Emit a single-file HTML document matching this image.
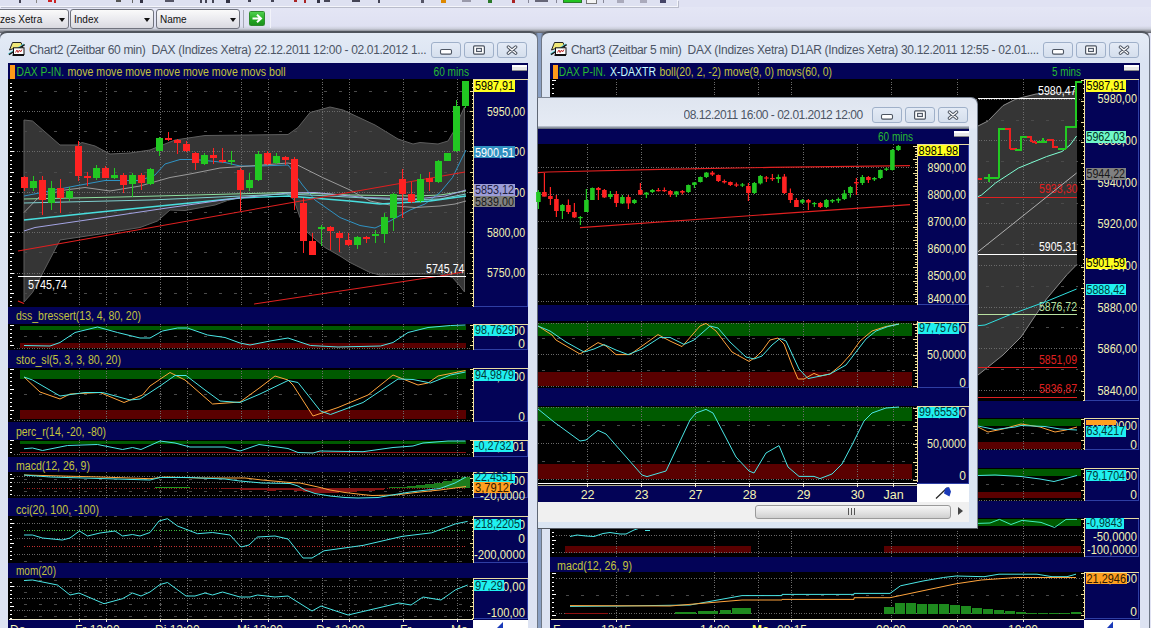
<!DOCTYPE html>
<html><head><meta charset="utf-8"><title>Charts</title>
<style>
html,body{margin:0;padding:0}
body{width:1151px;height:628px;overflow:hidden;position:relative;background:#e0e2f3;font-family:"Liberation Sans",Arial,sans-serif;font-size:12px}
div,span{position:absolute;box-sizing:border-box}
.L{position:absolute;left:0;top:0}
.tb{left:0;top:0;width:678px;height:7px;background:#dee1f1;border-bottom:1px solid #f4f5fb;border-right:1px solid #f4f5fb;box-shadow:1px 1px 0 #b9bccb}
.tbg{left:0;top:7px;width:1151px;height:26px;background:linear-gradient(#e4e6f5,#dfe1f2 19px,#c9ccd8 22px,#8d9098 24px,#5a5d64 26px)}
.cb{top:9px;height:20px;border:1px solid #70737e;border-radius:3px;background:linear-gradient(#fafafa,#e9e9ee 55%,#d9d9e0);color:#111;font-size:11.5px;line-height:18px;white-space:nowrap;overflow:hidden}
.cb span{left:3px;top:0;transform:scaleX(0.87);transform-origin:0 0}
.cb i{position:absolute;right:3px;top:7.5px;width:0;height:0;border-left:3.5px solid transparent;border-right:3.5px solid transparent;border-top:4px solid #111}
.win{background:linear-gradient(#e4ebf6,#dbe4f2 30px,#dde3f2);border:1px solid #6e7785;border-top:2px solid #50555d;border-radius:8px 8px 0 0}
.ttl{color:#4c5565;font-size:12px;white-space:nowrap;overflow:hidden;line-height:18px;height:18px}
.wb{height:16px;width:30px;border:1px solid #9fb0c9;border-radius:3px;background:linear-gradient(#e4ebf6,#d5dfed)}
.ico{width:17px;height:15px}
</style></head><body>

<div class="tbg"></div>
<div class="tb"></div>
<div style="left:563px;top:0;width:19px;height:3px;background:#22c322;border:1px solid #2a7a2a;border-top:0"></div>
<div style="left:586px;top:0;width:11px;height:4px;background:#f4f4f4;border:1px solid #777;border-top:0"></div>
<div class="cb" style="left:-8px;width:77px"><span style="left:7px">zes Xetra</span><i></i></div>
<div class="cb" style="left:70px;width:84px"><span>Index</span><i></i></div>
<div class="cb" style="left:156px;width:84px"><span>Name</span><i></i></div>
<div style="left:243px;top:10px;width:1px;height:18px;background:#a5a8b5"></div>
<div style="left:249px;top:11px;width:16px;height:15px;border:1px solid #2f8a2f;border-radius:1.5px;background:linear-gradient(#4fd04f,#22a822 60%,#1c901c)"><svg width="14" height="13" viewBox="0 0 14 13" style="position:absolute;left:0;top:0"><path d="M2.5 6.5 H10.5 M7 2.8 L11 6.5 L7 10.2" stroke="#fff" stroke-width="2" fill="none"/></svg></div>
<div style="left:270px;top:9px;width:1px;height:19px;background:#f2f3fa"></div>
<div style="left:19px;top:0;width:2px;height:3px;background:#445"></div><div style="left:36px;top:0;width:1px;height:3px;background:#888"></div><div style="left:48px;top:0;width:4px;height:2px;background:#c22"></div><div style="left:54px;top:0;width:2px;height:3px;background:#c22"></div><div style="left:116px;top:0;width:5px;height:2px;background:#555"></div><div style="left:132px;top:0;width:1px;height:3px;background:#666"></div><div style="left:140px;top:0;width:3px;height:3px;background:#334"></div><div style="left:165px;top:0;width:9px;height:2px;background:#556"></div><div style="left:200px;top:0;width:2px;height:3px;background:#445"></div><div style="left:205px;top:0;width:2px;height:3px;background:#445"></div><div style="left:212px;top:0;width:2px;height:3px;background:#445"></div><div style="left:226px;top:0;width:4px;height:3px;background:#334"></div><div style="left:248px;top:0;width:3px;height:2px;background:#445"></div><div style="left:271px;top:0;width:3px;height:2px;background:#445"></div><div style="left:294px;top:0;width:3px;height:2px;background:#a22"></div><div style="left:304px;top:0;width:2px;height:3px;background:#a22"></div><div style="left:317px;top:0;width:3px;height:3px;background:#334"></div><div style="left:324px;top:0;width:6px;height:2px;background:#445"></div><div style="left:352px;top:0;width:8px;height:2px;background:#445"></div><div style="left:378px;top:0;width:2px;height:3px;background:#445"></div><div style="left:421px;top:0;width:3px;height:3px;background:#556"></div><div style="left:441px;top:0;width:5px;height:3px;background:#d80"></div><div style="left:462px;top:0;width:9px;height:2px;background:#99a"></div><div style="left:488px;top:0;width:4px;height:3px;background:#2a7a2a"></div><div style="left:512px;top:0;width:3px;height:3px;background:#a22"></div><div style="left:528px;top:0;width:1px;height:3px;background:#889"></div><div style="left:535px;top:0;width:13px;height:2px;background:#667"></div><div style="left:556px;top:0;width:1px;height:3px;background:#889"></div><div style="left:603px;top:0;width:1px;height:3px;background:#889"></div><div style="left:617px;top:0;width:7px;height:3px;background:#aab"></div><div style="left:640px;top:0;width:7px;height:3px;background:#aab"></div><div style="left:660px;top:0;width:6px;height:3px;background:#446"></div>
<div style="left:536px;top:33px;width:7px;height:600px;background:linear-gradient(90deg,#5f6f8c,#8aa0c4 30%,#8aa0c4 70%,#5f6f8c)"></div>
<div class="win" style="left:-1px;top:31px;width:539px;height:610px"></div>
<svg style="position:absolute;left:8px;top:41px" width="18" height="16" viewBox="0 0 18 16"><path d="M4.5 1.5 H13 L14.5 5 V7.5 H5.5 L1.5 9 Z" fill="#f0e878" stroke="#222" stroke-width="1"/><path d="M0.4 12.9 L16 3" stroke="#5ad8e0" stroke-width="1.2"/><path d="M1 13.6 L16.7 3.6" stroke="#1a1a1a" stroke-width="1.3"/><rect x="5.5" y="6.8" width="10.5" height="6.7" fill="#fff" stroke="#111" stroke-width="1"/><rect x="4.5" y="13.4" width="11.5" height="1.6" fill="#111"/><path d="M7.5 11.5 L9 9 L10 11.5 L11.5 9 L12.5 11 L14 8.5" stroke="#c03030" stroke-width="1" fill="none"/></svg>
<div class="ttl" id="t2" style="left:29px;top:41px;width:402px;letter-spacing:-0.33px">Chart2 (Zeitbar 60 min)&nbsp; DAX (Indizes Xetra) 22.12.2011 12:00 - 02.01.2012 1...</div>
<div class="wb" style="left:431px;top:42px"><svg width="30" height="16" viewBox="0 0 30 16" style="position:absolute;left:-1px;top:-1px"><rect x="9.5" y="7.5" width="11" height="4.6" rx="1.3" fill="#fff" stroke="#4d5562" stroke-width="1.1"/></svg></div><div class="wb" style="left:464px;top:42px"><svg width="30" height="16" viewBox="0 0 30 16" style="position:absolute;left:-1px;top:-1px"><rect x="9.6" y="3.9" width="10.8" height="8.2" rx="1" fill="#fff" stroke="#4d5562" stroke-width="1.2"/><rect x="12.6" y="6.4" width="4.8" height="3.1" fill="#e8ecf4" stroke="#4d5562" stroke-width="1.1"/></svg></div><div class="wb" style="left:497px;top:42px"><svg width="30" height="16" viewBox="0 0 30 16" style="position:absolute;left:-1px;top:-1px"><path d="M11.3 5 L18.7 11.2 M18.7 5 L11.3 11.2" stroke="#4d5562" stroke-width="3.3" stroke-linecap="round" fill="none"/><path d="M11.3 5 L18.7 11.2 M18.7 5 L11.3 11.2" stroke="#fff" stroke-width="1.3" stroke-linecap="round" fill="none"/></svg></div>
<div class="win" style="left:541px;top:31px;width:609px;height:610px"></div>
<svg style="position:absolute;left:550px;top:41px" width="18" height="16" viewBox="0 0 18 16"><path d="M4.5 1.5 H13 L14.5 5 V7.5 H5.5 L1.5 9 Z" fill="#f0e878" stroke="#222" stroke-width="1"/><path d="M0.4 12.9 L16 3" stroke="#5ad8e0" stroke-width="1.2"/><path d="M1 13.6 L16.7 3.6" stroke="#1a1a1a" stroke-width="1.3"/><rect x="5.5" y="6.8" width="10.5" height="6.7" fill="#fff" stroke="#111" stroke-width="1"/><rect x="4.5" y="13.4" width="11.5" height="1.6" fill="#111"/><path d="M7.5 11.5 L9 9 L10 11.5 L11.5 9 L12.5 11 L14 8.5" stroke="#c03030" stroke-width="1" fill="none"/></svg>
<div class="ttl" id="t3" style="left:571px;top:41px;width:472px;letter-spacing:-0.31px">Chart3 (Zeitbar 5 min)&nbsp; DAX (Indizes Xetra) D1AR (Indizes Xetra) 30.12.2011 12:55 - 02.01....</div>
<div class="wb" style="left:1043px;top:42px"><svg width="30" height="16" viewBox="0 0 30 16" style="position:absolute;left:-1px;top:-1px"><rect x="9.5" y="7.5" width="11" height="4.6" rx="1.3" fill="#fff" stroke="#4d5562" stroke-width="1.1"/></svg></div><div class="wb" style="left:1076px;top:42px"><svg width="30" height="16" viewBox="0 0 30 16" style="position:absolute;left:-1px;top:-1px"><rect x="9.6" y="3.9" width="10.8" height="8.2" rx="1" fill="#fff" stroke="#4d5562" stroke-width="1.2"/><rect x="12.6" y="6.4" width="4.8" height="3.1" fill="#e8ecf4" stroke="#4d5562" stroke-width="1.1"/></svg></div><div class="wb" style="left:1109px;top:42px"><svg width="30" height="16" viewBox="0 0 30 16" style="position:absolute;left:-1px;top:-1px"><path d="M11.3 5 L18.7 11.2 M18.7 5 L11.3 11.2" stroke="#4d5562" stroke-width="3.3" stroke-linecap="round" fill="none"/><path d="M11.3 5 L18.7 11.2 M18.7 5 L11.3 11.2" stroke="#fff" stroke-width="1.3" stroke-linecap="round" fill="none"/></svg></div>
<div style="left:8px;top:63px;width:520px;height:570px;background:#000"></div>
<div style="left:550px;top:63px;width:590px;height:570px;background:#000"></div>
<svg class="L" width="1151" height="628" viewBox="0 0 1151 628" font-family='"Liberation Sans", Arial, sans-serif' shape-rendering="crispEdges"><rect x="8.0" y="63.0" width="520.0" height="16.0" fill="#030357" />
<rect x="474.0" y="79.0" width="54.0" height="549.0" fill="#030357" />
<rect x="8.0" y="307.0" width="520.0" height="16.5" fill="#030357" />
<rect x="8.0" y="349.5" width="520.0" height="18.5" fill="#030357" />
<rect x="8.0" y="422.0" width="520.0" height="17.5" fill="#030357" />
<rect x="8.0" y="456.5" width="520.0" height="15.5" fill="#030357" />
<rect x="8.0" y="498.0" width="520.0" height="18.0" fill="#030357" />
<rect x="8.0" y="562.5" width="520.0" height="15.0" fill="#030357" />
<rect x="8.0" y="620.0" width="465.0" height="8.0" fill="#030357" />
<rect x="473.0" y="620.0" width="55.0" height="8.0" fill="#ffffff" />
<rect x="10.0" y="65.0" width="5.0" height="14.0" fill="#ff9a1a" />
<text x="16.5" y="76.0" fill="#28bc30" font-size="12" text-anchor="start" textLength="47.5" lengthAdjust="spacingAndGlyphs" >DAX P-IN.</text>
<text x="67.5" y="76.0" fill="#c4c43c" font-size="12" text-anchor="start" textLength="218.0" lengthAdjust="spacingAndGlyphs" >move move move move move move movs boll</text>
<text x="433.5" y="76.0" fill="#28bc30" font-size="12" text-anchor="start" textLength="35.5" lengthAdjust="spacingAndGlyphs" >60 mins</text>
<rect x="512.0" y="65.0" width="15.0" height="6.0" fill="#e8e8e8" />
<rect x="512.0" y="65.0" width="15.0" height="2.0" fill="#ffffff" />
<line x1="512.0" y1="70.5" x2="527.0" y2="70.5" stroke="#888" stroke-width="1"/>
<rect x="20.0" y="325.5" width="446.0" height="4.5" fill="#005a00" />
<rect x="20.0" y="342.5" width="446.0" height="5.2" fill="#5a0000" />
<rect x="20.0" y="370.0" width="446.0" height="9.0" fill="#005a00" />
<rect x="20.0" y="409.5" width="446.0" height="9.0" fill="#5a0000" />
<rect x="20.0" y="441.2" width="446.0" height="2.8" fill="#005a00" />
<line x1="20.0" y1="452.2" x2="466.0" y2="452.2" stroke="#8a1010" stroke-width="1"/>
<polygon points="24.0,120.0 32.5,121.0 60.0,145.0 77.5,145.0 82.0,142.5 95.0,146.0 110.0,154.0 130.0,153.0 150.0,150.0 160.0,146.0 175.0,140.0 205.0,135.5 250.0,135.0 288.0,134.5 298.0,127.5 310.0,112.5 330.0,107.0 343.0,110.0 375.0,125.0 398.0,139.0 413.0,144.0 420.0,142.5 438.0,144.0 448.0,141.0 453.0,132.5 458.0,121.0 464.5,107.0 464.5,292.0 460.0,286.0 452.5,277.5 440.0,274.0 415.0,274.0 380.0,275.0 370.0,272.5 350.0,262.5 340.0,256.0 325.0,247.5 307.5,232.5 300.0,217.5 294.0,200.0 285.0,192.5 265.0,195.0 240.0,197.5 227.5,200.5 215.0,205.0 185.0,210.5 170.0,210.0 157.5,221.0 140.0,227.5 100.0,234.0 60.0,240.0 32.5,292.5 24.0,302.0" fill="#353535" stroke="#5e5e5e" stroke-width="1" shape-rendering="auto"/>
<line x1="79.5" y1="79.0" x2="79.5" y2="307.0" stroke="#6c6c6c" stroke-width="1" stroke-dasharray="1,1.5"/>
<line x1="106.5" y1="79.0" x2="106.5" y2="307.0" stroke="#6c6c6c" stroke-width="1" stroke-dasharray="1,1.5"/>
<line x1="160.5" y1="79.0" x2="160.5" y2="307.0" stroke="#6c6c6c" stroke-width="1" stroke-dasharray="1,1.5"/>
<line x1="187.5" y1="79.0" x2="187.5" y2="307.0" stroke="#6c6c6c" stroke-width="1" stroke-dasharray="1,1.5"/>
<line x1="241.5" y1="79.0" x2="241.5" y2="307.0" stroke="#6c6c6c" stroke-width="1" stroke-dasharray="1,1.5"/>
<line x1="268.5" y1="79.0" x2="268.5" y2="307.0" stroke="#6c6c6c" stroke-width="1" stroke-dasharray="1,1.5"/>
<line x1="322.5" y1="79.0" x2="322.5" y2="307.0" stroke="#6c6c6c" stroke-width="1" stroke-dasharray="1,1.5"/>
<line x1="349.5" y1="79.0" x2="349.5" y2="307.0" stroke="#6c6c6c" stroke-width="1" stroke-dasharray="1,1.5"/>
<line x1="403.5" y1="79.0" x2="403.5" y2="307.0" stroke="#6c6c6c" stroke-width="1" stroke-dasharray="1,1.5"/>
<line x1="457.5" y1="79.0" x2="457.5" y2="307.0" stroke="#6c6c6c" stroke-width="1" stroke-dasharray="1,1.5"/>
<line x1="79.5" y1="323.5" x2="79.5" y2="349.5" stroke="#6c6c6c" stroke-width="1" stroke-dasharray="1,1.5"/>
<line x1="106.5" y1="323.5" x2="106.5" y2="349.5" stroke="#6c6c6c" stroke-width="1" stroke-dasharray="1,1.5"/>
<line x1="160.5" y1="323.5" x2="160.5" y2="349.5" stroke="#6c6c6c" stroke-width="1" stroke-dasharray="1,1.5"/>
<line x1="187.5" y1="323.5" x2="187.5" y2="349.5" stroke="#6c6c6c" stroke-width="1" stroke-dasharray="1,1.5"/>
<line x1="241.5" y1="323.5" x2="241.5" y2="349.5" stroke="#6c6c6c" stroke-width="1" stroke-dasharray="1,1.5"/>
<line x1="268.5" y1="323.5" x2="268.5" y2="349.5" stroke="#6c6c6c" stroke-width="1" stroke-dasharray="1,1.5"/>
<line x1="322.5" y1="323.5" x2="322.5" y2="349.5" stroke="#6c6c6c" stroke-width="1" stroke-dasharray="1,1.5"/>
<line x1="349.5" y1="323.5" x2="349.5" y2="349.5" stroke="#6c6c6c" stroke-width="1" stroke-dasharray="1,1.5"/>
<line x1="403.5" y1="323.5" x2="403.5" y2="349.5" stroke="#6c6c6c" stroke-width="1" stroke-dasharray="1,1.5"/>
<line x1="457.5" y1="323.5" x2="457.5" y2="349.5" stroke="#6c6c6c" stroke-width="1" stroke-dasharray="1,1.5"/>
<line x1="79.5" y1="368.0" x2="79.5" y2="422.0" stroke="#6c6c6c" stroke-width="1" stroke-dasharray="1,1.5"/>
<line x1="106.5" y1="368.0" x2="106.5" y2="422.0" stroke="#6c6c6c" stroke-width="1" stroke-dasharray="1,1.5"/>
<line x1="160.5" y1="368.0" x2="160.5" y2="422.0" stroke="#6c6c6c" stroke-width="1" stroke-dasharray="1,1.5"/>
<line x1="187.5" y1="368.0" x2="187.5" y2="422.0" stroke="#6c6c6c" stroke-width="1" stroke-dasharray="1,1.5"/>
<line x1="241.5" y1="368.0" x2="241.5" y2="422.0" stroke="#6c6c6c" stroke-width="1" stroke-dasharray="1,1.5"/>
<line x1="268.5" y1="368.0" x2="268.5" y2="422.0" stroke="#6c6c6c" stroke-width="1" stroke-dasharray="1,1.5"/>
<line x1="322.5" y1="368.0" x2="322.5" y2="422.0" stroke="#6c6c6c" stroke-width="1" stroke-dasharray="1,1.5"/>
<line x1="349.5" y1="368.0" x2="349.5" y2="422.0" stroke="#6c6c6c" stroke-width="1" stroke-dasharray="1,1.5"/>
<line x1="403.5" y1="368.0" x2="403.5" y2="422.0" stroke="#6c6c6c" stroke-width="1" stroke-dasharray="1,1.5"/>
<line x1="457.5" y1="368.0" x2="457.5" y2="422.0" stroke="#6c6c6c" stroke-width="1" stroke-dasharray="1,1.5"/>
<line x1="79.5" y1="439.5" x2="79.5" y2="456.5" stroke="#6c6c6c" stroke-width="1" stroke-dasharray="1,1.5"/>
<line x1="106.5" y1="439.5" x2="106.5" y2="456.5" stroke="#6c6c6c" stroke-width="1" stroke-dasharray="1,1.5"/>
<line x1="160.5" y1="439.5" x2="160.5" y2="456.5" stroke="#6c6c6c" stroke-width="1" stroke-dasharray="1,1.5"/>
<line x1="187.5" y1="439.5" x2="187.5" y2="456.5" stroke="#6c6c6c" stroke-width="1" stroke-dasharray="1,1.5"/>
<line x1="241.5" y1="439.5" x2="241.5" y2="456.5" stroke="#6c6c6c" stroke-width="1" stroke-dasharray="1,1.5"/>
<line x1="268.5" y1="439.5" x2="268.5" y2="456.5" stroke="#6c6c6c" stroke-width="1" stroke-dasharray="1,1.5"/>
<line x1="322.5" y1="439.5" x2="322.5" y2="456.5" stroke="#6c6c6c" stroke-width="1" stroke-dasharray="1,1.5"/>
<line x1="349.5" y1="439.5" x2="349.5" y2="456.5" stroke="#6c6c6c" stroke-width="1" stroke-dasharray="1,1.5"/>
<line x1="403.5" y1="439.5" x2="403.5" y2="456.5" stroke="#6c6c6c" stroke-width="1" stroke-dasharray="1,1.5"/>
<line x1="457.5" y1="439.5" x2="457.5" y2="456.5" stroke="#6c6c6c" stroke-width="1" stroke-dasharray="1,1.5"/>
<line x1="79.5" y1="472.0" x2="79.5" y2="498.0" stroke="#6c6c6c" stroke-width="1" stroke-dasharray="1,1.5"/>
<line x1="106.5" y1="472.0" x2="106.5" y2="498.0" stroke="#6c6c6c" stroke-width="1" stroke-dasharray="1,1.5"/>
<line x1="160.5" y1="472.0" x2="160.5" y2="498.0" stroke="#6c6c6c" stroke-width="1" stroke-dasharray="1,1.5"/>
<line x1="187.5" y1="472.0" x2="187.5" y2="498.0" stroke="#6c6c6c" stroke-width="1" stroke-dasharray="1,1.5"/>
<line x1="241.5" y1="472.0" x2="241.5" y2="498.0" stroke="#6c6c6c" stroke-width="1" stroke-dasharray="1,1.5"/>
<line x1="268.5" y1="472.0" x2="268.5" y2="498.0" stroke="#6c6c6c" stroke-width="1" stroke-dasharray="1,1.5"/>
<line x1="322.5" y1="472.0" x2="322.5" y2="498.0" stroke="#6c6c6c" stroke-width="1" stroke-dasharray="1,1.5"/>
<line x1="349.5" y1="472.0" x2="349.5" y2="498.0" stroke="#6c6c6c" stroke-width="1" stroke-dasharray="1,1.5"/>
<line x1="403.5" y1="472.0" x2="403.5" y2="498.0" stroke="#6c6c6c" stroke-width="1" stroke-dasharray="1,1.5"/>
<line x1="457.5" y1="472.0" x2="457.5" y2="498.0" stroke="#6c6c6c" stroke-width="1" stroke-dasharray="1,1.5"/>
<line x1="79.5" y1="516.0" x2="79.5" y2="562.5" stroke="#6c6c6c" stroke-width="1" stroke-dasharray="1,1.5"/>
<line x1="106.5" y1="516.0" x2="106.5" y2="562.5" stroke="#6c6c6c" stroke-width="1" stroke-dasharray="1,1.5"/>
<line x1="160.5" y1="516.0" x2="160.5" y2="562.5" stroke="#6c6c6c" stroke-width="1" stroke-dasharray="1,1.5"/>
<line x1="187.5" y1="516.0" x2="187.5" y2="562.5" stroke="#6c6c6c" stroke-width="1" stroke-dasharray="1,1.5"/>
<line x1="241.5" y1="516.0" x2="241.5" y2="562.5" stroke="#6c6c6c" stroke-width="1" stroke-dasharray="1,1.5"/>
<line x1="268.5" y1="516.0" x2="268.5" y2="562.5" stroke="#6c6c6c" stroke-width="1" stroke-dasharray="1,1.5"/>
<line x1="322.5" y1="516.0" x2="322.5" y2="562.5" stroke="#6c6c6c" stroke-width="1" stroke-dasharray="1,1.5"/>
<line x1="349.5" y1="516.0" x2="349.5" y2="562.5" stroke="#6c6c6c" stroke-width="1" stroke-dasharray="1,1.5"/>
<line x1="403.5" y1="516.0" x2="403.5" y2="562.5" stroke="#6c6c6c" stroke-width="1" stroke-dasharray="1,1.5"/>
<line x1="457.5" y1="516.0" x2="457.5" y2="562.5" stroke="#6c6c6c" stroke-width="1" stroke-dasharray="1,1.5"/>
<line x1="79.5" y1="577.5" x2="79.5" y2="619.0" stroke="#6c6c6c" stroke-width="1" stroke-dasharray="1,1.5"/>
<line x1="106.5" y1="577.5" x2="106.5" y2="619.0" stroke="#6c6c6c" stroke-width="1" stroke-dasharray="1,1.5"/>
<line x1="160.5" y1="577.5" x2="160.5" y2="619.0" stroke="#6c6c6c" stroke-width="1" stroke-dasharray="1,1.5"/>
<line x1="187.5" y1="577.5" x2="187.5" y2="619.0" stroke="#6c6c6c" stroke-width="1" stroke-dasharray="1,1.5"/>
<line x1="241.5" y1="577.5" x2="241.5" y2="619.0" stroke="#6c6c6c" stroke-width="1" stroke-dasharray="1,1.5"/>
<line x1="268.5" y1="577.5" x2="268.5" y2="619.0" stroke="#6c6c6c" stroke-width="1" stroke-dasharray="1,1.5"/>
<line x1="322.5" y1="577.5" x2="322.5" y2="619.0" stroke="#6c6c6c" stroke-width="1" stroke-dasharray="1,1.5"/>
<line x1="349.5" y1="577.5" x2="349.5" y2="619.0" stroke="#6c6c6c" stroke-width="1" stroke-dasharray="1,1.5"/>
<line x1="403.5" y1="577.5" x2="403.5" y2="619.0" stroke="#6c6c6c" stroke-width="1" stroke-dasharray="1,1.5"/>
<line x1="457.5" y1="577.5" x2="457.5" y2="619.0" stroke="#6c6c6c" stroke-width="1" stroke-dasharray="1,1.5"/>
<line x1="14.0" y1="111.5" x2="472.0" y2="111.5" stroke="#6a6a6a" stroke-width="1" stroke-dasharray="1,1.5"/>
<line x1="14.0" y1="151.9" x2="472.0" y2="151.9" stroke="#6a6a6a" stroke-width="1" stroke-dasharray="1,1.5"/>
<line x1="14.0" y1="192.3" x2="472.0" y2="192.3" stroke="#6a6a6a" stroke-width="1" stroke-dasharray="1,1.5"/>
<line x1="14.0" y1="232.7" x2="472.0" y2="232.7" stroke="#6a6a6a" stroke-width="1" stroke-dasharray="1,1.5"/>
<line x1="14.0" y1="273.0" x2="472.0" y2="273.0" stroke="#6a6a6a" stroke-width="1" stroke-dasharray="1,1.5"/>
<line x1="24.0" y1="91.3" x2="466.0" y2="91.3" stroke="#4a4a4a" stroke-width="1" stroke-dasharray="3,12"/>
<line x1="24.0" y1="131.7" x2="466.0" y2="131.7" stroke="#4a4a4a" stroke-width="1" stroke-dasharray="3,12"/>
<line x1="24.0" y1="172.1" x2="466.0" y2="172.1" stroke="#4a4a4a" stroke-width="1" stroke-dasharray="3,12"/>
<line x1="24.0" y1="212.5" x2="466.0" y2="212.5" stroke="#4a4a4a" stroke-width="1" stroke-dasharray="3,12"/>
<line x1="24.0" y1="252.9" x2="466.0" y2="252.9" stroke="#4a4a4a" stroke-width="1" stroke-dasharray="3,12"/>
<line x1="24.0" y1="293.3" x2="466.0" y2="293.3" stroke="#4a4a4a" stroke-width="1" stroke-dasharray="3,12"/>
<line x1="14.0" y1="348.5" x2="472.0" y2="348.5" stroke="#686868" stroke-width="1" stroke-dasharray="1,1.5"/>
<line x1="24.0" y1="336.5" x2="466.0" y2="336.5" stroke="#4a4a4a" stroke-width="1" stroke-dasharray="3,12"/>
<line x1="14.0" y1="420.5" x2="472.0" y2="420.5" stroke="#686868" stroke-width="1" stroke-dasharray="1,1.5"/>
<line x1="24.0" y1="394.5" x2="466.0" y2="394.5" stroke="#4a4a4a" stroke-width="1" stroke-dasharray="3,12"/>
<line x1="14.0" y1="454.5" x2="472.0" y2="454.5" stroke="#686868" stroke-width="1" stroke-dasharray="1,1.5"/>
<line x1="14.0" y1="476.0" x2="472.0" y2="476.0" stroke="#686868" stroke-width="1" stroke-dasharray="1,1.5"/>
<line x1="14.0" y1="482.5" x2="472.0" y2="482.5" stroke="#686868" stroke-width="1" stroke-dasharray="1,1.5"/>
<line x1="14.0" y1="495.0" x2="472.0" y2="495.0" stroke="#686868" stroke-width="1" stroke-dasharray="1,1.5"/>
<line x1="24.0" y1="479.0" x2="466.0" y2="479.0" stroke="#4a4a4a" stroke-width="1" stroke-dasharray="3,12"/>
<line x1="24.0" y1="491.5" x2="466.0" y2="491.5" stroke="#4a4a4a" stroke-width="1" stroke-dasharray="3,12"/>
<line x1="14.0" y1="523.0" x2="472.0" y2="523.0" stroke="#686868" stroke-width="1" stroke-dasharray="1,1.5"/>
<line x1="14.0" y1="538.5" x2="472.0" y2="538.5" stroke="#686868" stroke-width="1" stroke-dasharray="1,1.5"/>
<line x1="14.0" y1="554.0" x2="472.0" y2="554.0" stroke="#686868" stroke-width="1" stroke-dasharray="1,1.5"/>
<line x1="24.0" y1="530.8" x2="466.0" y2="530.8" stroke="#40c040" stroke-width="1" stroke-dasharray="1,1.5"/>
<line x1="24.0" y1="546.0" x2="466.0" y2="546.0" stroke="#c03030" stroke-width="1" stroke-dasharray="1,1.5"/>
<line x1="24.0" y1="516.5" x2="466.0" y2="516.5" stroke="#4a4a4a" stroke-width="1" stroke-dasharray="3,12"/>
<line x1="24.0" y1="561.5" x2="466.0" y2="561.5" stroke="#4a4a4a" stroke-width="1" stroke-dasharray="3,12"/>
<line x1="14.0" y1="586.0" x2="472.0" y2="586.0" stroke="#686868" stroke-width="1" stroke-dasharray="1,1.5"/>
<line x1="14.0" y1="598.0" x2="472.0" y2="598.0" stroke="#686868" stroke-width="1" stroke-dasharray="1,1.5"/>
<line x1="14.0" y1="610.0" x2="472.0" y2="610.0" stroke="#686868" stroke-width="1" stroke-dasharray="1,1.5"/>
<line x1="24.0" y1="580.0" x2="466.0" y2="580.0" stroke="#4a4a4a" stroke-width="1" stroke-dasharray="3,12"/>
<line x1="24.0" y1="592.0" x2="466.0" y2="592.0" stroke="#4a4a4a" stroke-width="1" stroke-dasharray="3,12"/>
<line x1="24.0" y1="604.0" x2="466.0" y2="604.0" stroke="#4a4a4a" stroke-width="1" stroke-dasharray="3,12"/>
<line x1="24.0" y1="616.0" x2="466.0" y2="616.0" stroke="#4a4a4a" stroke-width="1" stroke-dasharray="3,12"/>
<line x1="24.0" y1="488.8" x2="466.0" y2="488.8" stroke="#a02020" stroke-width="1" stroke-dasharray="1,1.5"/>
<line x1="10.0" y1="83.1" x2="12.0" y2="83.1" stroke="#ffffff" stroke-width="1"/>
<line x1="10.0" y1="87.1" x2="12.0" y2="87.1" stroke="#ffffff" stroke-width="1"/>
<line x1="10.0" y1="91.2" x2="14.0" y2="91.2" stroke="#ffffff" stroke-width="1"/>
<line x1="10.0" y1="95.2" x2="12.0" y2="95.2" stroke="#ffffff" stroke-width="1"/>
<line x1="10.0" y1="99.2" x2="12.0" y2="99.2" stroke="#ffffff" stroke-width="1"/>
<line x1="10.0" y1="103.3" x2="12.0" y2="103.3" stroke="#ffffff" stroke-width="1"/>
<line x1="10.0" y1="107.4" x2="12.0" y2="107.4" stroke="#ffffff" stroke-width="1"/>
<line x1="10.0" y1="111.4" x2="14.0" y2="111.4" stroke="#ffffff" stroke-width="1"/>
<line x1="10.0" y1="115.5" x2="12.0" y2="115.5" stroke="#ffffff" stroke-width="1"/>
<line x1="10.0" y1="119.5" x2="12.0" y2="119.5" stroke="#ffffff" stroke-width="1"/>
<line x1="10.0" y1="123.6" x2="12.0" y2="123.6" stroke="#ffffff" stroke-width="1"/>
<line x1="10.0" y1="127.6" x2="12.0" y2="127.6" stroke="#ffffff" stroke-width="1"/>
<line x1="10.0" y1="131.7" x2="14.0" y2="131.7" stroke="#ffffff" stroke-width="1"/>
<line x1="10.0" y1="135.7" x2="12.0" y2="135.7" stroke="#ffffff" stroke-width="1"/>
<line x1="10.0" y1="139.8" x2="12.0" y2="139.8" stroke="#ffffff" stroke-width="1"/>
<line x1="10.0" y1="143.8" x2="12.0" y2="143.8" stroke="#ffffff" stroke-width="1"/>
<line x1="10.0" y1="147.8" x2="12.0" y2="147.8" stroke="#ffffff" stroke-width="1"/>
<line x1="10.0" y1="151.9" x2="14.0" y2="151.9" stroke="#ffffff" stroke-width="1"/>
<line x1="10.0" y1="155.9" x2="12.0" y2="155.9" stroke="#ffffff" stroke-width="1"/>
<line x1="10.0" y1="160.0" x2="12.0" y2="160.0" stroke="#ffffff" stroke-width="1"/>
<line x1="10.0" y1="164.1" x2="12.0" y2="164.1" stroke="#ffffff" stroke-width="1"/>
<line x1="10.0" y1="168.1" x2="12.0" y2="168.1" stroke="#ffffff" stroke-width="1"/>
<line x1="10.0" y1="172.2" x2="14.0" y2="172.2" stroke="#ffffff" stroke-width="1"/>
<line x1="10.0" y1="176.2" x2="12.0" y2="176.2" stroke="#ffffff" stroke-width="1"/>
<line x1="10.0" y1="180.2" x2="12.0" y2="180.2" stroke="#ffffff" stroke-width="1"/>
<line x1="10.0" y1="184.3" x2="12.0" y2="184.3" stroke="#ffffff" stroke-width="1"/>
<line x1="10.0" y1="188.4" x2="12.0" y2="188.4" stroke="#ffffff" stroke-width="1"/>
<line x1="10.0" y1="192.4" x2="14.0" y2="192.4" stroke="#ffffff" stroke-width="1"/>
<line x1="10.0" y1="196.4" x2="12.0" y2="196.4" stroke="#ffffff" stroke-width="1"/>
<line x1="10.0" y1="200.5" x2="12.0" y2="200.5" stroke="#ffffff" stroke-width="1"/>
<line x1="10.0" y1="204.6" x2="12.0" y2="204.6" stroke="#ffffff" stroke-width="1"/>
<line x1="10.0" y1="208.6" x2="12.0" y2="208.6" stroke="#ffffff" stroke-width="1"/>
<line x1="10.0" y1="212.7" x2="14.0" y2="212.7" stroke="#ffffff" stroke-width="1"/>
<line x1="10.0" y1="216.7" x2="12.0" y2="216.7" stroke="#ffffff" stroke-width="1"/>
<line x1="10.0" y1="220.8" x2="12.0" y2="220.8" stroke="#ffffff" stroke-width="1"/>
<line x1="10.0" y1="224.8" x2="12.0" y2="224.8" stroke="#ffffff" stroke-width="1"/>
<line x1="10.0" y1="228.8" x2="12.0" y2="228.8" stroke="#ffffff" stroke-width="1"/>
<line x1="10.0" y1="232.9" x2="14.0" y2="232.9" stroke="#ffffff" stroke-width="1"/>
<line x1="10.0" y1="236.9" x2="12.0" y2="236.9" stroke="#ffffff" stroke-width="1"/>
<line x1="10.0" y1="241.0" x2="12.0" y2="241.0" stroke="#ffffff" stroke-width="1"/>
<line x1="10.0" y1="245.1" x2="12.0" y2="245.1" stroke="#ffffff" stroke-width="1"/>
<line x1="10.0" y1="249.1" x2="12.0" y2="249.1" stroke="#ffffff" stroke-width="1"/>
<line x1="10.0" y1="253.2" x2="14.0" y2="253.2" stroke="#ffffff" stroke-width="1"/>
<line x1="10.0" y1="257.2" x2="12.0" y2="257.2" stroke="#ffffff" stroke-width="1"/>
<line x1="10.0" y1="261.2" x2="12.0" y2="261.2" stroke="#ffffff" stroke-width="1"/>
<line x1="10.0" y1="265.3" x2="12.0" y2="265.3" stroke="#ffffff" stroke-width="1"/>
<line x1="10.0" y1="269.4" x2="12.0" y2="269.4" stroke="#ffffff" stroke-width="1"/>
<line x1="10.0" y1="273.4" x2="14.0" y2="273.4" stroke="#ffffff" stroke-width="1"/>
<line x1="10.0" y1="277.4" x2="12.0" y2="277.4" stroke="#ffffff" stroke-width="1"/>
<line x1="10.0" y1="281.5" x2="12.0" y2="281.5" stroke="#ffffff" stroke-width="1"/>
<line x1="10.0" y1="285.6" x2="12.0" y2="285.6" stroke="#ffffff" stroke-width="1"/>
<line x1="10.0" y1="289.6" x2="12.0" y2="289.6" stroke="#ffffff" stroke-width="1"/>
<line x1="10.0" y1="293.6" x2="14.0" y2="293.6" stroke="#ffffff" stroke-width="1"/>
<line x1="10.0" y1="297.7" x2="12.0" y2="297.7" stroke="#ffffff" stroke-width="1"/>
<line x1="10.0" y1="301.8" x2="12.0" y2="301.8" stroke="#ffffff" stroke-width="1"/>
<line x1="10.0" y1="305.8" x2="12.0" y2="305.8" stroke="#ffffff" stroke-width="1"/>
<line x1="10.0" y1="325.5" x2="14.0" y2="325.5" stroke="#ffffff" stroke-width="1"/>
<line x1="10.0" y1="329.6" x2="12.0" y2="329.6" stroke="#ffffff" stroke-width="1"/>
<line x1="10.0" y1="333.6" x2="12.0" y2="333.6" stroke="#ffffff" stroke-width="1"/>
<line x1="10.0" y1="337.6" x2="12.0" y2="337.6" stroke="#ffffff" stroke-width="1"/>
<line x1="10.0" y1="341.7" x2="12.0" y2="341.7" stroke="#ffffff" stroke-width="1"/>
<line x1="10.0" y1="345.8" x2="14.0" y2="345.8" stroke="#ffffff" stroke-width="1"/>
<line x1="10.0" y1="369.6" x2="14.0" y2="369.6" stroke="#ffffff" stroke-width="1"/>
<line x1="10.0" y1="373.7" x2="12.0" y2="373.7" stroke="#ffffff" stroke-width="1"/>
<line x1="10.0" y1="377.7" x2="12.0" y2="377.7" stroke="#ffffff" stroke-width="1"/>
<line x1="10.0" y1="381.8" x2="12.0" y2="381.8" stroke="#ffffff" stroke-width="1"/>
<line x1="10.0" y1="385.8" x2="12.0" y2="385.8" stroke="#ffffff" stroke-width="1"/>
<line x1="10.0" y1="389.9" x2="14.0" y2="389.9" stroke="#ffffff" stroke-width="1"/>
<line x1="10.0" y1="393.9" x2="12.0" y2="393.9" stroke="#ffffff" stroke-width="1"/>
<line x1="10.0" y1="398.0" x2="12.0" y2="398.0" stroke="#ffffff" stroke-width="1"/>
<line x1="10.0" y1="402.0" x2="12.0" y2="402.0" stroke="#ffffff" stroke-width="1"/>
<line x1="10.0" y1="406.1" x2="12.0" y2="406.1" stroke="#ffffff" stroke-width="1"/>
<line x1="10.0" y1="410.1" x2="14.0" y2="410.1" stroke="#ffffff" stroke-width="1"/>
<line x1="10.0" y1="414.2" x2="12.0" y2="414.2" stroke="#ffffff" stroke-width="1"/>
<line x1="10.0" y1="418.2" x2="12.0" y2="418.2" stroke="#ffffff" stroke-width="1"/>
<line x1="10.0" y1="440.6" x2="14.0" y2="440.6" stroke="#ffffff" stroke-width="1"/>
<line x1="10.0" y1="444.7" x2="12.0" y2="444.7" stroke="#ffffff" stroke-width="1"/>
<line x1="10.0" y1="448.7" x2="12.0" y2="448.7" stroke="#ffffff" stroke-width="1"/>
<line x1="10.0" y1="452.8" x2="12.0" y2="452.8" stroke="#ffffff" stroke-width="1"/>
<line x1="10.0" y1="474.4" x2="12.0" y2="474.4" stroke="#ffffff" stroke-width="1"/>
<line x1="10.0" y1="478.5" x2="14.0" y2="478.5" stroke="#ffffff" stroke-width="1"/>
<line x1="10.0" y1="482.6" x2="12.0" y2="482.6" stroke="#ffffff" stroke-width="1"/>
<line x1="10.0" y1="486.6" x2="12.0" y2="486.6" stroke="#ffffff" stroke-width="1"/>
<line x1="10.0" y1="490.6" x2="12.0" y2="490.6" stroke="#ffffff" stroke-width="1"/>
<line x1="10.0" y1="494.7" x2="12.0" y2="494.7" stroke="#ffffff" stroke-width="1"/>
<line x1="10.0" y1="519.0" x2="12.0" y2="519.0" stroke="#ffffff" stroke-width="1"/>
<line x1="10.0" y1="523.0" x2="14.0" y2="523.0" stroke="#ffffff" stroke-width="1"/>
<line x1="10.0" y1="527.0" x2="12.0" y2="527.0" stroke="#ffffff" stroke-width="1"/>
<line x1="10.0" y1="531.1" x2="12.0" y2="531.1" stroke="#ffffff" stroke-width="1"/>
<line x1="10.0" y1="535.1" x2="12.0" y2="535.1" stroke="#ffffff" stroke-width="1"/>
<line x1="10.0" y1="539.2" x2="12.0" y2="539.2" stroke="#ffffff" stroke-width="1"/>
<line x1="10.0" y1="543.2" x2="14.0" y2="543.2" stroke="#ffffff" stroke-width="1"/>
<line x1="10.0" y1="547.3" x2="12.0" y2="547.3" stroke="#ffffff" stroke-width="1"/>
<line x1="10.0" y1="551.4" x2="12.0" y2="551.4" stroke="#ffffff" stroke-width="1"/>
<line x1="10.0" y1="555.4" x2="12.0" y2="555.4" stroke="#ffffff" stroke-width="1"/>
<line x1="10.0" y1="559.5" x2="12.0" y2="559.5" stroke="#ffffff" stroke-width="1"/>
<line x1="10.0" y1="582.0" x2="12.0" y2="582.0" stroke="#ffffff" stroke-width="1"/>
<line x1="10.0" y1="586.0" x2="14.0" y2="586.0" stroke="#ffffff" stroke-width="1"/>
<line x1="10.0" y1="590.0" x2="12.0" y2="590.0" stroke="#ffffff" stroke-width="1"/>
<line x1="10.0" y1="594.1" x2="12.0" y2="594.1" stroke="#ffffff" stroke-width="1"/>
<line x1="10.0" y1="598.1" x2="12.0" y2="598.1" stroke="#ffffff" stroke-width="1"/>
<line x1="10.0" y1="602.2" x2="12.0" y2="602.2" stroke="#ffffff" stroke-width="1"/>
<line x1="10.0" y1="606.2" x2="14.0" y2="606.2" stroke="#ffffff" stroke-width="1"/>
<line x1="10.0" y1="610.3" x2="12.0" y2="610.3" stroke="#ffffff" stroke-width="1"/>
<line x1="10.0" y1="614.4" x2="12.0" y2="614.4" stroke="#ffffff" stroke-width="1"/>
<line x1="10.0" y1="618.4" x2="12.0" y2="618.4" stroke="#ffffff" stroke-width="1"/>
<polyline points="24.0,199.0 120.0,197.0 288.0,192.5 350.0,195.0 415.0,196.0 440.0,195.0 466.0,191.0" fill="none" stroke="#8fe0a0" stroke-width="1" stroke-linejoin="round" shape-rendering="auto"/>
<polyline points="24.0,196.0 75.0,186.0 105.0,180.5 140.0,180.5 155.0,175.0 165.0,164.0 180.0,159.5 195.0,159.5 225.0,162.5 240.0,166.0 260.0,166.0 288.0,165.0 290.0,167.5 302.5,185.0 315.0,200.0 340.0,217.5 360.0,225.5 375.0,228.0 390.0,221.0 410.0,210.0 425.0,204.0 440.0,192.5 452.5,177.5 461.0,160.0 466.0,150.0" fill="none" stroke="#2f93c4" stroke-width="1" stroke-linejoin="round" shape-rendering="auto"/>
<polyline points="24.0,212.5 40.0,196.0 65.0,190.0 85.0,187.5 110.0,191.0 140.0,186.0 170.0,177.5 190.0,174.0 220.0,168.0 250.0,166.0 288.0,163.0 297.5,165.0 322.5,177.5 350.0,190.0 370.0,201.0 395.0,206.0 415.0,207.5 440.0,206.0 455.0,204.0 466.0,201.0" fill="none" stroke="#9a9a9a" stroke-width="1" stroke-linejoin="round" shape-rendering="auto"/>
<polyline points="24.0,220.0 100.0,212.0 180.0,204.0 240.0,198.0 288.0,196.0 350.0,201.0 380.0,204.0 430.0,201.0 466.0,196.0" fill="none" stroke="#48dede" stroke-width="1.3" stroke-linejoin="round" shape-rendering="auto"/>
<polyline points="24.0,231.0 35.0,227.5 100.0,218.0 160.0,209.0 230.0,199.0 288.0,193.0 315.0,192.5 365.0,197.5 415.0,199.0 445.0,196.0 466.0,190.0" fill="none" stroke="#a4a4e4" stroke-width="1" stroke-linejoin="round" shape-rendering="auto"/>
<polyline points="24.0,203.0 150.0,200.0 288.0,194.0 330.0,196.0 400.0,200.0 440.0,199.0 466.0,194.0" fill="none" stroke="#7fd0d0" stroke-width="1" stroke-linejoin="round" shape-rendering="auto"/>
<polyline points="18.0,251.0 465.0,172.0" fill="none" stroke="#e02020" stroke-width="1.1" stroke-linejoin="round" shape-rendering="auto"/>
<polyline points="254.0,304.0 440.0,276.0 463.0,272.0" fill="none" stroke="#e02020" stroke-width="1.1" stroke-linejoin="round" shape-rendering="auto"/>
<polyline points="18.0,301.0 24.0,303.5" fill="none" stroke="#e82020" stroke-width="1.2" stroke-linejoin="round" shape-rendering="auto"/>
<line x1="18.0" y1="276.0" x2="466.0" y2="276.0" stroke="#ffffff" stroke-width="1"/>
<text x="28.0" y="289.0" fill="#ffffff" font-size="12" text-anchor="start" textLength="39.0" lengthAdjust="spacingAndGlyphs" >5745,74</text>
<text x="426.0" y="272.5" fill="#ffffff" font-size="12" text-anchor="start" textLength="38.5" lengthAdjust="spacingAndGlyphs" >5745,74</text>
<line x1="24.5" y1="176.2" x2="24.5" y2="191.2" stroke="#ff2222" stroke-width="1"/>
<rect x="21.0" y="177.0" width="7.0" height="10.5" fill="#ff2222" />
<line x1="33.5" y1="176.2" x2="33.5" y2="190.5" stroke="#22c822" stroke-width="1"/>
<rect x="30.0" y="180.5" width="7.0" height="7.0" fill="#22c822" />
<line x1="42.5" y1="176.2" x2="42.5" y2="215.0" stroke="#ff2222" stroke-width="1"/>
<rect x="39.0" y="180.0" width="7.0" height="20.0" fill="#ff2222" />
<line x1="51.5" y1="180.5" x2="51.5" y2="209.5" stroke="#22c822" stroke-width="1"/>
<rect x="48.0" y="188.0" width="7.0" height="14.5" fill="#22c822" />
<line x1="60.5" y1="178.8" x2="60.5" y2="212.5" stroke="#ff2222" stroke-width="1"/>
<rect x="57.0" y="188.0" width="7.0" height="9.5" fill="#ff2222" />
<line x1="69.5" y1="187.0" x2="69.5" y2="200.5" stroke="#22c822" stroke-width="1"/>
<rect x="66.0" y="191.2" width="7.0" height="6.8" fill="#22c822" />
<line x1="78.5" y1="141.2" x2="78.5" y2="180.5" stroke="#ff2222" stroke-width="1"/>
<rect x="75.0" y="146.2" width="7.0" height="30.0" fill="#ff2222" />
<line x1="87.5" y1="172.0" x2="87.5" y2="186.2" stroke="#ff2222" stroke-width="1"/>
<rect x="84.0" y="175.5" width="7.0" height="2.0" fill="#ff2222" />
<line x1="96.5" y1="164.5" x2="96.5" y2="179.5" stroke="#22c822" stroke-width="1"/>
<rect x="93.0" y="167.5" width="7.0" height="10.5" fill="#22c822" />
<line x1="105.5" y1="166.2" x2="105.5" y2="178.0" stroke="#ff2222" stroke-width="1"/>
<rect x="102.0" y="168.0" width="7.0" height="9.5" fill="#ff2222" />
<line x1="114.5" y1="168.0" x2="114.5" y2="178.8" stroke="#22c822" stroke-width="1"/>
<rect x="111.0" y="174.5" width="7.0" height="3.0" fill="#22c822" />
<line x1="123.5" y1="172.5" x2="123.5" y2="192.5" stroke="#ff2222" stroke-width="1"/>
<rect x="120.0" y="174.5" width="7.0" height="10.0" fill="#ff2222" />
<line x1="132.5" y1="173.0" x2="132.5" y2="197.0" stroke="#22c822" stroke-width="1"/>
<rect x="129.0" y="174.5" width="7.0" height="9.8" fill="#22c822" />
<line x1="141.5" y1="173.0" x2="141.5" y2="190.0" stroke="#ff2222" stroke-width="1"/>
<rect x="138.0" y="174.5" width="7.0" height="8.5" fill="#ff2222" />
<line x1="150.5" y1="167.5" x2="150.5" y2="185.0" stroke="#22c822" stroke-width="1"/>
<rect x="147.0" y="168.8" width="7.0" height="15.0" fill="#22c822" />
<line x1="159.5" y1="137.0" x2="159.5" y2="156.2" stroke="#22c822" stroke-width="1"/>
<rect x="156.0" y="138.0" width="7.0" height="12.5" fill="#22c822" />
<line x1="168.5" y1="132.0" x2="168.5" y2="140.5" stroke="#ff2222" stroke-width="1"/>
<rect x="165.0" y="137.5" width="7.0" height="2.5" fill="#ff2222" />
<line x1="177.5" y1="138.8" x2="177.5" y2="153.8" stroke="#ff2222" stroke-width="1"/>
<rect x="174.0" y="139.5" width="7.0" height="3.5" fill="#ff2222" />
<line x1="186.5" y1="140.5" x2="186.5" y2="152.0" stroke="#ff2222" stroke-width="1"/>
<rect x="183.0" y="143.8" width="7.0" height="7.5" fill="#ff2222" />
<line x1="195.5" y1="152.0" x2="195.5" y2="169.5" stroke="#ff2222" stroke-width="1"/>
<rect x="192.0" y="152.5" width="7.0" height="10.0" fill="#ff2222" />
<line x1="204.5" y1="152.5" x2="204.5" y2="165.0" stroke="#22c822" stroke-width="1"/>
<rect x="201.0" y="154.5" width="7.0" height="9.2" fill="#22c822" />
<line x1="213.5" y1="148.0" x2="213.5" y2="163.8" stroke="#ff2222" stroke-width="1"/>
<rect x="210.0" y="155.0" width="7.0" height="3.0" fill="#ff2222" />
<line x1="222.5" y1="148.0" x2="222.5" y2="162.5" stroke="#ff2222" stroke-width="1"/>
<rect x="219.0" y="159.5" width="7.0" height="2.5" fill="#ff2222" />
<line x1="231.5" y1="151.2" x2="231.5" y2="165.0" stroke="#22c822" stroke-width="1"/>
<rect x="228.0" y="160.0" width="7.0" height="2.0" fill="#22c822" />
<line x1="240.5" y1="167.5" x2="240.5" y2="211.2" stroke="#ff2222" stroke-width="1"/>
<rect x="237.0" y="169.5" width="7.0" height="20.0" fill="#ff2222" />
<line x1="249.5" y1="173.0" x2="249.5" y2="191.2" stroke="#22c822" stroke-width="1"/>
<rect x="246.0" y="180.0" width="7.0" height="8.0" fill="#22c822" />
<line x1="258.5" y1="151.2" x2="258.5" y2="181.2" stroke="#22c822" stroke-width="1"/>
<rect x="255.0" y="153.8" width="7.0" height="25.8" fill="#22c822" />
<line x1="267.5" y1="151.2" x2="267.5" y2="164.5" stroke="#ff2222" stroke-width="1"/>
<rect x="264.0" y="153.0" width="7.0" height="10.8" fill="#ff2222" />
<line x1="276.5" y1="152.5" x2="276.5" y2="163.8" stroke="#22c822" stroke-width="1"/>
<rect x="273.0" y="156.2" width="7.0" height="6.8" fill="#22c822" />
<line x1="285.5" y1="156.2" x2="285.5" y2="165.0" stroke="#ff2222" stroke-width="1"/>
<rect x="282.0" y="157.0" width="7.0" height="3.0" fill="#ff2222" />
<line x1="294.5" y1="157.0" x2="294.5" y2="210.0" stroke="#ff2222" stroke-width="1"/>
<rect x="291.0" y="158.5" width="7.0" height="39.0" fill="#ff2222" />
<line x1="303.5" y1="197.5" x2="303.5" y2="252.5" stroke="#ff2222" stroke-width="1"/>
<rect x="300.0" y="202.5" width="7.0" height="38.5" fill="#ff2222" />
<line x1="312.5" y1="232.5" x2="312.5" y2="254.5" stroke="#ff2222" stroke-width="1"/>
<rect x="309.0" y="240.5" width="7.0" height="14.0" fill="#ff2222" />
<line x1="321.5" y1="224.5" x2="321.5" y2="246.0" stroke="#22c822" stroke-width="1"/>
<rect x="318.0" y="227.0" width="7.0" height="2.0" fill="#22c822" />
<line x1="330.5" y1="225.5" x2="330.5" y2="249.5" stroke="#ff2222" stroke-width="1"/>
<rect x="327.0" y="227.0" width="7.0" height="4.0" fill="#ff2222" />
<line x1="339.5" y1="230.5" x2="339.5" y2="252.0" stroke="#ff2222" stroke-width="1"/>
<rect x="336.0" y="232.5" width="7.0" height="5.0" fill="#ff2222" />
<line x1="348.5" y1="232.5" x2="348.5" y2="245.5" stroke="#ff2222" stroke-width="1"/>
<rect x="345.0" y="239.5" width="7.0" height="5.5" fill="#ff2222" />
<line x1="357.5" y1="236.0" x2="357.5" y2="249.0" stroke="#22c822" stroke-width="1"/>
<rect x="354.0" y="237.0" width="7.0" height="8.0" fill="#22c822" />
<line x1="366.5" y1="235.5" x2="366.5" y2="242.5" stroke="#ff2222" stroke-width="1"/>
<rect x="363.0" y="237.0" width="7.0" height="2.0" fill="#ff2222" />
<line x1="375.5" y1="230.0" x2="375.5" y2="242.5" stroke="#22c822" stroke-width="1"/>
<rect x="372.0" y="234.0" width="7.0" height="2.0" fill="#22c822" />
<line x1="384.5" y1="212.5" x2="384.5" y2="242.5" stroke="#22c822" stroke-width="1"/>
<rect x="381.0" y="217.0" width="7.0" height="17.0" fill="#22c822" />
<line x1="393.5" y1="192.5" x2="393.5" y2="230.5" stroke="#22c822" stroke-width="1"/>
<rect x="390.0" y="194.0" width="7.0" height="23.5" fill="#22c822" />
<line x1="402.5" y1="168.5" x2="402.5" y2="217.5" stroke="#ff2222" stroke-width="1"/>
<rect x="399.0" y="179.0" width="7.0" height="15.0" fill="#ff2222" />
<line x1="411.5" y1="181.5" x2="411.5" y2="202.5" stroke="#ff2222" stroke-width="1"/>
<rect x="408.0" y="194.0" width="7.0" height="7.5" fill="#ff2222" />
<line x1="420.5" y1="174.0" x2="420.5" y2="202.5" stroke="#22c822" stroke-width="1"/>
<rect x="417.0" y="179.0" width="7.0" height="22.0" fill="#22c822" />
<line x1="429.5" y1="172.0" x2="429.5" y2="190.5" stroke="#ff2222" stroke-width="1"/>
<rect x="426.0" y="178.0" width="7.0" height="4.0" fill="#ff2222" />
<line x1="438.5" y1="159.5" x2="438.5" y2="182.5" stroke="#22c822" stroke-width="1"/>
<rect x="435.0" y="160.5" width="7.0" height="21.5" fill="#22c822" />
<line x1="447.5" y1="152.5" x2="447.5" y2="161.0" stroke="#22c822" stroke-width="1"/>
<rect x="444.0" y="153.0" width="7.0" height="7.5" fill="#22c822" />
<line x1="456.5" y1="100.0" x2="456.5" y2="152.0" stroke="#22c822" stroke-width="1"/>
<rect x="453.0" y="106.0" width="7.0" height="45.0" fill="#22c822" />
<line x1="465.5" y1="80.5" x2="465.5" y2="107.5" stroke="#22c822" stroke-width="1"/>
<rect x="462.0" y="80.5" width="7.0" height="25.5" fill="#22c822" />
<polyline points="24.0,345.5 50.0,346.0 60.0,342.5 75.0,332.5 97.5,327.0 117.5,332.5 140.0,338.0 150.0,338.0 162.5,331.0 177.5,328.0 187.5,328.0 207.5,335.0 225.0,337.5 240.0,343.0 250.0,345.0 270.0,341.0 288.0,338.0 310.5,345.5 338.0,347.0 380.5,346.0 393.0,342.5 408.0,332.5 428.0,327.5 450.5,325.5 465.5,325.0" fill="none" stroke="#4ae6e6" stroke-width="1" stroke-linejoin="round" shape-rendering="auto"/>
<polyline points="24.0,377.0 40.0,392.0 60.0,399.0 70.0,394.0 100.0,392.5 124.0,402.5 142.5,395.0 150.0,386.0 170.0,372.5 185.0,380.0 212.5,404.0 240.0,402.0 260.0,387.5 275.0,376.0 288.0,380.0 293.0,385.0 313.0,416.0 338.0,407.5 368.0,395.0 393.0,375.0 418.0,385.0 428.0,383.0 438.0,376.0 465.5,370.5" fill="none" stroke="#ffa43c" stroke-width="1" stroke-linejoin="round" shape-rendering="auto"/>
<polyline points="24.0,377.0 32.5,380.0 60.0,396.0 85.0,392.5 102.5,392.5 130.0,400.0 140.0,399.0 160.0,386.0 175.0,375.5 186.0,375.5 205.0,390.0 220.0,401.0 240.0,402.5 260.0,394.0 288.0,380.5 298.0,382.5 320.5,411.0 330.5,414.5 363.0,402.5 398.0,379.0 413.0,379.5 430.5,383.0 450.5,375.0 465.5,372.0" fill="none" stroke="#4ae6e6" stroke-width="1" stroke-linejoin="round" shape-rendering="auto"/>
<polyline points="24.0,448.7 32.5,448.0 42.5,450.5 67.5,445.5 97.5,444.5 122.5,449.5 132.5,447.5 141.0,449.5 160.0,441.0 175.0,443.0 190.0,447.0 225.0,447.0 240.0,451.0 259.0,444.5 270.0,446.0 288.0,448.5 298.0,452.5 313.0,453.0 320.0,451.0 363.0,451.7 393.0,447.5 413.0,446.0 423.0,443.0 448.0,441.0 465.5,441.0" fill="none" stroke="#4ae6e6" stroke-width="1" stroke-linejoin="round" shape-rendering="auto"/>
<rect x="222.0" y="488.3" width="9.0" height="1.0" fill="#861414" />
<rect x="231.0" y="488.3" width="9.0" height="1.0" fill="#861414" />
<rect x="240.0" y="488.3" width="9.0" height="1.5" fill="#861414" />
<rect x="249.0" y="488.3" width="9.0" height="1.5" fill="#861414" />
<rect x="258.0" y="488.3" width="9.0" height="2.0" fill="#861414" />
<rect x="267.0" y="488.3" width="9.0" height="2.5" fill="#861414" />
<rect x="276.0" y="488.3" width="9.0" height="2.0" fill="#861414" />
<rect x="285.0" y="488.3" width="9.0" height="2.0" fill="#861414" />
<rect x="294.0" y="488.3" width="9.0" height="3.0" fill="#861414" />
<rect x="303.0" y="488.3" width="9.0" height="4.0" fill="#861414" />
<rect x="312.0" y="488.3" width="9.0" height="4.5" fill="#861414" />
<rect x="321.0" y="488.3" width="9.0" height="4.5" fill="#861414" />
<rect x="330.0" y="488.3" width="9.0" height="4.5" fill="#861414" />
<rect x="339.0" y="488.3" width="9.0" height="4.0" fill="#861414" />
<rect x="348.0" y="488.3" width="9.0" height="3.5" fill="#861414" />
<rect x="357.0" y="488.3" width="9.0" height="3.0" fill="#861414" />
<rect x="366.0" y="488.3" width="9.0" height="2.5" fill="#861414" />
<rect x="375.0" y="488.3" width="9.0" height="2.0" fill="#861414" />
<rect x="388.5" y="487.0" width="9.0" height="1.0" fill="#1c7c1c" />
<rect x="397.5" y="486.5" width="9.0" height="1.5" fill="#1c7c1c" />
<rect x="406.5" y="486.0" width="9.0" height="2.0" fill="#1c7c1c" />
<rect x="415.5" y="485.0" width="9.0" height="3.0" fill="#1c7c1c" />
<rect x="424.5" y="484.0" width="9.0" height="4.0" fill="#1c7c1c" />
<rect x="433.5" y="482.5" width="9.0" height="5.5" fill="#1c7c1c" />
<rect x="442.5" y="481.0" width="9.0" height="7.0" fill="#1c7c1c" />
<rect x="451.5" y="479.0" width="9.0" height="9.0" fill="#1c7c1c" />
<rect x="460.5" y="477.0" width="9.0" height="11.0" fill="#1c7c1c" />
<rect x="155.0" y="487.0" width="35.0" height="1.2" fill="#1e9a1e" />
<polyline points="24.0,475.0 100.0,477.0 150.0,478.7 165.0,477.0 200.0,478.0 245.0,478.0 262.0,480.0 290.0,482.5 300.0,483.0 318.0,487.0 330.0,490.0 345.0,492.5 362.0,494.5 372.0,495.5 395.0,495.0 420.0,492.0 440.0,490.0 466.0,486.5" fill="none" stroke="#ffa43c" stroke-width="1" stroke-linejoin="round" shape-rendering="auto"/>
<polyline points="24.0,475.0 50.0,477.0 150.0,480.0 160.0,477.5 190.0,477.5 200.0,478.0 225.0,479.0 240.0,481.0 262.0,483.0 290.0,483.5 298.0,486.0 305.0,490.0 315.0,493.5 330.0,496.0 345.0,497.5 358.0,498.0 378.0,497.5 395.0,494.5 410.0,492.0 440.0,488.5 455.0,483.0 466.0,477.0" fill="none" stroke="#4ae6e6" stroke-width="1" stroke-linejoin="round" shape-rendering="auto"/>
<polyline points="24.0,535.0 32.5,535.0 42.5,538.0 62.5,540.0 70.0,538.0 79.5,531.0 87.5,536.0 100.0,533.0 115.0,531.0 122.5,536.0 132.5,534.5 140.0,536.0 150.0,532.5 159.0,521.0 167.5,518.7 177.5,526.0 197.5,533.7 212.5,532.5 230.0,535.0 241.0,547.0 249.0,545.0 257.5,537.0 275.0,536.0 288.0,539.0 303.0,558.0 312.0,558.0 324.0,550.8 363.0,545.4 402.0,536.4 431.7,532.8 455.7,523.8 467.6,521.4" fill="none" stroke="#4ae6e6" stroke-width="1" stroke-linejoin="round" shape-rendering="auto"/>
<polyline points="24.0,580.5 32.5,580.0 57.5,585.0 70.0,595.0 79.0,593.0 104.0,603.7 122.5,598.7 132.5,593.0 141.0,596.0 150.0,592.0 160.0,584.5 167.5,582.5 186.0,596.0 195.0,596.0 205.0,593.0 212.5,595.0 222.5,592.0 240.0,597.0 250.0,597.0 257.5,595.0 275.0,597.0 288.0,596.0 312.0,611.0 321.0,606.0 348.0,615.0 378.0,608.0 399.0,603.0 411.0,605.0 423.0,597.0 441.0,600.0 455.7,589.7 467.6,585.0" fill="none" stroke="#4ae6e6" stroke-width="1" stroke-linejoin="round" shape-rendering="auto"/>
<text x="16.0" y="319.5" fill="#c4c43c" font-size="12" text-anchor="start" textLength="125.0" lengthAdjust="spacingAndGlyphs" >dss_bressert(13, 4, 80, 20)</text>
<text x="16.0" y="363.5" fill="#c4c43c" font-size="12" text-anchor="start" textLength="105.0" lengthAdjust="spacingAndGlyphs" >stoc_sl(5, 3, 3, 80, 20)</text>
<text x="16.0" y="435.5" fill="#c4c43c" font-size="12" text-anchor="start" textLength="90.0" lengthAdjust="spacingAndGlyphs" >perc_r(14, -20, -80)</text>
<text x="16.0" y="470.0" fill="#c4c43c" font-size="12" text-anchor="start" textLength="74.0" lengthAdjust="spacingAndGlyphs" >macd(12, 26, 9)</text>
<text x="16.0" y="513.5" fill="#c4c43c" font-size="12" text-anchor="start" textLength="83.0" lengthAdjust="spacingAndGlyphs" >cci(20, 100, -100)</text>
<text x="16.0" y="575.0" fill="#c4c43c" font-size="12" text-anchor="start" textLength="40.0" lengthAdjust="spacingAndGlyphs" >mom(20)</text>
<line x1="473.5" y1="79.0" x2="473.5" y2="307.0" stroke="#f0e0a0" stroke-width="1"/>
<line x1="471.5" y1="83.1" x2="473.5" y2="83.1" stroke="#f0e0a0" stroke-width="1"/>
<line x1="471.5" y1="87.1" x2="473.5" y2="87.1" stroke="#f0e0a0" stroke-width="1"/>
<line x1="469.5" y1="91.2" x2="473.5" y2="91.2" stroke="#f0e0a0" stroke-width="1"/>
<line x1="471.5" y1="95.2" x2="473.5" y2="95.2" stroke="#f0e0a0" stroke-width="1"/>
<line x1="471.5" y1="99.2" x2="473.5" y2="99.2" stroke="#f0e0a0" stroke-width="1"/>
<line x1="471.5" y1="103.3" x2="473.5" y2="103.3" stroke="#f0e0a0" stroke-width="1"/>
<line x1="471.5" y1="107.4" x2="473.5" y2="107.4" stroke="#f0e0a0" stroke-width="1"/>
<line x1="469.5" y1="111.4" x2="473.5" y2="111.4" stroke="#f0e0a0" stroke-width="1"/>
<line x1="471.5" y1="115.5" x2="473.5" y2="115.5" stroke="#f0e0a0" stroke-width="1"/>
<line x1="471.5" y1="119.5" x2="473.5" y2="119.5" stroke="#f0e0a0" stroke-width="1"/>
<line x1="471.5" y1="123.6" x2="473.5" y2="123.6" stroke="#f0e0a0" stroke-width="1"/>
<line x1="471.5" y1="127.6" x2="473.5" y2="127.6" stroke="#f0e0a0" stroke-width="1"/>
<line x1="469.5" y1="131.7" x2="473.5" y2="131.7" stroke="#f0e0a0" stroke-width="1"/>
<line x1="471.5" y1="135.7" x2="473.5" y2="135.7" stroke="#f0e0a0" stroke-width="1"/>
<line x1="471.5" y1="139.8" x2="473.5" y2="139.8" stroke="#f0e0a0" stroke-width="1"/>
<line x1="471.5" y1="143.8" x2="473.5" y2="143.8" stroke="#f0e0a0" stroke-width="1"/>
<line x1="471.5" y1="147.8" x2="473.5" y2="147.8" stroke="#f0e0a0" stroke-width="1"/>
<line x1="469.5" y1="151.9" x2="473.5" y2="151.9" stroke="#f0e0a0" stroke-width="1"/>
<line x1="471.5" y1="155.9" x2="473.5" y2="155.9" stroke="#f0e0a0" stroke-width="1"/>
<line x1="471.5" y1="160.0" x2="473.5" y2="160.0" stroke="#f0e0a0" stroke-width="1"/>
<line x1="471.5" y1="164.1" x2="473.5" y2="164.1" stroke="#f0e0a0" stroke-width="1"/>
<line x1="471.5" y1="168.1" x2="473.5" y2="168.1" stroke="#f0e0a0" stroke-width="1"/>
<line x1="469.5" y1="172.2" x2="473.5" y2="172.2" stroke="#f0e0a0" stroke-width="1"/>
<line x1="471.5" y1="176.2" x2="473.5" y2="176.2" stroke="#f0e0a0" stroke-width="1"/>
<line x1="471.5" y1="180.2" x2="473.5" y2="180.2" stroke="#f0e0a0" stroke-width="1"/>
<line x1="471.5" y1="184.3" x2="473.5" y2="184.3" stroke="#f0e0a0" stroke-width="1"/>
<line x1="471.5" y1="188.4" x2="473.5" y2="188.4" stroke="#f0e0a0" stroke-width="1"/>
<line x1="469.5" y1="192.4" x2="473.5" y2="192.4" stroke="#f0e0a0" stroke-width="1"/>
<line x1="471.5" y1="196.4" x2="473.5" y2="196.4" stroke="#f0e0a0" stroke-width="1"/>
<line x1="471.5" y1="200.5" x2="473.5" y2="200.5" stroke="#f0e0a0" stroke-width="1"/>
<line x1="471.5" y1="204.6" x2="473.5" y2="204.6" stroke="#f0e0a0" stroke-width="1"/>
<line x1="471.5" y1="208.6" x2="473.5" y2="208.6" stroke="#f0e0a0" stroke-width="1"/>
<line x1="469.5" y1="212.7" x2="473.5" y2="212.7" stroke="#f0e0a0" stroke-width="1"/>
<line x1="471.5" y1="216.7" x2="473.5" y2="216.7" stroke="#f0e0a0" stroke-width="1"/>
<line x1="471.5" y1="220.8" x2="473.5" y2="220.8" stroke="#f0e0a0" stroke-width="1"/>
<line x1="471.5" y1="224.8" x2="473.5" y2="224.8" stroke="#f0e0a0" stroke-width="1"/>
<line x1="471.5" y1="228.8" x2="473.5" y2="228.8" stroke="#f0e0a0" stroke-width="1"/>
<line x1="469.5" y1="232.9" x2="473.5" y2="232.9" stroke="#f0e0a0" stroke-width="1"/>
<line x1="471.5" y1="236.9" x2="473.5" y2="236.9" stroke="#f0e0a0" stroke-width="1"/>
<line x1="471.5" y1="241.0" x2="473.5" y2="241.0" stroke="#f0e0a0" stroke-width="1"/>
<line x1="471.5" y1="245.1" x2="473.5" y2="245.1" stroke="#f0e0a0" stroke-width="1"/>
<line x1="471.5" y1="249.1" x2="473.5" y2="249.1" stroke="#f0e0a0" stroke-width="1"/>
<line x1="469.5" y1="253.2" x2="473.5" y2="253.2" stroke="#f0e0a0" stroke-width="1"/>
<line x1="471.5" y1="257.2" x2="473.5" y2="257.2" stroke="#f0e0a0" stroke-width="1"/>
<line x1="471.5" y1="261.2" x2="473.5" y2="261.2" stroke="#f0e0a0" stroke-width="1"/>
<line x1="471.5" y1="265.3" x2="473.5" y2="265.3" stroke="#f0e0a0" stroke-width="1"/>
<line x1="471.5" y1="269.4" x2="473.5" y2="269.4" stroke="#f0e0a0" stroke-width="1"/>
<line x1="469.5" y1="273.4" x2="473.5" y2="273.4" stroke="#f0e0a0" stroke-width="1"/>
<line x1="471.5" y1="277.4" x2="473.5" y2="277.4" stroke="#f0e0a0" stroke-width="1"/>
<line x1="471.5" y1="281.5" x2="473.5" y2="281.5" stroke="#f0e0a0" stroke-width="1"/>
<line x1="471.5" y1="285.6" x2="473.5" y2="285.6" stroke="#f0e0a0" stroke-width="1"/>
<line x1="471.5" y1="289.6" x2="473.5" y2="289.6" stroke="#f0e0a0" stroke-width="1"/>
<line x1="469.5" y1="293.6" x2="473.5" y2="293.6" stroke="#f0e0a0" stroke-width="1"/>
<line x1="471.5" y1="297.7" x2="473.5" y2="297.7" stroke="#f0e0a0" stroke-width="1"/>
<line x1="471.5" y1="301.8" x2="473.5" y2="301.8" stroke="#f0e0a0" stroke-width="1"/>
<line x1="471.5" y1="305.8" x2="473.5" y2="305.8" stroke="#f0e0a0" stroke-width="1"/>
<line x1="474.0" y1="306.5" x2="528.0" y2="306.5" stroke="#2e3ea4" stroke-width="1"/>
<line x1="527.5" y1="79.0" x2="527.5" y2="307.0" stroke="#2e3ea4" stroke-width="1"/>
<line x1="474.0" y1="79.5" x2="528.0" y2="79.5" stroke="#e8dca0" stroke-width="1"/>
<line x1="473.5" y1="323.5" x2="473.5" y2="349.5" stroke="#f0e0a0" stroke-width="1"/>
<line x1="469.5" y1="325.5" x2="473.5" y2="325.5" stroke="#f0e0a0" stroke-width="1"/>
<line x1="471.5" y1="329.6" x2="473.5" y2="329.6" stroke="#f0e0a0" stroke-width="1"/>
<line x1="471.5" y1="333.6" x2="473.5" y2="333.6" stroke="#f0e0a0" stroke-width="1"/>
<line x1="471.5" y1="337.6" x2="473.5" y2="337.6" stroke="#f0e0a0" stroke-width="1"/>
<line x1="471.5" y1="341.7" x2="473.5" y2="341.7" stroke="#f0e0a0" stroke-width="1"/>
<line x1="469.5" y1="345.8" x2="473.5" y2="345.8" stroke="#f0e0a0" stroke-width="1"/>
<line x1="474.0" y1="349.0" x2="528.0" y2="349.0" stroke="#2e3ea4" stroke-width="1"/>
<line x1="527.5" y1="323.5" x2="527.5" y2="349.5" stroke="#2e3ea4" stroke-width="1"/>
<line x1="474.0" y1="324.0" x2="528.0" y2="324.0" stroke="#e8dca0" stroke-width="1"/>
<line x1="473.5" y1="368.0" x2="473.5" y2="422.0" stroke="#f0e0a0" stroke-width="1"/>
<line x1="469.5" y1="369.6" x2="473.5" y2="369.6" stroke="#f0e0a0" stroke-width="1"/>
<line x1="471.5" y1="373.7" x2="473.5" y2="373.7" stroke="#f0e0a0" stroke-width="1"/>
<line x1="471.5" y1="377.7" x2="473.5" y2="377.7" stroke="#f0e0a0" stroke-width="1"/>
<line x1="471.5" y1="381.8" x2="473.5" y2="381.8" stroke="#f0e0a0" stroke-width="1"/>
<line x1="471.5" y1="385.8" x2="473.5" y2="385.8" stroke="#f0e0a0" stroke-width="1"/>
<line x1="469.5" y1="389.9" x2="473.5" y2="389.9" stroke="#f0e0a0" stroke-width="1"/>
<line x1="471.5" y1="393.9" x2="473.5" y2="393.9" stroke="#f0e0a0" stroke-width="1"/>
<line x1="471.5" y1="398.0" x2="473.5" y2="398.0" stroke="#f0e0a0" stroke-width="1"/>
<line x1="471.5" y1="402.0" x2="473.5" y2="402.0" stroke="#f0e0a0" stroke-width="1"/>
<line x1="471.5" y1="406.1" x2="473.5" y2="406.1" stroke="#f0e0a0" stroke-width="1"/>
<line x1="469.5" y1="410.1" x2="473.5" y2="410.1" stroke="#f0e0a0" stroke-width="1"/>
<line x1="471.5" y1="414.2" x2="473.5" y2="414.2" stroke="#f0e0a0" stroke-width="1"/>
<line x1="471.5" y1="418.2" x2="473.5" y2="418.2" stroke="#f0e0a0" stroke-width="1"/>
<line x1="474.0" y1="421.5" x2="528.0" y2="421.5" stroke="#2e3ea4" stroke-width="1"/>
<line x1="527.5" y1="368.0" x2="527.5" y2="422.0" stroke="#2e3ea4" stroke-width="1"/>
<line x1="474.0" y1="368.5" x2="528.0" y2="368.5" stroke="#e8dca0" stroke-width="1"/>
<line x1="473.5" y1="439.5" x2="473.5" y2="456.5" stroke="#f0e0a0" stroke-width="1"/>
<line x1="469.5" y1="440.6" x2="473.5" y2="440.6" stroke="#f0e0a0" stroke-width="1"/>
<line x1="471.5" y1="444.7" x2="473.5" y2="444.7" stroke="#f0e0a0" stroke-width="1"/>
<line x1="471.5" y1="448.7" x2="473.5" y2="448.7" stroke="#f0e0a0" stroke-width="1"/>
<line x1="471.5" y1="452.8" x2="473.5" y2="452.8" stroke="#f0e0a0" stroke-width="1"/>
<line x1="474.0" y1="456.0" x2="528.0" y2="456.0" stroke="#2e3ea4" stroke-width="1"/>
<line x1="527.5" y1="439.5" x2="527.5" y2="456.5" stroke="#2e3ea4" stroke-width="1"/>
<line x1="474.0" y1="440.0" x2="528.0" y2="440.0" stroke="#e8dca0" stroke-width="1"/>
<line x1="473.5" y1="472.0" x2="473.5" y2="498.0" stroke="#f0e0a0" stroke-width="1"/>
<line x1="471.5" y1="474.4" x2="473.5" y2="474.4" stroke="#f0e0a0" stroke-width="1"/>
<line x1="469.5" y1="478.5" x2="473.5" y2="478.5" stroke="#f0e0a0" stroke-width="1"/>
<line x1="471.5" y1="482.6" x2="473.5" y2="482.6" stroke="#f0e0a0" stroke-width="1"/>
<line x1="471.5" y1="486.6" x2="473.5" y2="486.6" stroke="#f0e0a0" stroke-width="1"/>
<line x1="471.5" y1="490.6" x2="473.5" y2="490.6" stroke="#f0e0a0" stroke-width="1"/>
<line x1="471.5" y1="494.7" x2="473.5" y2="494.7" stroke="#f0e0a0" stroke-width="1"/>
<line x1="474.0" y1="497.5" x2="528.0" y2="497.5" stroke="#2e3ea4" stroke-width="1"/>
<line x1="527.5" y1="472.0" x2="527.5" y2="498.0" stroke="#2e3ea4" stroke-width="1"/>
<line x1="474.0" y1="472.5" x2="528.0" y2="472.5" stroke="#e8dca0" stroke-width="1"/>
<line x1="473.5" y1="516.0" x2="473.5" y2="562.5" stroke="#f0e0a0" stroke-width="1"/>
<line x1="471.5" y1="519.0" x2="473.5" y2="519.0" stroke="#f0e0a0" stroke-width="1"/>
<line x1="469.5" y1="523.0" x2="473.5" y2="523.0" stroke="#f0e0a0" stroke-width="1"/>
<line x1="471.5" y1="527.0" x2="473.5" y2="527.0" stroke="#f0e0a0" stroke-width="1"/>
<line x1="471.5" y1="531.1" x2="473.5" y2="531.1" stroke="#f0e0a0" stroke-width="1"/>
<line x1="471.5" y1="535.1" x2="473.5" y2="535.1" stroke="#f0e0a0" stroke-width="1"/>
<line x1="471.5" y1="539.2" x2="473.5" y2="539.2" stroke="#f0e0a0" stroke-width="1"/>
<line x1="469.5" y1="543.2" x2="473.5" y2="543.2" stroke="#f0e0a0" stroke-width="1"/>
<line x1="471.5" y1="547.3" x2="473.5" y2="547.3" stroke="#f0e0a0" stroke-width="1"/>
<line x1="471.5" y1="551.4" x2="473.5" y2="551.4" stroke="#f0e0a0" stroke-width="1"/>
<line x1="471.5" y1="555.4" x2="473.5" y2="555.4" stroke="#f0e0a0" stroke-width="1"/>
<line x1="471.5" y1="559.5" x2="473.5" y2="559.5" stroke="#f0e0a0" stroke-width="1"/>
<line x1="474.0" y1="562.0" x2="528.0" y2="562.0" stroke="#2e3ea4" stroke-width="1"/>
<line x1="527.5" y1="516.0" x2="527.5" y2="562.5" stroke="#2e3ea4" stroke-width="1"/>
<line x1="474.0" y1="516.5" x2="528.0" y2="516.5" stroke="#e8dca0" stroke-width="1"/>
<line x1="473.5" y1="577.5" x2="473.5" y2="619.0" stroke="#f0e0a0" stroke-width="1"/>
<line x1="471.5" y1="582.0" x2="473.5" y2="582.0" stroke="#f0e0a0" stroke-width="1"/>
<line x1="469.5" y1="586.0" x2="473.5" y2="586.0" stroke="#f0e0a0" stroke-width="1"/>
<line x1="471.5" y1="590.0" x2="473.5" y2="590.0" stroke="#f0e0a0" stroke-width="1"/>
<line x1="471.5" y1="594.1" x2="473.5" y2="594.1" stroke="#f0e0a0" stroke-width="1"/>
<line x1="471.5" y1="598.1" x2="473.5" y2="598.1" stroke="#f0e0a0" stroke-width="1"/>
<line x1="471.5" y1="602.2" x2="473.5" y2="602.2" stroke="#f0e0a0" stroke-width="1"/>
<line x1="469.5" y1="606.2" x2="473.5" y2="606.2" stroke="#f0e0a0" stroke-width="1"/>
<line x1="471.5" y1="610.3" x2="473.5" y2="610.3" stroke="#f0e0a0" stroke-width="1"/>
<line x1="471.5" y1="614.4" x2="473.5" y2="614.4" stroke="#f0e0a0" stroke-width="1"/>
<line x1="471.5" y1="618.4" x2="473.5" y2="618.4" stroke="#f0e0a0" stroke-width="1"/>
<line x1="474.0" y1="618.5" x2="528.0" y2="618.5" stroke="#2e3ea4" stroke-width="1"/>
<line x1="527.5" y1="577.5" x2="527.5" y2="619.0" stroke="#2e3ea4" stroke-width="1"/>
<line x1="474.0" y1="578.0" x2="528.0" y2="578.0" stroke="#e8dca0" stroke-width="1"/>
<text x="525.0" y="115.8" fill="#f4f4b4" font-size="12" text-anchor="end" textLength="38.0" lengthAdjust="spacingAndGlyphs" >5950,00</text>
<text x="525.0" y="156.2" fill="#f4f4b4" font-size="12" text-anchor="end" textLength="38.0" lengthAdjust="spacingAndGlyphs" >5900,00</text>
<text x="525.0" y="196.6" fill="#f4f4b4" font-size="12" text-anchor="end" textLength="38.0" lengthAdjust="spacingAndGlyphs" >5850,00</text>
<text x="525.0" y="237.0" fill="#f4f4b4" font-size="12" text-anchor="end" textLength="38.0" lengthAdjust="spacingAndGlyphs" >5800,00</text>
<text x="525.0" y="277.3" fill="#f4f4b4" font-size="12" text-anchor="end" textLength="38.0" lengthAdjust="spacingAndGlyphs" >5750,00</text>
<rect x="474.0" y="80.0" width="41.0" height="11.5" fill="#ffff20" />
<text x="475.0" y="90.0" fill="#000" font-size="12" text-anchor="start" textLength="39.0" lengthAdjust="spacingAndGlyphs" >5987,91</text>
<rect x="474.0" y="146.0" width="41.0" height="12.0" fill="#2f8fc0" />
<text x="475.0" y="156.5" fill="#fff" font-size="12" text-anchor="start" textLength="39.0" lengthAdjust="spacingAndGlyphs" >5900,51</text>
<rect x="474.0" y="184.0" width="41.0" height="11.5" fill="#9c9cd8" />
<text x="475.0" y="194.0" fill="#202040" font-size="12" text-anchor="start" textLength="39.0" lengthAdjust="spacingAndGlyphs" >5853,12</text>
<rect x="474.0" y="195.5" width="41.0" height="11.5" fill="#808080" />
<text x="475.0" y="205.5" fill="#181818" font-size="12" text-anchor="start" textLength="39.0" lengthAdjust="spacingAndGlyphs" >5839,00</text>
<text x="525.0" y="335.0" fill="#f4f4b4" font-size="12" text-anchor="end" textLength="47.0" lengthAdjust="spacingAndGlyphs" >100,0000</text>
<text x="525.0" y="348.0" fill="#f4f4b4" font-size="12" text-anchor="end" >0</text>
<rect x="474.0" y="324.5" width="41.0" height="11.0" fill="#20f0f0" />
<text x="475.0" y="334.0" fill="#003838" font-size="12" text-anchor="start" textLength="39.0" lengthAdjust="spacingAndGlyphs" >98,7629</text>
<text x="525.0" y="380.5" fill="#f4f4b4" font-size="12" text-anchor="end" textLength="47.0" lengthAdjust="spacingAndGlyphs" >100,0000</text>
<text x="525.0" y="420.5" fill="#f4f4b4" font-size="12" text-anchor="end" >0</text>
<rect x="474.0" y="369.5" width="41.0" height="11.0" fill="#20f0f0" />
<text x="475.0" y="379.0" fill="#003838" font-size="12" text-anchor="start" textLength="39.0" lengthAdjust="spacingAndGlyphs" >94,9879</text>
<text x="525.0" y="451.0" fill="#f4f4b4" font-size="12" text-anchor="end" textLength="38.0" lengthAdjust="spacingAndGlyphs" >-0,0001</text>
<rect x="474.0" y="440.5" width="38.5" height="11.0" fill="#20f0f0" />
<text x="475.0" y="450.0" fill="#003838" font-size="12" text-anchor="start" textLength="36.5" lengthAdjust="spacingAndGlyphs" >-0,2732</text>
<text x="525.0" y="485.0" fill="#f4f4b4" font-size="12" text-anchor="end" textLength="41.0" lengthAdjust="spacingAndGlyphs" >20,0000</text>
<text x="525.0" y="499.5" fill="#f4f4b4" font-size="12" text-anchor="end" textLength="45.0" lengthAdjust="spacingAndGlyphs" >-20,0000</text>
<rect x="474.0" y="474.0" width="41.0" height="8.5" fill="#20f0f0" />
<text x="475.0" y="481.0" fill="#003838" font-size="12" text-anchor="start" textLength="39.0" lengthAdjust="spacingAndGlyphs" >22,4551</text>
<rect x="474.0" y="482.0" width="36.0" height="11.0" fill="#ffa020" />
<text x="475.0" y="491.5" fill="#301800" font-size="12" text-anchor="start" textLength="34.0" lengthAdjust="spacingAndGlyphs" >3,7912</text>
<text x="525.0" y="529.0" fill="#f4f4b4" font-size="12" text-anchor="end" textLength="47.0" lengthAdjust="spacingAndGlyphs" >200,0000</text>
<text x="525.0" y="543.0" fill="#f4f4b4" font-size="12" text-anchor="end" >0</text>
<text x="525.0" y="559.0" fill="#f4f4b4" font-size="12" text-anchor="end" textLength="51.0" lengthAdjust="spacingAndGlyphs" >-200,0000</text>
<rect x="474.0" y="518.5" width="47.0" height="11.0" fill="#20f0f0" />
<text x="475.0" y="528.0" fill="#003838" font-size="12" text-anchor="start" textLength="45.0" lengthAdjust="spacingAndGlyphs" >218,2205</text>
<text x="525.0" y="590.5" fill="#f4f4b4" font-size="12" text-anchor="end" textLength="35.0" lengthAdjust="spacingAndGlyphs" >100,00</text>
<text x="525.0" y="616.5" fill="#f4f4b4" font-size="12" text-anchor="end" textLength="38.0" lengthAdjust="spacingAndGlyphs" >-100,00</text>
<rect x="474.0" y="580.0" width="30.0" height="11.0" fill="#20f0f0" />
<text x="475.0" y="589.5" fill="#003838" font-size="12" text-anchor="start" textLength="28.0" lengthAdjust="spacingAndGlyphs" >97,29</text>
<line x1="9.0" y1="619.5" x2="473.0" y2="619.5" stroke="#f4f0d0" stroke-width="1"/>
<line x1="79.5" y1="619.0" x2="79.5" y2="622.0" stroke="#f4f0d0" stroke-width="1"/>
<line x1="106.5" y1="619.0" x2="106.5" y2="622.0" stroke="#f4f0d0" stroke-width="1"/>
<line x1="160.5" y1="619.0" x2="160.5" y2="622.0" stroke="#f4f0d0" stroke-width="1"/>
<line x1="187.5" y1="619.0" x2="187.5" y2="622.0" stroke="#f4f0d0" stroke-width="1"/>
<line x1="241.5" y1="619.0" x2="241.5" y2="622.0" stroke="#f4f0d0" stroke-width="1"/>
<line x1="268.5" y1="619.0" x2="268.5" y2="622.0" stroke="#f4f0d0" stroke-width="1"/>
<line x1="322.5" y1="619.0" x2="322.5" y2="622.0" stroke="#f4f0d0" stroke-width="1"/>
<line x1="349.5" y1="619.0" x2="349.5" y2="622.0" stroke="#f4f0d0" stroke-width="1"/>
<line x1="403.5" y1="619.0" x2="403.5" y2="622.0" stroke="#f4f0d0" stroke-width="1"/>
<line x1="457.5" y1="619.0" x2="457.5" y2="622.0" stroke="#f4f0d0" stroke-width="1"/>
<text x="10.0" y="633.8" fill="#f4f4b4" font-size="12" text-anchor="start" >Do</text>
<text x="75.0" y="633.8" fill="#f4f4b4" font-size="12" text-anchor="start" >Fr 12:00</text>
<text x="155.0" y="633.8" fill="#f4f4b4" font-size="12" text-anchor="start" >Di 12:00</text>
<text x="237.0" y="633.8" fill="#f4f4b4" font-size="12" text-anchor="start" >Mi 12:00</text>
<text x="316.0" y="633.8" fill="#f4f4b4" font-size="12" text-anchor="start" >Do 12:00</text>
<text x="400.0" y="633.8" fill="#f4f4b4" font-size="12" text-anchor="start" >Fr</text>
<text x="451.0" y="633.8" fill="#f4f4b4" font-size="12" text-anchor="start" >Mo</text>
<path d="M497 628 L503 622 L503 628 Z" fill="#1a3ab8" shape-rendering="auto"/>
<rect x="550.0" y="63.0" width="590.0" height="16.0" fill="#030357" />
<rect x="1084.0" y="79.0" width="56.0" height="549.0" fill="#030357" />
<rect x="550.0" y="400.5" width="590.0" height="17.5" fill="#030357" />
<rect x="550.0" y="450.0" width="590.0" height="18.0" fill="#030357" />
<rect x="550.0" y="500.5" width="590.0" height="17.5" fill="#030357" />
<rect x="550.0" y="556.5" width="590.0" height="15.8" fill="#030357" />
<rect x="550.0" y="620.0" width="534.0" height="8.0" fill="#030357" />
<rect x="1084.0" y="620.0" width="56.0" height="8.0" fill="#ffffff" />
<rect x="552.5" y="65.0" width="5.0" height="14.0" fill="#ff9a1a" />
<text x="558.8" y="76.0" fill="#28bc30" font-size="12" text-anchor="start" textLength="47.0" lengthAdjust="spacingAndGlyphs" >DAX P-IN.</text>
<text x="610.0" y="76.0" fill="#c8ffff" font-size="12" text-anchor="start" textLength="46.0" lengthAdjust="spacingAndGlyphs" >X-DAXTR</text>
<text x="659.5" y="76.0" fill="#c4c43c" font-size="12" text-anchor="start" textLength="172.5" lengthAdjust="spacingAndGlyphs" >boll(20, 2, -2) move(9, 0) movs(60, 0)</text>
<text x="1052.0" y="76.0" fill="#28bc30" font-size="12" text-anchor="start" textLength="29.0" lengthAdjust="spacingAndGlyphs" >5 mins</text>
<rect x="1124.0" y="65.0" width="15.0" height="6.0" fill="#e8e8e8" />
<rect x="1124.0" y="65.0" width="15.0" height="2.0" fill="#ffffff" />
<line x1="1124.0" y1="70.5" x2="1139.0" y2="70.5" stroke="#888" stroke-width="1"/>
<rect x="562.0" y="419.0" width="519.0" height="6.5" fill="#005a00" />
<rect x="562.0" y="442.0" width="519.0" height="6.5" fill="#5a0000" />
<rect x="562.0" y="469.0" width="519.0" height="6.8" fill="#005a00" />
<rect x="562.0" y="492.0" width="519.0" height="6.0" fill="#5a0000" />
<rect x="562.0" y="518.5" width="519.0" height="7.5" fill="#005a00" />
<rect x="565.0" y="546.0" width="186.0" height="6.5" fill="#5a0000" />
<rect x="884.0" y="546.0" width="197.0" height="6.5" fill="#5a0000" />
<polygon points="900.0,160.0 978.0,126.0 988.0,121.0 1003.0,105.6 1016.0,99.0 1036.0,94.0 1077.0,91.5 1077.0,264.4 1067.0,274.6 1046.5,299.0 1031.0,322.0 1021.0,337.0 1003.0,355.0 978.0,375.0 900.0,400.0" fill="#353535" shape-rendering="auto"/>
<polyline points="900.0,160.0 978.0,126.0 988.0,121.0 1003.0,105.6 1016.0,99.0 1036.0,94.0 1077.0,91.5" fill="none" stroke="#8c8c8c" stroke-width="1" stroke-linejoin="round" shape-rendering="auto"/>
<polyline points="1077.0,264.4 1067.0,274.6 1046.5,299.0 1031.0,322.0 1021.0,337.0 1003.0,355.0 978.0,375.0 900.0,400.0" fill="none" stroke="#8c8c8c" stroke-width="1" stroke-linejoin="round" shape-rendering="auto"/>
<line x1="616.0" y1="79.0" x2="616.0" y2="400.5" stroke="#6c6c6c" stroke-width="1" stroke-dasharray="1,1.5"/>
<line x1="714.4" y1="79.0" x2="714.4" y2="400.5" stroke="#6c6c6c" stroke-width="1" stroke-dasharray="1,1.5"/>
<line x1="758.4" y1="79.0" x2="758.4" y2="400.5" stroke="#6c6c6c" stroke-width="1" stroke-dasharray="1,1.5"/>
<line x1="791.4" y1="79.0" x2="791.4" y2="400.5" stroke="#6c6c6c" stroke-width="1" stroke-dasharray="1,1.5"/>
<line x1="891.0" y1="79.0" x2="891.0" y2="400.5" stroke="#6c6c6c" stroke-width="1" stroke-dasharray="1,1.5"/>
<line x1="957.0" y1="79.0" x2="957.0" y2="400.5" stroke="#6c6c6c" stroke-width="1" stroke-dasharray="1,1.5"/>
<line x1="1023.0" y1="79.0" x2="1023.0" y2="400.5" stroke="#6c6c6c" stroke-width="1" stroke-dasharray="1,1.5"/>
<line x1="616.0" y1="418.0" x2="616.0" y2="450.0" stroke="#6c6c6c" stroke-width="1" stroke-dasharray="1,1.5"/>
<line x1="714.4" y1="418.0" x2="714.4" y2="450.0" stroke="#6c6c6c" stroke-width="1" stroke-dasharray="1,1.5"/>
<line x1="758.4" y1="418.0" x2="758.4" y2="450.0" stroke="#6c6c6c" stroke-width="1" stroke-dasharray="1,1.5"/>
<line x1="791.4" y1="418.0" x2="791.4" y2="450.0" stroke="#6c6c6c" stroke-width="1" stroke-dasharray="1,1.5"/>
<line x1="891.0" y1="418.0" x2="891.0" y2="450.0" stroke="#6c6c6c" stroke-width="1" stroke-dasharray="1,1.5"/>
<line x1="957.0" y1="418.0" x2="957.0" y2="450.0" stroke="#6c6c6c" stroke-width="1" stroke-dasharray="1,1.5"/>
<line x1="1023.0" y1="418.0" x2="1023.0" y2="450.0" stroke="#6c6c6c" stroke-width="1" stroke-dasharray="1,1.5"/>
<line x1="616.0" y1="468.0" x2="616.0" y2="500.5" stroke="#6c6c6c" stroke-width="1" stroke-dasharray="1,1.5"/>
<line x1="714.4" y1="468.0" x2="714.4" y2="500.5" stroke="#6c6c6c" stroke-width="1" stroke-dasharray="1,1.5"/>
<line x1="758.4" y1="468.0" x2="758.4" y2="500.5" stroke="#6c6c6c" stroke-width="1" stroke-dasharray="1,1.5"/>
<line x1="791.4" y1="468.0" x2="791.4" y2="500.5" stroke="#6c6c6c" stroke-width="1" stroke-dasharray="1,1.5"/>
<line x1="891.0" y1="468.0" x2="891.0" y2="500.5" stroke="#6c6c6c" stroke-width="1" stroke-dasharray="1,1.5"/>
<line x1="957.0" y1="468.0" x2="957.0" y2="500.5" stroke="#6c6c6c" stroke-width="1" stroke-dasharray="1,1.5"/>
<line x1="1023.0" y1="468.0" x2="1023.0" y2="500.5" stroke="#6c6c6c" stroke-width="1" stroke-dasharray="1,1.5"/>
<line x1="616.0" y1="518.0" x2="616.0" y2="556.5" stroke="#6c6c6c" stroke-width="1" stroke-dasharray="1,1.5"/>
<line x1="714.4" y1="518.0" x2="714.4" y2="556.5" stroke="#6c6c6c" stroke-width="1" stroke-dasharray="1,1.5"/>
<line x1="758.4" y1="518.0" x2="758.4" y2="556.5" stroke="#6c6c6c" stroke-width="1" stroke-dasharray="1,1.5"/>
<line x1="791.4" y1="518.0" x2="791.4" y2="556.5" stroke="#6c6c6c" stroke-width="1" stroke-dasharray="1,1.5"/>
<line x1="891.0" y1="518.0" x2="891.0" y2="556.5" stroke="#6c6c6c" stroke-width="1" stroke-dasharray="1,1.5"/>
<line x1="957.0" y1="518.0" x2="957.0" y2="556.5" stroke="#6c6c6c" stroke-width="1" stroke-dasharray="1,1.5"/>
<line x1="1023.0" y1="518.0" x2="1023.0" y2="556.5" stroke="#6c6c6c" stroke-width="1" stroke-dasharray="1,1.5"/>
<line x1="616.0" y1="572.3" x2="616.0" y2="619.0" stroke="#6c6c6c" stroke-width="1" stroke-dasharray="1,1.5"/>
<line x1="714.4" y1="572.3" x2="714.4" y2="619.0" stroke="#6c6c6c" stroke-width="1" stroke-dasharray="1,1.5"/>
<line x1="758.4" y1="572.3" x2="758.4" y2="619.0" stroke="#6c6c6c" stroke-width="1" stroke-dasharray="1,1.5"/>
<line x1="791.4" y1="572.3" x2="791.4" y2="619.0" stroke="#6c6c6c" stroke-width="1" stroke-dasharray="1,1.5"/>
<line x1="891.0" y1="572.3" x2="891.0" y2="619.0" stroke="#6c6c6c" stroke-width="1" stroke-dasharray="1,1.5"/>
<line x1="957.0" y1="572.3" x2="957.0" y2="619.0" stroke="#6c6c6c" stroke-width="1" stroke-dasharray="1,1.5"/>
<line x1="1023.0" y1="572.3" x2="1023.0" y2="619.0" stroke="#6c6c6c" stroke-width="1" stroke-dasharray="1,1.5"/>
<line x1="556.0" y1="99.0" x2="1084.0" y2="99.0" stroke="#6a6a6a" stroke-width="1" stroke-dasharray="1,1.5"/>
<line x1="556.0" y1="140.8" x2="1084.0" y2="140.8" stroke="#6a6a6a" stroke-width="1" stroke-dasharray="1,1.5"/>
<line x1="556.0" y1="182.3" x2="1084.0" y2="182.3" stroke="#6a6a6a" stroke-width="1" stroke-dasharray="1,1.5"/>
<line x1="556.0" y1="223.8" x2="1084.0" y2="223.8" stroke="#6a6a6a" stroke-width="1" stroke-dasharray="1,1.5"/>
<line x1="556.0" y1="265.5" x2="1084.0" y2="265.5" stroke="#6a6a6a" stroke-width="1" stroke-dasharray="1,1.5"/>
<line x1="556.0" y1="307.0" x2="1084.0" y2="307.0" stroke="#6a6a6a" stroke-width="1" stroke-dasharray="1,1.5"/>
<line x1="556.0" y1="348.5" x2="1084.0" y2="348.5" stroke="#6a6a6a" stroke-width="1" stroke-dasharray="1,1.5"/>
<line x1="556.0" y1="390.0" x2="1084.0" y2="390.0" stroke="#6a6a6a" stroke-width="1" stroke-dasharray="1,1.5"/>
<line x1="566.0" y1="120.0" x2="1078.0" y2="120.0" stroke="#4a4a4a" stroke-width="1" stroke-dasharray="3,12"/>
<line x1="566.0" y1="161.5" x2="1078.0" y2="161.5" stroke="#4a4a4a" stroke-width="1" stroke-dasharray="3,12"/>
<line x1="566.0" y1="203.0" x2="1078.0" y2="203.0" stroke="#4a4a4a" stroke-width="1" stroke-dasharray="3,12"/>
<line x1="566.0" y1="244.5" x2="1078.0" y2="244.5" stroke="#4a4a4a" stroke-width="1" stroke-dasharray="3,12"/>
<line x1="566.0" y1="286.0" x2="1078.0" y2="286.0" stroke="#4a4a4a" stroke-width="1" stroke-dasharray="3,12"/>
<line x1="566.0" y1="327.5" x2="1078.0" y2="327.5" stroke="#4a4a4a" stroke-width="1" stroke-dasharray="3,12"/>
<line x1="566.0" y1="369.0" x2="1078.0" y2="369.0" stroke="#4a4a4a" stroke-width="1" stroke-dasharray="3,12"/>
<line x1="556.0" y1="449.5" x2="1084.0" y2="449.5" stroke="#686868" stroke-width="1" stroke-dasharray="1,1.5"/>
<line x1="556.0" y1="500.0" x2="1084.0" y2="500.0" stroke="#686868" stroke-width="1" stroke-dasharray="1,1.5"/>
<line x1="556.0" y1="535.6" x2="1084.0" y2="535.6" stroke="#686868" stroke-width="1" stroke-dasharray="1,1.5"/>
<line x1="556.0" y1="552.4" x2="1084.0" y2="552.4" stroke="#686868" stroke-width="1" stroke-dasharray="1,1.5"/>
<line x1="556.0" y1="578.6" x2="1084.0" y2="578.6" stroke="#686868" stroke-width="1" stroke-dasharray="1,1.5"/>
<line x1="556.0" y1="613.6" x2="1084.0" y2="613.6" stroke="#686868" stroke-width="1" stroke-dasharray="1,1.5"/>
<line x1="566.0" y1="433.5" x2="1078.0" y2="433.5" stroke="#4a4a4a" stroke-width="1" stroke-dasharray="3,12"/>
<line x1="566.0" y1="484.0" x2="1078.0" y2="484.0" stroke="#4a4a4a" stroke-width="1" stroke-dasharray="3,12"/>
<line x1="566.0" y1="595.6" x2="1078.0" y2="595.6" stroke="#4a4a4a" stroke-width="1" stroke-dasharray="3,12"/>
<line x1="552.0" y1="80.5" x2="556.0" y2="80.5" stroke="#ffffff" stroke-width="1"/>
<line x1="552.0" y1="84.7" x2="554.0" y2="84.7" stroke="#ffffff" stroke-width="1"/>
<line x1="552.0" y1="88.8" x2="554.0" y2="88.8" stroke="#ffffff" stroke-width="1"/>
<line x1="552.0" y1="93.0" x2="554.0" y2="93.0" stroke="#ffffff" stroke-width="1"/>
<line x1="552.0" y1="97.1" x2="554.0" y2="97.1" stroke="#ffffff" stroke-width="1"/>
<line x1="552.0" y1="101.2" x2="556.0" y2="101.2" stroke="#ffffff" stroke-width="1"/>
<line x1="552.0" y1="105.4" x2="554.0" y2="105.4" stroke="#ffffff" stroke-width="1"/>
<line x1="552.0" y1="109.6" x2="554.0" y2="109.6" stroke="#ffffff" stroke-width="1"/>
<line x1="552.0" y1="113.7" x2="554.0" y2="113.7" stroke="#ffffff" stroke-width="1"/>
<line x1="552.0" y1="117.8" x2="554.0" y2="117.8" stroke="#ffffff" stroke-width="1"/>
<line x1="552.0" y1="122.0" x2="556.0" y2="122.0" stroke="#ffffff" stroke-width="1"/>
<line x1="552.0" y1="126.2" x2="554.0" y2="126.2" stroke="#ffffff" stroke-width="1"/>
<line x1="552.0" y1="130.3" x2="554.0" y2="130.3" stroke="#ffffff" stroke-width="1"/>
<line x1="552.0" y1="134.4" x2="554.0" y2="134.4" stroke="#ffffff" stroke-width="1"/>
<line x1="552.0" y1="138.6" x2="554.0" y2="138.6" stroke="#ffffff" stroke-width="1"/>
<line x1="552.0" y1="142.8" x2="556.0" y2="142.8" stroke="#ffffff" stroke-width="1"/>
<line x1="552.0" y1="146.9" x2="554.0" y2="146.9" stroke="#ffffff" stroke-width="1"/>
<line x1="552.0" y1="151.1" x2="554.0" y2="151.1" stroke="#ffffff" stroke-width="1"/>
<line x1="552.0" y1="155.2" x2="554.0" y2="155.2" stroke="#ffffff" stroke-width="1"/>
<line x1="552.0" y1="159.4" x2="554.0" y2="159.4" stroke="#ffffff" stroke-width="1"/>
<line x1="552.0" y1="163.5" x2="556.0" y2="163.5" stroke="#ffffff" stroke-width="1"/>
<line x1="552.0" y1="167.7" x2="554.0" y2="167.7" stroke="#ffffff" stroke-width="1"/>
<line x1="552.0" y1="171.8" x2="554.0" y2="171.8" stroke="#ffffff" stroke-width="1"/>
<line x1="552.0" y1="175.9" x2="554.0" y2="175.9" stroke="#ffffff" stroke-width="1"/>
<line x1="552.0" y1="180.1" x2="554.0" y2="180.1" stroke="#ffffff" stroke-width="1"/>
<line x1="552.0" y1="184.2" x2="556.0" y2="184.2" stroke="#ffffff" stroke-width="1"/>
<line x1="552.0" y1="188.4" x2="554.0" y2="188.4" stroke="#ffffff" stroke-width="1"/>
<line x1="552.0" y1="192.6" x2="554.0" y2="192.6" stroke="#ffffff" stroke-width="1"/>
<line x1="552.0" y1="196.7" x2="554.0" y2="196.7" stroke="#ffffff" stroke-width="1"/>
<line x1="552.0" y1="200.9" x2="554.0" y2="200.9" stroke="#ffffff" stroke-width="1"/>
<line x1="552.0" y1="205.0" x2="556.0" y2="205.0" stroke="#ffffff" stroke-width="1"/>
<line x1="552.0" y1="209.2" x2="554.0" y2="209.2" stroke="#ffffff" stroke-width="1"/>
<line x1="552.0" y1="213.3" x2="554.0" y2="213.3" stroke="#ffffff" stroke-width="1"/>
<line x1="552.0" y1="217.5" x2="554.0" y2="217.5" stroke="#ffffff" stroke-width="1"/>
<line x1="552.0" y1="221.6" x2="554.0" y2="221.6" stroke="#ffffff" stroke-width="1"/>
<line x1="552.0" y1="225.8" x2="556.0" y2="225.8" stroke="#ffffff" stroke-width="1"/>
<line x1="552.0" y1="229.9" x2="554.0" y2="229.9" stroke="#ffffff" stroke-width="1"/>
<line x1="552.0" y1="234.1" x2="554.0" y2="234.1" stroke="#ffffff" stroke-width="1"/>
<line x1="552.0" y1="238.2" x2="554.0" y2="238.2" stroke="#ffffff" stroke-width="1"/>
<line x1="552.0" y1="242.4" x2="554.0" y2="242.4" stroke="#ffffff" stroke-width="1"/>
<line x1="552.0" y1="246.5" x2="556.0" y2="246.5" stroke="#ffffff" stroke-width="1"/>
<line x1="552.0" y1="250.7" x2="554.0" y2="250.7" stroke="#ffffff" stroke-width="1"/>
<line x1="552.0" y1="254.8" x2="554.0" y2="254.8" stroke="#ffffff" stroke-width="1"/>
<line x1="552.0" y1="259.0" x2="554.0" y2="259.0" stroke="#ffffff" stroke-width="1"/>
<line x1="552.0" y1="263.1" x2="554.0" y2="263.1" stroke="#ffffff" stroke-width="1"/>
<line x1="552.0" y1="267.2" x2="556.0" y2="267.2" stroke="#ffffff" stroke-width="1"/>
<line x1="552.0" y1="271.4" x2="554.0" y2="271.4" stroke="#ffffff" stroke-width="1"/>
<line x1="552.0" y1="275.6" x2="554.0" y2="275.6" stroke="#ffffff" stroke-width="1"/>
<line x1="552.0" y1="279.7" x2="554.0" y2="279.7" stroke="#ffffff" stroke-width="1"/>
<line x1="552.0" y1="283.9" x2="554.0" y2="283.9" stroke="#ffffff" stroke-width="1"/>
<line x1="552.0" y1="288.0" x2="556.0" y2="288.0" stroke="#ffffff" stroke-width="1"/>
<line x1="552.0" y1="292.1" x2="554.0" y2="292.1" stroke="#ffffff" stroke-width="1"/>
<line x1="552.0" y1="296.3" x2="554.0" y2="296.3" stroke="#ffffff" stroke-width="1"/>
<line x1="552.0" y1="300.5" x2="554.0" y2="300.5" stroke="#ffffff" stroke-width="1"/>
<line x1="552.0" y1="304.6" x2="554.0" y2="304.6" stroke="#ffffff" stroke-width="1"/>
<line x1="552.0" y1="308.8" x2="556.0" y2="308.8" stroke="#ffffff" stroke-width="1"/>
<line x1="552.0" y1="312.9" x2="554.0" y2="312.9" stroke="#ffffff" stroke-width="1"/>
<line x1="552.0" y1="317.1" x2="554.0" y2="317.1" stroke="#ffffff" stroke-width="1"/>
<line x1="552.0" y1="321.2" x2="554.0" y2="321.2" stroke="#ffffff" stroke-width="1"/>
<line x1="552.0" y1="325.4" x2="554.0" y2="325.4" stroke="#ffffff" stroke-width="1"/>
<line x1="552.0" y1="329.5" x2="556.0" y2="329.5" stroke="#ffffff" stroke-width="1"/>
<line x1="552.0" y1="333.7" x2="554.0" y2="333.7" stroke="#ffffff" stroke-width="1"/>
<line x1="552.0" y1="337.8" x2="554.0" y2="337.8" stroke="#ffffff" stroke-width="1"/>
<line x1="552.0" y1="342.0" x2="554.0" y2="342.0" stroke="#ffffff" stroke-width="1"/>
<line x1="552.0" y1="346.1" x2="554.0" y2="346.1" stroke="#ffffff" stroke-width="1"/>
<line x1="552.0" y1="350.2" x2="556.0" y2="350.2" stroke="#ffffff" stroke-width="1"/>
<line x1="552.0" y1="354.4" x2="554.0" y2="354.4" stroke="#ffffff" stroke-width="1"/>
<line x1="552.0" y1="358.6" x2="554.0" y2="358.6" stroke="#ffffff" stroke-width="1"/>
<line x1="552.0" y1="362.7" x2="554.0" y2="362.7" stroke="#ffffff" stroke-width="1"/>
<line x1="552.0" y1="366.9" x2="554.0" y2="366.9" stroke="#ffffff" stroke-width="1"/>
<line x1="552.0" y1="371.0" x2="556.0" y2="371.0" stroke="#ffffff" stroke-width="1"/>
<line x1="552.0" y1="375.2" x2="554.0" y2="375.2" stroke="#ffffff" stroke-width="1"/>
<line x1="552.0" y1="379.3" x2="554.0" y2="379.3" stroke="#ffffff" stroke-width="1"/>
<line x1="552.0" y1="383.5" x2="554.0" y2="383.5" stroke="#ffffff" stroke-width="1"/>
<line x1="552.0" y1="387.6" x2="554.0" y2="387.6" stroke="#ffffff" stroke-width="1"/>
<line x1="552.0" y1="391.8" x2="556.0" y2="391.8" stroke="#ffffff" stroke-width="1"/>
<line x1="552.0" y1="395.9" x2="554.0" y2="395.9" stroke="#ffffff" stroke-width="1"/>
<line x1="552.0" y1="400.1" x2="554.0" y2="400.1" stroke="#ffffff" stroke-width="1"/>
<line x1="552.0" y1="419.5" x2="556.0" y2="419.5" stroke="#ffffff" stroke-width="1"/>
<line x1="552.0" y1="423.6" x2="554.0" y2="423.6" stroke="#ffffff" stroke-width="1"/>
<line x1="552.0" y1="427.8" x2="554.0" y2="427.8" stroke="#ffffff" stroke-width="1"/>
<line x1="552.0" y1="431.9" x2="554.0" y2="431.9" stroke="#ffffff" stroke-width="1"/>
<line x1="552.0" y1="436.1" x2="554.0" y2="436.1" stroke="#ffffff" stroke-width="1"/>
<line x1="552.0" y1="440.2" x2="556.0" y2="440.2" stroke="#ffffff" stroke-width="1"/>
<line x1="552.0" y1="444.4" x2="554.0" y2="444.4" stroke="#ffffff" stroke-width="1"/>
<line x1="552.0" y1="448.6" x2="554.0" y2="448.6" stroke="#ffffff" stroke-width="1"/>
<line x1="552.0" y1="469.5" x2="556.0" y2="469.5" stroke="#ffffff" stroke-width="1"/>
<line x1="552.0" y1="473.6" x2="554.0" y2="473.6" stroke="#ffffff" stroke-width="1"/>
<line x1="552.0" y1="477.8" x2="554.0" y2="477.8" stroke="#ffffff" stroke-width="1"/>
<line x1="552.0" y1="481.9" x2="554.0" y2="481.9" stroke="#ffffff" stroke-width="1"/>
<line x1="552.0" y1="486.1" x2="554.0" y2="486.1" stroke="#ffffff" stroke-width="1"/>
<line x1="552.0" y1="490.2" x2="556.0" y2="490.2" stroke="#ffffff" stroke-width="1"/>
<line x1="552.0" y1="494.4" x2="554.0" y2="494.4" stroke="#ffffff" stroke-width="1"/>
<line x1="552.0" y1="498.6" x2="554.0" y2="498.6" stroke="#ffffff" stroke-width="1"/>
<line x1="552.0" y1="519.5" x2="556.0" y2="519.5" stroke="#ffffff" stroke-width="1"/>
<line x1="552.0" y1="523.6" x2="554.0" y2="523.6" stroke="#ffffff" stroke-width="1"/>
<line x1="552.0" y1="527.8" x2="554.0" y2="527.8" stroke="#ffffff" stroke-width="1"/>
<line x1="552.0" y1="532.0" x2="554.0" y2="532.0" stroke="#ffffff" stroke-width="1"/>
<line x1="552.0" y1="536.1" x2="554.0" y2="536.1" stroke="#ffffff" stroke-width="1"/>
<line x1="552.0" y1="540.2" x2="556.0" y2="540.2" stroke="#ffffff" stroke-width="1"/>
<line x1="552.0" y1="544.4" x2="554.0" y2="544.4" stroke="#ffffff" stroke-width="1"/>
<line x1="552.0" y1="548.5" x2="554.0" y2="548.5" stroke="#ffffff" stroke-width="1"/>
<line x1="552.0" y1="552.7" x2="554.0" y2="552.7" stroke="#ffffff" stroke-width="1"/>
<line x1="552.0" y1="573.8" x2="556.0" y2="573.8" stroke="#ffffff" stroke-width="1"/>
<line x1="552.0" y1="577.9" x2="554.0" y2="577.9" stroke="#ffffff" stroke-width="1"/>
<line x1="552.0" y1="582.1" x2="554.0" y2="582.1" stroke="#ffffff" stroke-width="1"/>
<line x1="552.0" y1="586.2" x2="554.0" y2="586.2" stroke="#ffffff" stroke-width="1"/>
<line x1="552.0" y1="590.4" x2="554.0" y2="590.4" stroke="#ffffff" stroke-width="1"/>
<line x1="552.0" y1="594.5" x2="556.0" y2="594.5" stroke="#ffffff" stroke-width="1"/>
<line x1="552.0" y1="598.7" x2="554.0" y2="598.7" stroke="#ffffff" stroke-width="1"/>
<line x1="552.0" y1="602.8" x2="554.0" y2="602.8" stroke="#ffffff" stroke-width="1"/>
<line x1="552.0" y1="607.0" x2="554.0" y2="607.0" stroke="#ffffff" stroke-width="1"/>
<line x1="552.0" y1="611.1" x2="554.0" y2="611.1" stroke="#ffffff" stroke-width="1"/>
<line x1="552.0" y1="615.3" x2="556.0" y2="615.3" stroke="#ffffff" stroke-width="1"/>
<line x1="978.0" y1="98.2" x2="1077.0" y2="98.2" stroke="#ffffff" stroke-width="1"/>
<text x="1038.0" y="94.5" fill="#ffffff" font-size="12" text-anchor="start" textLength="38.5" lengthAdjust="spacingAndGlyphs" >5980,47</text>
<line x1="978.0" y1="197.0" x2="1077.0" y2="197.0" stroke="#e02020" stroke-width="1"/>
<text x="1039.0" y="193.0" fill="#e02020" font-size="12" text-anchor="start" textLength="38.5" lengthAdjust="spacingAndGlyphs" >5933,30</text>
<line x1="978.0" y1="254.5" x2="1077.0" y2="254.5" stroke="#ffffff" stroke-width="1"/>
<text x="1039.0" y="251.0" fill="#ffffff" font-size="12" text-anchor="start" textLength="38.0" lengthAdjust="spacingAndGlyphs" >5905,31</text>
<line x1="978.0" y1="314.0" x2="1077.0" y2="314.0" stroke="#b8e0a0" stroke-width="1"/>
<text x="1039.0" y="310.5" fill="#b8e0a0" font-size="12" text-anchor="start" textLength="38.0" lengthAdjust="spacingAndGlyphs" >5876,72</text>
<line x1="978.0" y1="367.2" x2="1077.0" y2="367.2" stroke="#e02020" stroke-width="1"/>
<text x="1039.0" y="364.0" fill="#e02020" font-size="12" text-anchor="start" textLength="38.0" lengthAdjust="spacingAndGlyphs" >5851,09</text>
<line x1="978.0" y1="397.4" x2="1077.0" y2="397.4" stroke="#e02020" stroke-width="1"/>
<text x="1039.0" y="393.3" fill="#e02020" font-size="12" text-anchor="start" textLength="38.0" lengthAdjust="spacingAndGlyphs" >5836,87</text>
<polyline points="960.0,205.0 981.5,195.0 995.5,183.0 1018.5,168.0 1046.5,156.6 1062.0,151.5 1070.0,145.0 1076.6,136.0" fill="none" stroke="#7fffd4" stroke-width="1" stroke-linejoin="round" shape-rendering="auto"/>
<polyline points="960.0,268.0 978.0,251.7 999.0,235.0 1076.6,173.0" fill="none" stroke="#b0b0b0" stroke-width="1" stroke-linejoin="round" shape-rendering="auto"/>
<polyline points="960.0,327.0 978.0,325.7 985.0,325.0 1008.0,315.5 1046.5,301.4 1076.6,289.0" fill="none" stroke="#30e0e0" stroke-width="1" stroke-linejoin="round" shape-rendering="auto"/>
<polyline points="976.0,179.0 982.0,179.0" fill="none" stroke="#ee2020" stroke-width="2" stroke-linejoin="round" />
<polyline points="984.0,178.0 998.5,178.0 998.5,128.5 1004.5,128.5" fill="none" stroke="#22c822" stroke-width="2" stroke-linejoin="round" />
<polyline points="988.5,174.0 988.5,182.0" fill="none" stroke="#22c822" stroke-width="2" stroke-linejoin="round" />
<polyline points="1004.5,128.5 1010.0,128.5 1010.0,148.5 1017.0,148.5" fill="none" stroke="#ee2020" stroke-width="2" stroke-linejoin="round" />
<polyline points="1015.0,150.0 1021.0,150.0 1021.0,137.0 1027.0,137.0" fill="none" stroke="#22c822" stroke-width="2" stroke-linejoin="round" />
<polyline points="1027.0,137.0 1031.0,137.0 1031.0,141.0 1037.0,143.0" fill="none" stroke="#ee2020" stroke-width="2" stroke-linejoin="round" />
<polyline points="1037.0,141.5 1047.0,141.5" fill="none" stroke="#22c822" stroke-width="2" stroke-linejoin="round" />
<polyline points="1042.5,138.0 1042.5,143.0" fill="none" stroke="#22c822" stroke-width="2" stroke-linejoin="round" />
<polyline points="1047.0,140.0 1053.0,140.0 1053.0,147.0 1058.0,147.0" fill="none" stroke="#ee2020" stroke-width="2" stroke-linejoin="round" />
<polyline points="1058.0,148.5 1065.5,148.5 1065.5,127.0 1076.0,127.0 1076.0,82.0 1082.0,82.0" fill="none" stroke="#22c822" stroke-width="2" stroke-linejoin="round" />
<polyline points="960.0,428.0 978.0,427.0 988.0,432.0 1003.0,429.0 1021.0,424.0 1040.0,427.0 1055.0,432.0 1066.0,430.0 1077.0,427.0" fill="none" stroke="#ffa43c" stroke-width="1" stroke-linejoin="round" shape-rendering="auto"/>
<polyline points="960.0,426.0 978.0,426.0 995.0,429.5 1015.0,427.0 1021.0,425.5 1045.0,426.5 1060.0,429.0 1077.0,430.0" fill="none" stroke="#4ae6e6" stroke-width="1" stroke-linejoin="round" shape-rendering="auto"/>
<polyline points="960.0,476.0 978.0,475.5 995.0,475.0 1021.0,476.5 1040.0,479.0 1054.0,481.5 1077.0,475.5" fill="none" stroke="#4ae6e6" stroke-width="1" stroke-linejoin="round" shape-rendering="auto"/>
<polyline points="960.0,524.0 978.0,523.4 990.0,523.0 999.5,519.4 1011.0,524.5 1022.0,520.4 1041.0,522.4 1054.6,527.5 1066.0,519.4 1077.0,519.4" fill="none" stroke="#40f0c0" stroke-width="1" stroke-linejoin="round" shape-rendering="auto"/>
<polyline points="570.0,536.5 577.0,535.0 586.0,536.0 594.0,536.5 603.0,533.5 610.0,532.5 620.0,534.0 626.0,534.0 634.0,530.0 640.0,528.0" fill="none" stroke="#4ae6e6" stroke-width="1" stroke-linejoin="round" shape-rendering="auto"/>
<polyline points="645.0,530.5 650.0,530.5" fill="none" stroke="#4ae6e6" stroke-width="1" stroke-linejoin="round" shape-rendering="auto"/>
<rect x="565.0" y="613.0" width="43.0" height="1.2" fill="#901010" />
<rect x="675.0" y="612.4" width="21.0" height="1.2" fill="#1e8a1e" />
<rect x="698.0" y="611.1" width="20.0" height="2.5" fill="#1e8a1e" />
<rect x="720.0" y="610.1" width="11.0" height="3.5" fill="#1e8a1e" />
<rect x="732.0" y="607.8" width="19.0" height="5.8" fill="#1e8a1e" />
<rect x="884.0" y="607.0" width="10.0" height="6.6" fill="#1e8a1e" />
<rect x="895.0" y="603.0" width="10.0" height="10.6" fill="#1e8a1e" />
<rect x="906.0" y="603.0" width="10.0" height="10.6" fill="#1e8a1e" />
<rect x="917.0" y="604.0" width="10.0" height="9.6" fill="#1e8a1e" />
<rect x="928.0" y="604.0" width="10.0" height="9.6" fill="#1e8a1e" />
<rect x="939.0" y="604.0" width="10.0" height="9.6" fill="#1e8a1e" />
<rect x="950.0" y="605.0" width="10.0" height="8.6" fill="#1e8a1e" />
<rect x="961.0" y="606.0" width="10.0" height="7.6" fill="#1e8a1e" />
<rect x="972.0" y="608.0" width="10.0" height="5.6" fill="#1e8a1e" />
<rect x="983.0" y="609.0" width="10.0" height="4.6" fill="#1e8a1e" />
<rect x="994.0" y="610.0" width="10.0" height="3.6" fill="#1e8a1e" />
<rect x="1005.0" y="611.0" width="10.0" height="2.6" fill="#1e8a1e" />
<rect x="1016.0" y="612.0" width="10.0" height="1.6" fill="#1e8a1e" />
<rect x="1027.0" y="612.5" width="10.0" height="1.1" fill="#1e8a1e" />
<rect x="1038.0" y="613.0" width="10.0" height="0.6" fill="#1e8a1e" />
<rect x="1049.0" y="613.0" width="10.0" height="0.6" fill="#1e8a1e" />
<rect x="1060.0" y="613.0" width="10.0" height="0.6" fill="#1e8a1e" />
<rect x="1071.0" y="611.5" width="10.0" height="2.1" fill="#1e8a1e" />
<polyline points="570.0,606.4 620.0,606.0 690.0,605.0 742.0,595.6 782.0,595.6 782.0,594.4 854.0,594.4 854.0,593.4 890.0,593.4 900.5,585.8 923.0,581.0 943.4,577.5 956.0,576.0 984.0,576.7 999.0,574.2 1037.0,574.2 1052.0,576.7 1067.0,576.7 1076.0,574.2" fill="none" stroke="#4ae6e6" stroke-width="1" stroke-linejoin="round" shape-rendering="auto"/>
<polyline points="570.0,605.6 670.0,606.0 742.0,600.0 782.0,600.0 782.0,599.4 854.0,599.4 854.0,597.7 890.0,597.7 956.0,583.8 981.4,580.0 1016.8,577.5 1076.0,577.5" fill="none" stroke="#ffa43c" stroke-width="1" stroke-linejoin="round" shape-rendering="auto"/>
<text x="557.0" y="569.5" fill="#c4c43c" font-size="12" text-anchor="start" textLength="75.0" lengthAdjust="spacingAndGlyphs" >macd(12, 26, 9)</text>
<line x1="1084.5" y1="79.0" x2="1084.5" y2="400.5" stroke="#f0e0a0" stroke-width="1"/>
<line x1="1080.5" y1="80.5" x2="1084.5" y2="80.5" stroke="#f0e0a0" stroke-width="1"/>
<line x1="1082.5" y1="84.7" x2="1084.5" y2="84.7" stroke="#f0e0a0" stroke-width="1"/>
<line x1="1082.5" y1="88.8" x2="1084.5" y2="88.8" stroke="#f0e0a0" stroke-width="1"/>
<line x1="1082.5" y1="93.0" x2="1084.5" y2="93.0" stroke="#f0e0a0" stroke-width="1"/>
<line x1="1082.5" y1="97.1" x2="1084.5" y2="97.1" stroke="#f0e0a0" stroke-width="1"/>
<line x1="1080.5" y1="101.2" x2="1084.5" y2="101.2" stroke="#f0e0a0" stroke-width="1"/>
<line x1="1082.5" y1="105.4" x2="1084.5" y2="105.4" stroke="#f0e0a0" stroke-width="1"/>
<line x1="1082.5" y1="109.6" x2="1084.5" y2="109.6" stroke="#f0e0a0" stroke-width="1"/>
<line x1="1082.5" y1="113.7" x2="1084.5" y2="113.7" stroke="#f0e0a0" stroke-width="1"/>
<line x1="1082.5" y1="117.8" x2="1084.5" y2="117.8" stroke="#f0e0a0" stroke-width="1"/>
<line x1="1080.5" y1="122.0" x2="1084.5" y2="122.0" stroke="#f0e0a0" stroke-width="1"/>
<line x1="1082.5" y1="126.2" x2="1084.5" y2="126.2" stroke="#f0e0a0" stroke-width="1"/>
<line x1="1082.5" y1="130.3" x2="1084.5" y2="130.3" stroke="#f0e0a0" stroke-width="1"/>
<line x1="1082.5" y1="134.4" x2="1084.5" y2="134.4" stroke="#f0e0a0" stroke-width="1"/>
<line x1="1082.5" y1="138.6" x2="1084.5" y2="138.6" stroke="#f0e0a0" stroke-width="1"/>
<line x1="1080.5" y1="142.8" x2="1084.5" y2="142.8" stroke="#f0e0a0" stroke-width="1"/>
<line x1="1082.5" y1="146.9" x2="1084.5" y2="146.9" stroke="#f0e0a0" stroke-width="1"/>
<line x1="1082.5" y1="151.1" x2="1084.5" y2="151.1" stroke="#f0e0a0" stroke-width="1"/>
<line x1="1082.5" y1="155.2" x2="1084.5" y2="155.2" stroke="#f0e0a0" stroke-width="1"/>
<line x1="1082.5" y1="159.4" x2="1084.5" y2="159.4" stroke="#f0e0a0" stroke-width="1"/>
<line x1="1080.5" y1="163.5" x2="1084.5" y2="163.5" stroke="#f0e0a0" stroke-width="1"/>
<line x1="1082.5" y1="167.7" x2="1084.5" y2="167.7" stroke="#f0e0a0" stroke-width="1"/>
<line x1="1082.5" y1="171.8" x2="1084.5" y2="171.8" stroke="#f0e0a0" stroke-width="1"/>
<line x1="1082.5" y1="175.9" x2="1084.5" y2="175.9" stroke="#f0e0a0" stroke-width="1"/>
<line x1="1082.5" y1="180.1" x2="1084.5" y2="180.1" stroke="#f0e0a0" stroke-width="1"/>
<line x1="1080.5" y1="184.2" x2="1084.5" y2="184.2" stroke="#f0e0a0" stroke-width="1"/>
<line x1="1082.5" y1="188.4" x2="1084.5" y2="188.4" stroke="#f0e0a0" stroke-width="1"/>
<line x1="1082.5" y1="192.6" x2="1084.5" y2="192.6" stroke="#f0e0a0" stroke-width="1"/>
<line x1="1082.5" y1="196.7" x2="1084.5" y2="196.7" stroke="#f0e0a0" stroke-width="1"/>
<line x1="1082.5" y1="200.9" x2="1084.5" y2="200.9" stroke="#f0e0a0" stroke-width="1"/>
<line x1="1080.5" y1="205.0" x2="1084.5" y2="205.0" stroke="#f0e0a0" stroke-width="1"/>
<line x1="1082.5" y1="209.2" x2="1084.5" y2="209.2" stroke="#f0e0a0" stroke-width="1"/>
<line x1="1082.5" y1="213.3" x2="1084.5" y2="213.3" stroke="#f0e0a0" stroke-width="1"/>
<line x1="1082.5" y1="217.5" x2="1084.5" y2="217.5" stroke="#f0e0a0" stroke-width="1"/>
<line x1="1082.5" y1="221.6" x2="1084.5" y2="221.6" stroke="#f0e0a0" stroke-width="1"/>
<line x1="1080.5" y1="225.8" x2="1084.5" y2="225.8" stroke="#f0e0a0" stroke-width="1"/>
<line x1="1082.5" y1="229.9" x2="1084.5" y2="229.9" stroke="#f0e0a0" stroke-width="1"/>
<line x1="1082.5" y1="234.1" x2="1084.5" y2="234.1" stroke="#f0e0a0" stroke-width="1"/>
<line x1="1082.5" y1="238.2" x2="1084.5" y2="238.2" stroke="#f0e0a0" stroke-width="1"/>
<line x1="1082.5" y1="242.4" x2="1084.5" y2="242.4" stroke="#f0e0a0" stroke-width="1"/>
<line x1="1080.5" y1="246.5" x2="1084.5" y2="246.5" stroke="#f0e0a0" stroke-width="1"/>
<line x1="1082.5" y1="250.7" x2="1084.5" y2="250.7" stroke="#f0e0a0" stroke-width="1"/>
<line x1="1082.5" y1="254.8" x2="1084.5" y2="254.8" stroke="#f0e0a0" stroke-width="1"/>
<line x1="1082.5" y1="259.0" x2="1084.5" y2="259.0" stroke="#f0e0a0" stroke-width="1"/>
<line x1="1082.5" y1="263.1" x2="1084.5" y2="263.1" stroke="#f0e0a0" stroke-width="1"/>
<line x1="1080.5" y1="267.2" x2="1084.5" y2="267.2" stroke="#f0e0a0" stroke-width="1"/>
<line x1="1082.5" y1="271.4" x2="1084.5" y2="271.4" stroke="#f0e0a0" stroke-width="1"/>
<line x1="1082.5" y1="275.6" x2="1084.5" y2="275.6" stroke="#f0e0a0" stroke-width="1"/>
<line x1="1082.5" y1="279.7" x2="1084.5" y2="279.7" stroke="#f0e0a0" stroke-width="1"/>
<line x1="1082.5" y1="283.9" x2="1084.5" y2="283.9" stroke="#f0e0a0" stroke-width="1"/>
<line x1="1080.5" y1="288.0" x2="1084.5" y2="288.0" stroke="#f0e0a0" stroke-width="1"/>
<line x1="1082.5" y1="292.1" x2="1084.5" y2="292.1" stroke="#f0e0a0" stroke-width="1"/>
<line x1="1082.5" y1="296.3" x2="1084.5" y2="296.3" stroke="#f0e0a0" stroke-width="1"/>
<line x1="1082.5" y1="300.5" x2="1084.5" y2="300.5" stroke="#f0e0a0" stroke-width="1"/>
<line x1="1082.5" y1="304.6" x2="1084.5" y2="304.6" stroke="#f0e0a0" stroke-width="1"/>
<line x1="1080.5" y1="308.8" x2="1084.5" y2="308.8" stroke="#f0e0a0" stroke-width="1"/>
<line x1="1082.5" y1="312.9" x2="1084.5" y2="312.9" stroke="#f0e0a0" stroke-width="1"/>
<line x1="1082.5" y1="317.1" x2="1084.5" y2="317.1" stroke="#f0e0a0" stroke-width="1"/>
<line x1="1082.5" y1="321.2" x2="1084.5" y2="321.2" stroke="#f0e0a0" stroke-width="1"/>
<line x1="1082.5" y1="325.4" x2="1084.5" y2="325.4" stroke="#f0e0a0" stroke-width="1"/>
<line x1="1080.5" y1="329.5" x2="1084.5" y2="329.5" stroke="#f0e0a0" stroke-width="1"/>
<line x1="1082.5" y1="333.7" x2="1084.5" y2="333.7" stroke="#f0e0a0" stroke-width="1"/>
<line x1="1082.5" y1="337.8" x2="1084.5" y2="337.8" stroke="#f0e0a0" stroke-width="1"/>
<line x1="1082.5" y1="342.0" x2="1084.5" y2="342.0" stroke="#f0e0a0" stroke-width="1"/>
<line x1="1082.5" y1="346.1" x2="1084.5" y2="346.1" stroke="#f0e0a0" stroke-width="1"/>
<line x1="1080.5" y1="350.2" x2="1084.5" y2="350.2" stroke="#f0e0a0" stroke-width="1"/>
<line x1="1082.5" y1="354.4" x2="1084.5" y2="354.4" stroke="#f0e0a0" stroke-width="1"/>
<line x1="1082.5" y1="358.6" x2="1084.5" y2="358.6" stroke="#f0e0a0" stroke-width="1"/>
<line x1="1082.5" y1="362.7" x2="1084.5" y2="362.7" stroke="#f0e0a0" stroke-width="1"/>
<line x1="1082.5" y1="366.9" x2="1084.5" y2="366.9" stroke="#f0e0a0" stroke-width="1"/>
<line x1="1080.5" y1="371.0" x2="1084.5" y2="371.0" stroke="#f0e0a0" stroke-width="1"/>
<line x1="1082.5" y1="375.2" x2="1084.5" y2="375.2" stroke="#f0e0a0" stroke-width="1"/>
<line x1="1082.5" y1="379.3" x2="1084.5" y2="379.3" stroke="#f0e0a0" stroke-width="1"/>
<line x1="1082.5" y1="383.5" x2="1084.5" y2="383.5" stroke="#f0e0a0" stroke-width="1"/>
<line x1="1082.5" y1="387.6" x2="1084.5" y2="387.6" stroke="#f0e0a0" stroke-width="1"/>
<line x1="1080.5" y1="391.8" x2="1084.5" y2="391.8" stroke="#f0e0a0" stroke-width="1"/>
<line x1="1082.5" y1="395.9" x2="1084.5" y2="395.9" stroke="#f0e0a0" stroke-width="1"/>
<line x1="1082.5" y1="400.1" x2="1084.5" y2="400.1" stroke="#f0e0a0" stroke-width="1"/>
<line x1="1085.0" y1="400.0" x2="1139.0" y2="400.0" stroke="#2e3ea4" stroke-width="1"/>
<line x1="1138.5" y1="79.0" x2="1138.5" y2="400.5" stroke="#2e3ea4" stroke-width="1"/>
<line x1="1085.0" y1="79.5" x2="1139.0" y2="79.5" stroke="#e8dca0" stroke-width="1"/>
<line x1="1084.5" y1="418.0" x2="1084.5" y2="450.0" stroke="#f0e0a0" stroke-width="1"/>
<line x1="1080.5" y1="419.5" x2="1084.5" y2="419.5" stroke="#f0e0a0" stroke-width="1"/>
<line x1="1082.5" y1="423.6" x2="1084.5" y2="423.6" stroke="#f0e0a0" stroke-width="1"/>
<line x1="1082.5" y1="427.8" x2="1084.5" y2="427.8" stroke="#f0e0a0" stroke-width="1"/>
<line x1="1082.5" y1="431.9" x2="1084.5" y2="431.9" stroke="#f0e0a0" stroke-width="1"/>
<line x1="1082.5" y1="436.1" x2="1084.5" y2="436.1" stroke="#f0e0a0" stroke-width="1"/>
<line x1="1080.5" y1="440.2" x2="1084.5" y2="440.2" stroke="#f0e0a0" stroke-width="1"/>
<line x1="1082.5" y1="444.4" x2="1084.5" y2="444.4" stroke="#f0e0a0" stroke-width="1"/>
<line x1="1082.5" y1="448.6" x2="1084.5" y2="448.6" stroke="#f0e0a0" stroke-width="1"/>
<line x1="1085.0" y1="449.5" x2="1139.0" y2="449.5" stroke="#2e3ea4" stroke-width="1"/>
<line x1="1138.5" y1="418.0" x2="1138.5" y2="450.0" stroke="#2e3ea4" stroke-width="1"/>
<line x1="1085.0" y1="418.5" x2="1139.0" y2="418.5" stroke="#e8dca0" stroke-width="1"/>
<line x1="1084.5" y1="468.0" x2="1084.5" y2="500.5" stroke="#f0e0a0" stroke-width="1"/>
<line x1="1080.5" y1="469.5" x2="1084.5" y2="469.5" stroke="#f0e0a0" stroke-width="1"/>
<line x1="1082.5" y1="473.6" x2="1084.5" y2="473.6" stroke="#f0e0a0" stroke-width="1"/>
<line x1="1082.5" y1="477.8" x2="1084.5" y2="477.8" stroke="#f0e0a0" stroke-width="1"/>
<line x1="1082.5" y1="481.9" x2="1084.5" y2="481.9" stroke="#f0e0a0" stroke-width="1"/>
<line x1="1082.5" y1="486.1" x2="1084.5" y2="486.1" stroke="#f0e0a0" stroke-width="1"/>
<line x1="1080.5" y1="490.2" x2="1084.5" y2="490.2" stroke="#f0e0a0" stroke-width="1"/>
<line x1="1082.5" y1="494.4" x2="1084.5" y2="494.4" stroke="#f0e0a0" stroke-width="1"/>
<line x1="1082.5" y1="498.6" x2="1084.5" y2="498.6" stroke="#f0e0a0" stroke-width="1"/>
<line x1="1085.0" y1="500.0" x2="1139.0" y2="500.0" stroke="#2e3ea4" stroke-width="1"/>
<line x1="1138.5" y1="468.0" x2="1138.5" y2="500.5" stroke="#2e3ea4" stroke-width="1"/>
<line x1="1085.0" y1="468.5" x2="1139.0" y2="468.5" stroke="#e8dca0" stroke-width="1"/>
<line x1="1084.5" y1="518.0" x2="1084.5" y2="556.5" stroke="#f0e0a0" stroke-width="1"/>
<line x1="1080.5" y1="519.5" x2="1084.5" y2="519.5" stroke="#f0e0a0" stroke-width="1"/>
<line x1="1082.5" y1="523.6" x2="1084.5" y2="523.6" stroke="#f0e0a0" stroke-width="1"/>
<line x1="1082.5" y1="527.8" x2="1084.5" y2="527.8" stroke="#f0e0a0" stroke-width="1"/>
<line x1="1082.5" y1="532.0" x2="1084.5" y2="532.0" stroke="#f0e0a0" stroke-width="1"/>
<line x1="1082.5" y1="536.1" x2="1084.5" y2="536.1" stroke="#f0e0a0" stroke-width="1"/>
<line x1="1080.5" y1="540.2" x2="1084.5" y2="540.2" stroke="#f0e0a0" stroke-width="1"/>
<line x1="1082.5" y1="544.4" x2="1084.5" y2="544.4" stroke="#f0e0a0" stroke-width="1"/>
<line x1="1082.5" y1="548.5" x2="1084.5" y2="548.5" stroke="#f0e0a0" stroke-width="1"/>
<line x1="1082.5" y1="552.7" x2="1084.5" y2="552.7" stroke="#f0e0a0" stroke-width="1"/>
<line x1="1085.0" y1="556.0" x2="1139.0" y2="556.0" stroke="#2e3ea4" stroke-width="1"/>
<line x1="1138.5" y1="518.0" x2="1138.5" y2="556.5" stroke="#2e3ea4" stroke-width="1"/>
<line x1="1085.0" y1="518.5" x2="1139.0" y2="518.5" stroke="#e8dca0" stroke-width="1"/>
<line x1="1084.5" y1="572.3" x2="1084.5" y2="619.0" stroke="#f0e0a0" stroke-width="1"/>
<line x1="1080.5" y1="573.8" x2="1084.5" y2="573.8" stroke="#f0e0a0" stroke-width="1"/>
<line x1="1082.5" y1="577.9" x2="1084.5" y2="577.9" stroke="#f0e0a0" stroke-width="1"/>
<line x1="1082.5" y1="582.1" x2="1084.5" y2="582.1" stroke="#f0e0a0" stroke-width="1"/>
<line x1="1082.5" y1="586.2" x2="1084.5" y2="586.2" stroke="#f0e0a0" stroke-width="1"/>
<line x1="1082.5" y1="590.4" x2="1084.5" y2="590.4" stroke="#f0e0a0" stroke-width="1"/>
<line x1="1080.5" y1="594.5" x2="1084.5" y2="594.5" stroke="#f0e0a0" stroke-width="1"/>
<line x1="1082.5" y1="598.7" x2="1084.5" y2="598.7" stroke="#f0e0a0" stroke-width="1"/>
<line x1="1082.5" y1="602.8" x2="1084.5" y2="602.8" stroke="#f0e0a0" stroke-width="1"/>
<line x1="1082.5" y1="607.0" x2="1084.5" y2="607.0" stroke="#f0e0a0" stroke-width="1"/>
<line x1="1082.5" y1="611.1" x2="1084.5" y2="611.1" stroke="#f0e0a0" stroke-width="1"/>
<line x1="1080.5" y1="615.3" x2="1084.5" y2="615.3" stroke="#f0e0a0" stroke-width="1"/>
<line x1="1085.0" y1="618.5" x2="1139.0" y2="618.5" stroke="#2e3ea4" stroke-width="1"/>
<line x1="1138.5" y1="572.3" x2="1138.5" y2="619.0" stroke="#2e3ea4" stroke-width="1"/>
<line x1="1085.0" y1="572.8" x2="1139.0" y2="572.8" stroke="#e8dca0" stroke-width="1"/>
<text x="1137.0" y="103.3" fill="#f4f4b4" font-size="12" text-anchor="end" textLength="39.5" lengthAdjust="spacingAndGlyphs" >5980,00</text>
<text x="1137.0" y="145.0" fill="#f4f4b4" font-size="12" text-anchor="end" textLength="39.5" lengthAdjust="spacingAndGlyphs" >5960,00</text>
<text x="1137.0" y="187.1" fill="#f4f4b4" font-size="12" text-anchor="end" textLength="39.5" lengthAdjust="spacingAndGlyphs" >5940,00</text>
<text x="1137.0" y="228.3" fill="#f4f4b4" font-size="12" text-anchor="end" textLength="39.5" lengthAdjust="spacingAndGlyphs" >5920,00</text>
<text x="1137.0" y="270.0" fill="#f4f4b4" font-size="12" text-anchor="end" textLength="39.5" lengthAdjust="spacingAndGlyphs" >5900,00</text>
<text x="1137.0" y="311.7" fill="#f4f4b4" font-size="12" text-anchor="end" textLength="39.5" lengthAdjust="spacingAndGlyphs" >5880,00</text>
<text x="1137.0" y="353.3" fill="#f4f4b4" font-size="12" text-anchor="end" textLength="39.5" lengthAdjust="spacingAndGlyphs" >5860,00</text>
<text x="1137.0" y="395.0" fill="#f4f4b4" font-size="12" text-anchor="end" textLength="39.5" lengthAdjust="spacingAndGlyphs" >5840,00</text>
<rect x="1085.5" y="80.0" width="40.5" height="11.5" fill="#ffff20" />
<text x="1086.5" y="90.0" fill="#000" font-size="12" text-anchor="start" textLength="38.5" lengthAdjust="spacingAndGlyphs" >5987,91</text>
<rect x="1085.5" y="130.5" width="40.5" height="12.0" fill="#70f8c8" />
<text x="1086.5" y="141.0" fill="#003020" font-size="12" text-anchor="start" textLength="38.5" lengthAdjust="spacingAndGlyphs" >5962,03</text>
<rect x="1085.5" y="168.0" width="40.5" height="11.5" fill="#808080" />
<text x="1086.5" y="178.0" fill="#181818" font-size="12" text-anchor="start" textLength="38.5" lengthAdjust="spacingAndGlyphs" >5944,22</text>
<rect x="1085.5" y="257.5" width="40.5" height="11.0" fill="#ffff20" />
<text x="1086.5" y="267.0" fill="#000" font-size="12" text-anchor="start" textLength="38.5" lengthAdjust="spacingAndGlyphs" >5901,59</text>
<rect x="1085.5" y="284.0" width="40.5" height="11.0" fill="#20f0f0" />
<text x="1086.5" y="293.5" fill="#003838" font-size="12" text-anchor="start" textLength="38.5" lengthAdjust="spacingAndGlyphs" >5888,42</text>
<text x="1137.0" y="429.5" fill="#f4f4b4" font-size="12" text-anchor="end" textLength="47.0" lengthAdjust="spacingAndGlyphs" >100,0000</text>
<rect x="1085.5" y="419.5" width="30.0" height="5.0" fill="#ffa020" />
<rect x="1085.5" y="425.5" width="40.5" height="11.0" fill="#20f0f0" />
<text x="1086.5" y="435.0" fill="#003838" font-size="12" text-anchor="start" textLength="38.5" lengthAdjust="spacingAndGlyphs" >63,4217</text>
<text x="1137.0" y="448.5" fill="#f4f4b4" font-size="12" text-anchor="end" >0</text>
<text x="1137.0" y="480.0" fill="#f4f4b4" font-size="12" text-anchor="end" textLength="47.0" lengthAdjust="spacingAndGlyphs" >100,0000</text>
<rect x="1085.5" y="469.5" width="40.5" height="11.5" fill="#20f0f0" />
<text x="1086.5" y="479.5" fill="#003838" font-size="12" text-anchor="start" textLength="38.5" lengthAdjust="spacingAndGlyphs" >79,1704</text>
<text x="1137.0" y="498.5" fill="#f4f4b4" font-size="12" text-anchor="end" >0</text>
<text x="1137.0" y="540.5" fill="#f4f4b4" font-size="12" text-anchor="end" textLength="44.0" lengthAdjust="spacingAndGlyphs" >-50,0000</text>
<text x="1137.0" y="553.8" fill="#f4f4b4" font-size="12" text-anchor="end" textLength="50.0" lengthAdjust="spacingAndGlyphs" >-100,0000</text>
<rect x="1085.5" y="518.0" width="38.0" height="10.8" fill="#20f0f0" />
<text x="1086.5" y="527.3" fill="#003838" font-size="12" text-anchor="start" textLength="36.0" lengthAdjust="spacingAndGlyphs" >-0,9843</text>
<text x="1137.0" y="583.0" fill="#f4f4b4" font-size="12" text-anchor="end" textLength="41.0" lengthAdjust="spacingAndGlyphs" >20,0000</text>
<rect x="1085.5" y="573.4" width="41.5" height="10.6" fill="#ffa020" />
<text x="1086.5" y="582.5" fill="#301800" font-size="12" text-anchor="start" textLength="39.5" lengthAdjust="spacingAndGlyphs" >21,2946</text>
<text x="1137.0" y="616.0" fill="#f4f4b4" font-size="12" text-anchor="end" >0</text>
<line x1="551.0" y1="619.5" x2="1084.0" y2="619.5" stroke="#f4f0d0" stroke-width="1"/>
<line x1="616.0" y1="619.0" x2="616.0" y2="622.0" stroke="#f4f0d0" stroke-width="1"/>
<line x1="714.4" y1="619.0" x2="714.4" y2="622.0" stroke="#f4f0d0" stroke-width="1"/>
<line x1="758.4" y1="619.0" x2="758.4" y2="622.0" stroke="#f4f0d0" stroke-width="1"/>
<line x1="791.4" y1="619.0" x2="791.4" y2="622.0" stroke="#f4f0d0" stroke-width="1"/>
<line x1="891.0" y1="619.0" x2="891.0" y2="622.0" stroke="#f4f0d0" stroke-width="1"/>
<line x1="957.0" y1="619.0" x2="957.0" y2="622.0" stroke="#f4f0d0" stroke-width="1"/>
<line x1="1023.0" y1="619.0" x2="1023.0" y2="622.0" stroke="#f4f0d0" stroke-width="1"/>
<text x="553.0" y="633.8" fill="#f4f4b4" font-size="12" text-anchor="start" >F</text>
<text x="601.0" y="633.8" fill="#f4f4b4" font-size="12" text-anchor="start" >13:15</text>
<text x="700.0" y="633.8" fill="#f4f4b4" font-size="12" text-anchor="start" >14:00</text>
<text x="777.0" y="633.8" fill="#f4f4b4" font-size="12" text-anchor="start" >08:15</text>
<text x="876.0" y="633.8" fill="#f4f4b4" font-size="12" text-anchor="start" >09:00</text>
<text x="942.0" y="633.8" fill="#f4f4b4" font-size="12" text-anchor="start" >09:30</text>
<text x="1008.0" y="633.8" fill="#f4f4b4" font-size="12" text-anchor="start" >10:00</text>
<text x="752.0" y="633.8" fill="#ffff60" font-size="12" text-anchor="start" font-weight="bold">Mo</text>
<path d="M1107 628 L1113 621.5 L1113 628 Z" fill="#1a3ab8" shape-rendering="auto"/></svg>

<div style="left:530px;top:97px;width:448px;height:432px;background:linear-gradient(#dfe5f0,#e2e8f2 14px,#e6ebf5 29px,#dde6f3 32px,#dbe5f2);border:1px solid #7c8594;border-radius:0 7px 0 0;border-bottom:1px solid #555a63;clip-path:inset(0 0 0 8px)"></div>
<div style="left:538px;top:126px;width:431px;height:3px;background:linear-gradient(#c5cddb,#5a6270)"></div>
<div style="left:537px;top:98px;width:1px;height:431px;background:#5f6774"></div>
<div class="ttl" id="tf" style="left:683.5px;top:106px;width:200px;letter-spacing:-0.5px">08.12.2011 16:00 - 02.01.2012 12:00</div>
<div class="wb" style="left:872px;top:107px"><svg width="30" height="16" viewBox="0 0 30 16" style="position:absolute;left:-1px;top:-1px"><rect x="9.5" y="7.5" width="11" height="4.6" rx="1.3" fill="#fff" stroke="#4d5562" stroke-width="1.1"/></svg></div><div class="wb" style="left:905px;top:107px"><svg width="30" height="16" viewBox="0 0 30 16" style="position:absolute;left:-1px;top:-1px"><rect x="9.6" y="3.9" width="10.8" height="8.2" rx="1" fill="#fff" stroke="#4d5562" stroke-width="1.2"/><rect x="12.6" y="6.4" width="4.8" height="3.1" fill="#e8ecf4" stroke="#4d5562" stroke-width="1.1"/></svg></div><div class="wb" style="left:938px;top:107px"><svg width="30" height="16" viewBox="0 0 30 16" style="position:absolute;left:-1px;top:-1px"><path d="M11.3 5 L18.7 11.2 M18.7 5 L11.3 11.2" stroke="#4d5562" stroke-width="3.3" stroke-linecap="round" fill="none"/><path d="M11.3 5 L18.7 11.2 M18.7 5 L11.3 11.2" stroke="#fff" stroke-width="1.3" stroke-linecap="round" fill="none"/></svg></div>
<div style="left:538px;top:129px;width:431px;height:374px;background:#000"></div>
<div style="left:538px;top:502px;width:431px;height:20px;background:#f0f0f0"></div>
<div style="left:755px;top:505px;width:196px;height:14px;border:1px solid #9a9a9a;border-radius:3px;background:linear-gradient(#f6f6f6,#e4e4e4 50%,#cfcfcf)"></div>
<div style="left:848px;top:508px;width:1px;height:7px;background:#555"></div>
<div style="left:851px;top:508px;width:1px;height:7px;background:#555"></div>
<div style="left:854px;top:508px;width:1px;height:7px;background:#555"></div>
<div style="left:958px;top:507px;width:0;height:0;border-top:4px solid transparent;border-bottom:4px solid transparent;border-left:5px solid #444"></div>
<svg class="L" width="1151" height="628" viewBox="0 0 1151 628" font-family='"Liberation Sans", Arial, sans-serif' shape-rendering="crispEdges"><rect x="538.0" y="129.0" width="430.5" height="15.0" fill="#030357" />
<rect x="916.5" y="144.0" width="52.0" height="340.0" fill="#030357" />
<rect x="538.0" y="305.0" width="430.5" height="16.2" fill="#030357" />
<rect x="538.0" y="387.5" width="430.5" height="18.5" fill="#030357" />
<rect x="538.0" y="486.0" width="379.0" height="16.3" fill="#030357" />
<rect x="917.0" y="484.0" width="51.5" height="18.3" fill="#ffffff" />
<text x="878.0" y="141.0" fill="#28bc30" font-size="12" text-anchor="start" textLength="35.0" lengthAdjust="spacingAndGlyphs" >60 mins</text>
<rect x="953.5" y="130.5" width="15.0" height="5.5" fill="#e8e8e8" />
<rect x="953.5" y="130.5" width="15.0" height="2.0" fill="#ffffff" />
<line x1="953.5" y1="136.0" x2="968.5" y2="136.0" stroke="#888" stroke-width="1"/>
<rect x="538.0" y="322.7" width="374.0" height="13.2" fill="#005a00" />
<rect x="538.0" y="372.0" width="374.0" height="14.0" fill="#5a0000" />
<rect x="538.0" y="407.0" width="374.0" height="13.6" fill="#005a00" />
<rect x="538.0" y="464.0" width="374.0" height="15.0" fill="#5a0000" />
<line x1="587.6" y1="144.0" x2="587.6" y2="305.0" stroke="#6c6c6c" stroke-width="1" stroke-dasharray="1,1.5"/>
<line x1="641.6" y1="144.0" x2="641.6" y2="305.0" stroke="#6c6c6c" stroke-width="1" stroke-dasharray="1,1.5"/>
<line x1="695.6" y1="144.0" x2="695.6" y2="305.0" stroke="#6c6c6c" stroke-width="1" stroke-dasharray="1,1.5"/>
<line x1="749.6" y1="144.0" x2="749.6" y2="305.0" stroke="#6c6c6c" stroke-width="1" stroke-dasharray="1,1.5"/>
<line x1="803.6" y1="144.0" x2="803.6" y2="305.0" stroke="#6c6c6c" stroke-width="1" stroke-dasharray="1,1.5"/>
<line x1="857.6" y1="144.0" x2="857.6" y2="305.0" stroke="#6c6c6c" stroke-width="1" stroke-dasharray="1,1.5"/>
<line x1="893.6" y1="144.0" x2="893.6" y2="305.0" stroke="#6c6c6c" stroke-width="1" stroke-dasharray="1,1.5"/>
<line x1="587.6" y1="321.2" x2="587.6" y2="387.5" stroke="#6c6c6c" stroke-width="1" stroke-dasharray="1,1.5"/>
<line x1="641.6" y1="321.2" x2="641.6" y2="387.5" stroke="#6c6c6c" stroke-width="1" stroke-dasharray="1,1.5"/>
<line x1="695.6" y1="321.2" x2="695.6" y2="387.5" stroke="#6c6c6c" stroke-width="1" stroke-dasharray="1,1.5"/>
<line x1="749.6" y1="321.2" x2="749.6" y2="387.5" stroke="#6c6c6c" stroke-width="1" stroke-dasharray="1,1.5"/>
<line x1="803.6" y1="321.2" x2="803.6" y2="387.5" stroke="#6c6c6c" stroke-width="1" stroke-dasharray="1,1.5"/>
<line x1="857.6" y1="321.2" x2="857.6" y2="387.5" stroke="#6c6c6c" stroke-width="1" stroke-dasharray="1,1.5"/>
<line x1="893.6" y1="321.2" x2="893.6" y2="387.5" stroke="#6c6c6c" stroke-width="1" stroke-dasharray="1,1.5"/>
<line x1="587.6" y1="406.0" x2="587.6" y2="482.0" stroke="#6c6c6c" stroke-width="1" stroke-dasharray="1,1.5"/>
<line x1="641.6" y1="406.0" x2="641.6" y2="482.0" stroke="#6c6c6c" stroke-width="1" stroke-dasharray="1,1.5"/>
<line x1="695.6" y1="406.0" x2="695.6" y2="482.0" stroke="#6c6c6c" stroke-width="1" stroke-dasharray="1,1.5"/>
<line x1="749.6" y1="406.0" x2="749.6" y2="482.0" stroke="#6c6c6c" stroke-width="1" stroke-dasharray="1,1.5"/>
<line x1="803.6" y1="406.0" x2="803.6" y2="482.0" stroke="#6c6c6c" stroke-width="1" stroke-dasharray="1,1.5"/>
<line x1="857.6" y1="406.0" x2="857.6" y2="482.0" stroke="#6c6c6c" stroke-width="1" stroke-dasharray="1,1.5"/>
<line x1="893.6" y1="406.0" x2="893.6" y2="482.0" stroke="#6c6c6c" stroke-width="1" stroke-dasharray="1,1.5"/>
<line x1="538.0" y1="167.4" x2="917.0" y2="167.4" stroke="#6a6a6a" stroke-width="1" stroke-dasharray="1,1.5"/>
<line x1="538.0" y1="194.4" x2="917.0" y2="194.4" stroke="#6a6a6a" stroke-width="1" stroke-dasharray="1,1.5"/>
<line x1="538.0" y1="221.4" x2="917.0" y2="221.4" stroke="#6a6a6a" stroke-width="1" stroke-dasharray="1,1.5"/>
<line x1="538.0" y1="248.4" x2="917.0" y2="248.4" stroke="#6a6a6a" stroke-width="1" stroke-dasharray="1,1.5"/>
<line x1="538.0" y1="274.6" x2="917.0" y2="274.6" stroke="#6a6a6a" stroke-width="1" stroke-dasharray="1,1.5"/>
<line x1="538.0" y1="301.6" x2="917.0" y2="301.6" stroke="#6a6a6a" stroke-width="1" stroke-dasharray="1,1.5"/>
<line x1="538.0" y1="323.5" x2="917.0" y2="323.5" stroke="#686868" stroke-width="1" stroke-dasharray="1,1.5"/>
<line x1="538.0" y1="354.6" x2="917.0" y2="354.6" stroke="#686868" stroke-width="1" stroke-dasharray="1,1.5"/>
<line x1="538.0" y1="386.3" x2="917.0" y2="386.3" stroke="#686868" stroke-width="1" stroke-dasharray="1,1.5"/>
<line x1="538.0" y1="407.5" x2="917.0" y2="407.5" stroke="#686868" stroke-width="1" stroke-dasharray="1,1.5"/>
<line x1="538.0" y1="443.4" x2="917.0" y2="443.4" stroke="#686868" stroke-width="1" stroke-dasharray="1,1.5"/>
<line x1="538.0" y1="479.3" x2="917.0" y2="479.3" stroke="#686868" stroke-width="1" stroke-dasharray="1,1.5"/>
<line x1="542.0" y1="338.4" x2="912.0" y2="338.4" stroke="#4a4a4a" stroke-width="1" stroke-dasharray="3,12"/>
<line x1="542.0" y1="370.4" x2="912.0" y2="370.4" stroke="#4a4a4a" stroke-width="1" stroke-dasharray="3,12"/>
<line x1="542.0" y1="425.0" x2="912.0" y2="425.0" stroke="#4a4a4a" stroke-width="1" stroke-dasharray="3,12"/>
<line x1="542.0" y1="461.4" x2="912.0" y2="461.4" stroke="#4a4a4a" stroke-width="1" stroke-dasharray="3,12"/>
<polyline points="538.0,172.6 548.0,172.0 660.0,169.4 770.0,167.4 910.0,165.6" fill="none" stroke="#e02020" stroke-width="1.2" stroke-linejoin="round" shape-rendering="auto"/>
<polyline points="580.0,227.6 760.0,215.0 910.0,204.6" fill="none" stroke="#e02020" stroke-width="1.2" stroke-linejoin="round" shape-rendering="auto"/>
<line x1="538.4" y1="190.0" x2="538.4" y2="209.0" stroke="#22c822" stroke-width="1.2" shape-rendering="auto"/>
<rect x="536.1" y="192.0" width="4.6" height="10.0" fill="#22c822" shape-rendering="auto"/>
<line x1="544.4" y1="173.0" x2="544.4" y2="196.6" stroke="#ff2222" stroke-width="1.2" shape-rendering="auto"/>
<rect x="542.1" y="192.0" width="4.6" height="4.6" fill="#ff2222" shape-rendering="auto"/>
<line x1="550.4" y1="187.0" x2="550.4" y2="205.0" stroke="#ff2222" stroke-width="1.2" shape-rendering="auto"/>
<rect x="548.1" y="196.0" width="4.6" height="3.0" fill="#ff2222" shape-rendering="auto"/>
<line x1="556.4" y1="195.0" x2="556.4" y2="217.0" stroke="#ff2222" stroke-width="1.2" shape-rendering="auto"/>
<rect x="554.1" y="199.0" width="4.6" height="12.0" fill="#ff2222" shape-rendering="auto"/>
<line x1="562.4" y1="204.0" x2="562.4" y2="219.0" stroke="#22c822" stroke-width="1.2" shape-rendering="auto"/>
<rect x="560.1" y="205.0" width="4.6" height="6.0" fill="#22c822" shape-rendering="auto"/>
<line x1="568.4" y1="199.4" x2="568.4" y2="214.0" stroke="#ff2222" stroke-width="1.2" shape-rendering="auto"/>
<rect x="566.1" y="205.0" width="4.6" height="7.0" fill="#ff2222" shape-rendering="auto"/>
<line x1="574.4" y1="203.0" x2="574.4" y2="218.0" stroke="#ff2222" stroke-width="1.2" shape-rendering="auto"/>
<rect x="572.1" y="212.0" width="4.6" height="5.4" fill="#ff2222" shape-rendering="auto"/>
<line x1="580.4" y1="216.0" x2="580.4" y2="225.0" stroke="#22c822" stroke-width="1.2" shape-rendering="auto"/>
<rect x="578.1" y="217.0" width="4.6" height="1.2" fill="#22c822" shape-rendering="auto"/>
<line x1="586.4" y1="189.0" x2="586.4" y2="212.0" stroke="#22c822" stroke-width="1.2" shape-rendering="auto"/>
<rect x="584.1" y="200.0" width="4.6" height="12.0" fill="#22c822" shape-rendering="auto"/>
<line x1="592.4" y1="187.4" x2="592.4" y2="200.0" stroke="#22c822" stroke-width="1.2" shape-rendering="auto"/>
<rect x="590.1" y="188.0" width="4.6" height="12.0" fill="#22c822" shape-rendering="auto"/>
<line x1="598.4" y1="187.0" x2="598.4" y2="200.0" stroke="#ff2222" stroke-width="1.2" shape-rendering="auto"/>
<rect x="596.1" y="188.0" width="4.6" height="2.0" fill="#ff2222" shape-rendering="auto"/>
<line x1="604.4" y1="189.0" x2="604.4" y2="198.0" stroke="#ff2222" stroke-width="1.2" shape-rendering="auto"/>
<rect x="602.1" y="190.0" width="4.6" height="7.4" fill="#ff2222" shape-rendering="auto"/>
<line x1="610.4" y1="191.0" x2="610.4" y2="199.0" stroke="#22c822" stroke-width="1.2" shape-rendering="auto"/>
<rect x="608.1" y="194.0" width="4.6" height="3.0" fill="#22c822" shape-rendering="auto"/>
<line x1="616.4" y1="191.0" x2="616.4" y2="207.0" stroke="#ff2222" stroke-width="1.2" shape-rendering="auto"/>
<rect x="614.1" y="194.0" width="4.6" height="9.0" fill="#ff2222" shape-rendering="auto"/>
<line x1="622.4" y1="195.0" x2="622.4" y2="204.0" stroke="#22c822" stroke-width="1.2" shape-rendering="auto"/>
<rect x="620.1" y="197.0" width="4.6" height="6.4" fill="#22c822" shape-rendering="auto"/>
<line x1="628.4" y1="195.0" x2="628.4" y2="209.0" stroke="#ff2222" stroke-width="1.2" shape-rendering="auto"/>
<rect x="626.1" y="197.0" width="4.6" height="6.4" fill="#ff2222" shape-rendering="auto"/>
<line x1="634.4" y1="199.0" x2="634.4" y2="204.0" stroke="#22c822" stroke-width="1.2" shape-rendering="auto"/>
<rect x="632.1" y="200.0" width="4.6" height="3.0" fill="#22c822" shape-rendering="auto"/>
<line x1="640.4" y1="183.0" x2="640.4" y2="195.0" stroke="#ff2222" stroke-width="1.2" shape-rendering="auto"/>
<rect x="638.1" y="190.0" width="4.6" height="4.6" fill="#ff2222" shape-rendering="auto"/>
<line x1="646.4" y1="192.0" x2="646.4" y2="198.0" stroke="#22c822" stroke-width="1.2" shape-rendering="auto"/>
<rect x="644.1" y="192.6" width="4.6" height="2.0" fill="#22c822" shape-rendering="auto"/>
<line x1="652.4" y1="189.0" x2="652.4" y2="193.0" stroke="#22c822" stroke-width="1.2" shape-rendering="auto"/>
<rect x="650.1" y="190.0" width="4.6" height="2.0" fill="#22c822" shape-rendering="auto"/>
<line x1="658.4" y1="188.0" x2="658.4" y2="191.4" stroke="#ff2222" stroke-width="1.2" shape-rendering="auto"/>
<rect x="656.1" y="190.0" width="4.6" height="1.2" fill="#ff2222" shape-rendering="auto"/>
<line x1="664.4" y1="187.4" x2="664.4" y2="192.0" stroke="#ff2222" stroke-width="1.2" shape-rendering="auto"/>
<rect x="662.1" y="190.0" width="4.6" height="1.2" fill="#ff2222" shape-rendering="auto"/>
<line x1="670.4" y1="190.0" x2="670.4" y2="197.0" stroke="#ff2222" stroke-width="1.2" shape-rendering="auto"/>
<rect x="668.1" y="191.0" width="4.6" height="3.6" fill="#ff2222" shape-rendering="auto"/>
<line x1="676.4" y1="191.0" x2="676.4" y2="197.0" stroke="#22c822" stroke-width="1.2" shape-rendering="auto"/>
<rect x="674.1" y="191.4" width="4.6" height="3.2" fill="#22c822" shape-rendering="auto"/>
<line x1="682.4" y1="190.0" x2="682.4" y2="194.6" stroke="#ff2222" stroke-width="1.2" shape-rendering="auto"/>
<rect x="680.1" y="191.0" width="4.6" height="1.6" fill="#ff2222" shape-rendering="auto"/>
<line x1="688.4" y1="184.6" x2="688.4" y2="193.0" stroke="#22c822" stroke-width="1.2" shape-rendering="auto"/>
<rect x="686.1" y="185.0" width="4.6" height="7.0" fill="#22c822" shape-rendering="auto"/>
<line x1="694.4" y1="182.0" x2="694.4" y2="188.0" stroke="#22c822" stroke-width="1.2" shape-rendering="auto"/>
<rect x="692.1" y="182.4" width="4.6" height="2.6" fill="#22c822" shape-rendering="auto"/>
<line x1="700.4" y1="176.6" x2="700.4" y2="182.4" stroke="#22c822" stroke-width="1.2" shape-rendering="auto"/>
<rect x="698.1" y="177.0" width="4.6" height="5.0" fill="#22c822" shape-rendering="auto"/>
<line x1="706.4" y1="172.0" x2="706.4" y2="178.0" stroke="#22c822" stroke-width="1.2" shape-rendering="auto"/>
<rect x="704.1" y="172.6" width="4.6" height="4.4" fill="#22c822" shape-rendering="auto"/>
<line x1="712.4" y1="171.0" x2="712.4" y2="176.0" stroke="#ff2222" stroke-width="1.2" shape-rendering="auto"/>
<rect x="710.1" y="172.6" width="4.6" height="2.0" fill="#ff2222" shape-rendering="auto"/>
<line x1="718.4" y1="174.6" x2="718.4" y2="182.0" stroke="#ff2222" stroke-width="1.2" shape-rendering="auto"/>
<rect x="716.1" y="175.0" width="4.6" height="6.0" fill="#ff2222" shape-rendering="auto"/>
<line x1="724.4" y1="179.4" x2="724.4" y2="183.4" stroke="#ff2222" stroke-width="1.2" shape-rendering="auto"/>
<rect x="722.1" y="181.0" width="4.6" height="1.4" fill="#ff2222" shape-rendering="auto"/>
<line x1="730.4" y1="181.4" x2="730.4" y2="186.0" stroke="#ff2222" stroke-width="1.2" shape-rendering="auto"/>
<rect x="728.1" y="182.0" width="4.6" height="3.0" fill="#ff2222" shape-rendering="auto"/>
<line x1="736.4" y1="182.4" x2="736.4" y2="187.0" stroke="#ff2222" stroke-width="1.2" shape-rendering="auto"/>
<rect x="734.1" y="184.4" width="4.6" height="1.2" fill="#ff2222" shape-rendering="auto"/>
<line x1="742.4" y1="183.0" x2="742.4" y2="187.0" stroke="#22c822" stroke-width="1.2" shape-rendering="auto"/>
<rect x="740.1" y="184.4" width="4.6" height="1.2" fill="#22c822" shape-rendering="auto"/>
<line x1="748.4" y1="183.0" x2="748.4" y2="201.0" stroke="#ff2222" stroke-width="1.2" shape-rendering="auto"/>
<rect x="746.1" y="186.0" width="4.6" height="7.0" fill="#ff2222" shape-rendering="auto"/>
<line x1="754.4" y1="182.0" x2="754.4" y2="194.0" stroke="#22c822" stroke-width="1.2" shape-rendering="auto"/>
<rect x="752.1" y="183.0" width="4.6" height="10.0" fill="#22c822" shape-rendering="auto"/>
<line x1="760.4" y1="175.0" x2="760.4" y2="184.6" stroke="#22c822" stroke-width="1.2" shape-rendering="auto"/>
<rect x="758.1" y="176.0" width="4.6" height="7.4" fill="#22c822" shape-rendering="auto"/>
<line x1="766.4" y1="176.0" x2="766.4" y2="182.0" stroke="#ff2222" stroke-width="1.2" shape-rendering="auto"/>
<rect x="764.1" y="177.4" width="4.6" height="1.2" fill="#ff2222" shape-rendering="auto"/>
<line x1="772.4" y1="174.0" x2="772.4" y2="181.0" stroke="#ff2222" stroke-width="1.2" shape-rendering="auto"/>
<rect x="770.1" y="178.0" width="4.6" height="1.2" fill="#ff2222" shape-rendering="auto"/>
<line x1="778.4" y1="174.6" x2="778.4" y2="183.0" stroke="#22c822" stroke-width="1.2" shape-rendering="auto"/>
<rect x="776.1" y="177.0" width="4.6" height="2.0" fill="#22c822" shape-rendering="auto"/>
<line x1="784.4" y1="174.0" x2="784.4" y2="194.0" stroke="#ff2222" stroke-width="1.2" shape-rendering="auto"/>
<rect x="782.1" y="176.6" width="4.6" height="16.4" fill="#ff2222" shape-rendering="auto"/>
<line x1="790.4" y1="188.6" x2="790.4" y2="203.0" stroke="#ff2222" stroke-width="1.2" shape-rendering="auto"/>
<rect x="788.1" y="193.0" width="4.6" height="7.0" fill="#ff2222" shape-rendering="auto"/>
<line x1="796.4" y1="198.0" x2="796.4" y2="207.0" stroke="#ff2222" stroke-width="1.2" shape-rendering="auto"/>
<rect x="794.1" y="200.0" width="4.6" height="7.0" fill="#ff2222" shape-rendering="auto"/>
<line x1="802.4" y1="199.0" x2="802.4" y2="204.0" stroke="#22c822" stroke-width="1.2" shape-rendering="auto"/>
<rect x="800.1" y="200.0" width="4.6" height="2.6" fill="#22c822" shape-rendering="auto"/>
<line x1="808.4" y1="199.0" x2="808.4" y2="210.0" stroke="#ff2222" stroke-width="1.2" shape-rendering="auto"/>
<rect x="806.1" y="200.0" width="4.6" height="2.6" fill="#ff2222" shape-rendering="auto"/>
<line x1="814.4" y1="202.0" x2="814.4" y2="207.0" stroke="#22c822" stroke-width="1.2" shape-rendering="auto"/>
<rect x="812.1" y="203.0" width="4.6" height="1.2" fill="#22c822" shape-rendering="auto"/>
<line x1="820.4" y1="202.0" x2="820.4" y2="208.0" stroke="#ff2222" stroke-width="1.2" shape-rendering="auto"/>
<rect x="818.1" y="203.0" width="4.6" height="4.0" fill="#ff2222" shape-rendering="auto"/>
<line x1="826.4" y1="199.0" x2="826.4" y2="208.0" stroke="#22c822" stroke-width="1.2" shape-rendering="auto"/>
<rect x="824.1" y="200.0" width="4.6" height="7.0" fill="#22c822" shape-rendering="auto"/>
<line x1="832.4" y1="199.0" x2="832.4" y2="203.0" stroke="#22c822" stroke-width="1.2" shape-rendering="auto"/>
<rect x="830.1" y="200.0" width="4.6" height="1.4" fill="#22c822" shape-rendering="auto"/>
<line x1="838.4" y1="197.4" x2="838.4" y2="203.0" stroke="#22c822" stroke-width="1.2" shape-rendering="auto"/>
<rect x="836.1" y="199.0" width="4.6" height="1.6" fill="#22c822" shape-rendering="auto"/>
<line x1="844.4" y1="190.0" x2="844.4" y2="200.0" stroke="#22c822" stroke-width="1.2" shape-rendering="auto"/>
<rect x="842.1" y="193.4" width="4.6" height="5.6" fill="#22c822" shape-rendering="auto"/>
<line x1="850.4" y1="186.0" x2="850.4" y2="197.4" stroke="#22c822" stroke-width="1.2" shape-rendering="auto"/>
<rect x="848.1" y="187.0" width="4.6" height="6.0" fill="#22c822" shape-rendering="auto"/>
<line x1="856.4" y1="178.0" x2="856.4" y2="195.0" stroke="#ff2222" stroke-width="1.2" shape-rendering="auto"/>
<rect x="854.1" y="182.0" width="4.6" height="1.4" fill="#ff2222" shape-rendering="auto"/>
<line x1="862.4" y1="175.0" x2="862.4" y2="185.0" stroke="#22c822" stroke-width="1.2" shape-rendering="auto"/>
<rect x="860.1" y="177.0" width="4.6" height="6.0" fill="#22c822" shape-rendering="auto"/>
<line x1="868.4" y1="176.0" x2="868.4" y2="183.0" stroke="#ff2222" stroke-width="1.2" shape-rendering="auto"/>
<rect x="866.1" y="177.0" width="4.6" height="3.0" fill="#ff2222" shape-rendering="auto"/>
<line x1="874.4" y1="177.0" x2="874.4" y2="181.0" stroke="#22c822" stroke-width="1.2" shape-rendering="auto"/>
<rect x="872.1" y="178.0" width="4.6" height="1.4" fill="#22c822" shape-rendering="auto"/>
<line x1="880.4" y1="169.4" x2="880.4" y2="179.0" stroke="#22c822" stroke-width="1.2" shape-rendering="auto"/>
<rect x="878.1" y="170.0" width="4.6" height="8.0" fill="#22c822" shape-rendering="auto"/>
<line x1="886.4" y1="167.4" x2="886.4" y2="171.0" stroke="#22c822" stroke-width="1.2" shape-rendering="auto"/>
<rect x="884.1" y="168.6" width="4.6" height="1.2" fill="#22c822" shape-rendering="auto"/>
<line x1="892.4" y1="149.0" x2="892.4" y2="170.6" stroke="#22c822" stroke-width="1.2" shape-rendering="auto"/>
<rect x="890.1" y="150.0" width="4.6" height="20.0" fill="#22c822" shape-rendering="auto"/>
<line x1="898.4" y1="145.0" x2="898.4" y2="151.0" stroke="#22c822" stroke-width="1.2" shape-rendering="auto"/>
<rect x="896.1" y="146.0" width="4.6" height="4.0" fill="#22c822" shape-rendering="auto"/>
<polyline points="538.0,326.0 552.0,335.0 556.0,340.0 580.0,354.0 598.0,342.6 606.0,346.0 616.0,354.6 630.0,354.6 658.0,334.6 670.0,341.0 682.0,346.6 700.0,326.0 706.0,323.4 716.0,331.0 732.0,352.0 749.0,361.4 756.0,357.0 762.0,351.0 770.0,340.0 778.0,338.0 784.0,344.0 792.0,365.0 798.0,379.0 804.0,379.0 814.0,373.4 820.0,376.0 830.0,374.0 841.0,365.0 850.0,355.0 860.0,341.0 872.0,331.0 886.0,326.5 899.0,324.0" fill="none" stroke="#ffa43c" stroke-width="1" stroke-linejoin="round" shape-rendering="auto"/>
<polyline points="538.0,326.0 550.0,331.0 566.0,342.0 584.0,352.0 594.0,349.0 604.0,344.6 616.0,350.0 628.0,354.6 642.0,349.0 660.0,337.4 670.0,337.4 684.0,344.4 694.0,340.0 710.0,326.0 718.0,328.0 730.0,342.0 746.0,357.0 754.0,359.0 762.0,356.0 772.0,345.0 780.0,338.5 786.0,341.0 799.0,369.0 808.0,378.6 830.0,374.0 846.0,365.0 856.0,352.0 866.0,339.0 876.0,331.0 888.0,326.5 899.0,324.0" fill="none" stroke="#4ae6e6" stroke-width="1" stroke-linejoin="round" shape-rendering="auto"/>
<polyline points="538.0,409.0 554.0,422.0 580.0,441.0 586.0,440.0 598.0,430.4 606.0,434.0 642.0,475.0 647.0,476.6 666.0,471.0 690.0,420.0 696.0,413.0 706.0,409.4 713.0,413.0 736.0,457.0 749.0,471.0 754.0,473.0 766.0,453.0 779.0,445.6 788.0,467.0 799.0,476.4 814.0,476.4 820.0,478.6 832.0,474.0 842.0,464.0 852.0,445.0 864.0,421.0 872.0,413.0 886.0,408.0 899.0,407.0" fill="none" stroke="#4ae6e6" stroke-width="1" stroke-linejoin="round" shape-rendering="auto"/>
<line x1="917.0" y1="144.0" x2="917.0" y2="305.0" stroke="#f0e0a0" stroke-width="1"/>
<line x1="917.0" y1="321.2" x2="917.0" y2="387.5" stroke="#f0e0a0" stroke-width="1"/>
<line x1="917.0" y1="406.0" x2="917.0" y2="482.0" stroke="#f0e0a0" stroke-width="1"/>
<line x1="913.0" y1="146.0" x2="917.0" y2="146.0" stroke="#f0e0a0" stroke-width="1"/>
<line x1="915.0" y1="148.7" x2="917.0" y2="148.7" stroke="#f0e0a0" stroke-width="1"/>
<line x1="915.0" y1="151.4" x2="917.0" y2="151.4" stroke="#f0e0a0" stroke-width="1"/>
<line x1="915.0" y1="154.1" x2="917.0" y2="154.1" stroke="#f0e0a0" stroke-width="1"/>
<line x1="915.0" y1="156.8" x2="917.0" y2="156.8" stroke="#f0e0a0" stroke-width="1"/>
<line x1="913.0" y1="159.5" x2="917.0" y2="159.5" stroke="#f0e0a0" stroke-width="1"/>
<line x1="915.0" y1="162.2" x2="917.0" y2="162.2" stroke="#f0e0a0" stroke-width="1"/>
<line x1="915.0" y1="164.9" x2="917.0" y2="164.9" stroke="#f0e0a0" stroke-width="1"/>
<line x1="915.0" y1="167.6" x2="917.0" y2="167.6" stroke="#f0e0a0" stroke-width="1"/>
<line x1="915.0" y1="170.3" x2="917.0" y2="170.3" stroke="#f0e0a0" stroke-width="1"/>
<line x1="913.0" y1="173.0" x2="917.0" y2="173.0" stroke="#f0e0a0" stroke-width="1"/>
<line x1="915.0" y1="175.7" x2="917.0" y2="175.7" stroke="#f0e0a0" stroke-width="1"/>
<line x1="915.0" y1="178.4" x2="917.0" y2="178.4" stroke="#f0e0a0" stroke-width="1"/>
<line x1="915.0" y1="181.1" x2="917.0" y2="181.1" stroke="#f0e0a0" stroke-width="1"/>
<line x1="915.0" y1="183.8" x2="917.0" y2="183.8" stroke="#f0e0a0" stroke-width="1"/>
<line x1="913.0" y1="186.5" x2="917.0" y2="186.5" stroke="#f0e0a0" stroke-width="1"/>
<line x1="915.0" y1="189.2" x2="917.0" y2="189.2" stroke="#f0e0a0" stroke-width="1"/>
<line x1="915.0" y1="191.9" x2="917.0" y2="191.9" stroke="#f0e0a0" stroke-width="1"/>
<line x1="915.0" y1="194.6" x2="917.0" y2="194.6" stroke="#f0e0a0" stroke-width="1"/>
<line x1="915.0" y1="197.3" x2="917.0" y2="197.3" stroke="#f0e0a0" stroke-width="1"/>
<line x1="913.0" y1="200.0" x2="917.0" y2="200.0" stroke="#f0e0a0" stroke-width="1"/>
<line x1="915.0" y1="202.7" x2="917.0" y2="202.7" stroke="#f0e0a0" stroke-width="1"/>
<line x1="915.0" y1="205.4" x2="917.0" y2="205.4" stroke="#f0e0a0" stroke-width="1"/>
<line x1="915.0" y1="208.1" x2="917.0" y2="208.1" stroke="#f0e0a0" stroke-width="1"/>
<line x1="915.0" y1="210.8" x2="917.0" y2="210.8" stroke="#f0e0a0" stroke-width="1"/>
<line x1="913.0" y1="213.5" x2="917.0" y2="213.5" stroke="#f0e0a0" stroke-width="1"/>
<line x1="915.0" y1="216.2" x2="917.0" y2="216.2" stroke="#f0e0a0" stroke-width="1"/>
<line x1="915.0" y1="218.9" x2="917.0" y2="218.9" stroke="#f0e0a0" stroke-width="1"/>
<line x1="915.0" y1="221.6" x2="917.0" y2="221.6" stroke="#f0e0a0" stroke-width="1"/>
<line x1="915.0" y1="224.3" x2="917.0" y2="224.3" stroke="#f0e0a0" stroke-width="1"/>
<line x1="913.0" y1="227.0" x2="917.0" y2="227.0" stroke="#f0e0a0" stroke-width="1"/>
<line x1="915.0" y1="229.7" x2="917.0" y2="229.7" stroke="#f0e0a0" stroke-width="1"/>
<line x1="915.0" y1="232.4" x2="917.0" y2="232.4" stroke="#f0e0a0" stroke-width="1"/>
<line x1="915.0" y1="235.1" x2="917.0" y2="235.1" stroke="#f0e0a0" stroke-width="1"/>
<line x1="915.0" y1="237.8" x2="917.0" y2="237.8" stroke="#f0e0a0" stroke-width="1"/>
<line x1="913.0" y1="240.5" x2="917.0" y2="240.5" stroke="#f0e0a0" stroke-width="1"/>
<line x1="915.0" y1="243.2" x2="917.0" y2="243.2" stroke="#f0e0a0" stroke-width="1"/>
<line x1="915.0" y1="245.9" x2="917.0" y2="245.9" stroke="#f0e0a0" stroke-width="1"/>
<line x1="915.0" y1="248.6" x2="917.0" y2="248.6" stroke="#f0e0a0" stroke-width="1"/>
<line x1="915.0" y1="251.3" x2="917.0" y2="251.3" stroke="#f0e0a0" stroke-width="1"/>
<line x1="913.0" y1="254.0" x2="917.0" y2="254.0" stroke="#f0e0a0" stroke-width="1"/>
<line x1="915.0" y1="256.7" x2="917.0" y2="256.7" stroke="#f0e0a0" stroke-width="1"/>
<line x1="915.0" y1="259.4" x2="917.0" y2="259.4" stroke="#f0e0a0" stroke-width="1"/>
<line x1="915.0" y1="262.1" x2="917.0" y2="262.1" stroke="#f0e0a0" stroke-width="1"/>
<line x1="915.0" y1="264.8" x2="917.0" y2="264.8" stroke="#f0e0a0" stroke-width="1"/>
<line x1="913.0" y1="267.5" x2="917.0" y2="267.5" stroke="#f0e0a0" stroke-width="1"/>
<line x1="915.0" y1="270.2" x2="917.0" y2="270.2" stroke="#f0e0a0" stroke-width="1"/>
<line x1="915.0" y1="272.9" x2="917.0" y2="272.9" stroke="#f0e0a0" stroke-width="1"/>
<line x1="915.0" y1="275.6" x2="917.0" y2="275.6" stroke="#f0e0a0" stroke-width="1"/>
<line x1="915.0" y1="278.3" x2="917.0" y2="278.3" stroke="#f0e0a0" stroke-width="1"/>
<line x1="913.0" y1="281.0" x2="917.0" y2="281.0" stroke="#f0e0a0" stroke-width="1"/>
<line x1="915.0" y1="283.7" x2="917.0" y2="283.7" stroke="#f0e0a0" stroke-width="1"/>
<line x1="915.0" y1="286.4" x2="917.0" y2="286.4" stroke="#f0e0a0" stroke-width="1"/>
<line x1="915.0" y1="289.1" x2="917.0" y2="289.1" stroke="#f0e0a0" stroke-width="1"/>
<line x1="915.0" y1="291.8" x2="917.0" y2="291.8" stroke="#f0e0a0" stroke-width="1"/>
<line x1="913.0" y1="294.5" x2="917.0" y2="294.5" stroke="#f0e0a0" stroke-width="1"/>
<line x1="915.0" y1="297.2" x2="917.0" y2="297.2" stroke="#f0e0a0" stroke-width="1"/>
<line x1="915.0" y1="299.9" x2="917.0" y2="299.9" stroke="#f0e0a0" stroke-width="1"/>
<line x1="915.0" y1="302.6" x2="917.0" y2="302.6" stroke="#f0e0a0" stroke-width="1"/>
<line x1="913.0" y1="324.0" x2="917.0" y2="324.0" stroke="#f0e0a0" stroke-width="1"/>
<line x1="915.0" y1="327.1" x2="917.0" y2="327.1" stroke="#f0e0a0" stroke-width="1"/>
<line x1="915.0" y1="330.2" x2="917.0" y2="330.2" stroke="#f0e0a0" stroke-width="1"/>
<line x1="915.0" y1="333.3" x2="917.0" y2="333.3" stroke="#f0e0a0" stroke-width="1"/>
<line x1="915.0" y1="336.4" x2="917.0" y2="336.4" stroke="#f0e0a0" stroke-width="1"/>
<line x1="913.0" y1="339.5" x2="917.0" y2="339.5" stroke="#f0e0a0" stroke-width="1"/>
<line x1="915.0" y1="342.6" x2="917.0" y2="342.6" stroke="#f0e0a0" stroke-width="1"/>
<line x1="915.0" y1="345.7" x2="917.0" y2="345.7" stroke="#f0e0a0" stroke-width="1"/>
<line x1="915.0" y1="348.8" x2="917.0" y2="348.8" stroke="#f0e0a0" stroke-width="1"/>
<line x1="915.0" y1="351.9" x2="917.0" y2="351.9" stroke="#f0e0a0" stroke-width="1"/>
<line x1="913.0" y1="355.0" x2="917.0" y2="355.0" stroke="#f0e0a0" stroke-width="1"/>
<line x1="915.0" y1="358.1" x2="917.0" y2="358.1" stroke="#f0e0a0" stroke-width="1"/>
<line x1="915.0" y1="361.2" x2="917.0" y2="361.2" stroke="#f0e0a0" stroke-width="1"/>
<line x1="915.0" y1="364.3" x2="917.0" y2="364.3" stroke="#f0e0a0" stroke-width="1"/>
<line x1="915.0" y1="367.4" x2="917.0" y2="367.4" stroke="#f0e0a0" stroke-width="1"/>
<line x1="913.0" y1="370.5" x2="917.0" y2="370.5" stroke="#f0e0a0" stroke-width="1"/>
<line x1="915.0" y1="373.6" x2="917.0" y2="373.6" stroke="#f0e0a0" stroke-width="1"/>
<line x1="915.0" y1="376.7" x2="917.0" y2="376.7" stroke="#f0e0a0" stroke-width="1"/>
<line x1="915.0" y1="379.8" x2="917.0" y2="379.8" stroke="#f0e0a0" stroke-width="1"/>
<line x1="915.0" y1="382.9" x2="917.0" y2="382.9" stroke="#f0e0a0" stroke-width="1"/>
<line x1="913.0" y1="386.0" x2="917.0" y2="386.0" stroke="#f0e0a0" stroke-width="1"/>
<line x1="913.0" y1="408.0" x2="917.0" y2="408.0" stroke="#f0e0a0" stroke-width="1"/>
<line x1="915.0" y1="411.6" x2="917.0" y2="411.6" stroke="#f0e0a0" stroke-width="1"/>
<line x1="915.0" y1="415.2" x2="917.0" y2="415.2" stroke="#f0e0a0" stroke-width="1"/>
<line x1="915.0" y1="418.8" x2="917.0" y2="418.8" stroke="#f0e0a0" stroke-width="1"/>
<line x1="915.0" y1="422.4" x2="917.0" y2="422.4" stroke="#f0e0a0" stroke-width="1"/>
<line x1="913.0" y1="426.0" x2="917.0" y2="426.0" stroke="#f0e0a0" stroke-width="1"/>
<line x1="915.0" y1="429.6" x2="917.0" y2="429.6" stroke="#f0e0a0" stroke-width="1"/>
<line x1="915.0" y1="433.2" x2="917.0" y2="433.2" stroke="#f0e0a0" stroke-width="1"/>
<line x1="915.0" y1="436.8" x2="917.0" y2="436.8" stroke="#f0e0a0" stroke-width="1"/>
<line x1="915.0" y1="440.4" x2="917.0" y2="440.4" stroke="#f0e0a0" stroke-width="1"/>
<line x1="913.0" y1="444.0" x2="917.0" y2="444.0" stroke="#f0e0a0" stroke-width="1"/>
<line x1="915.0" y1="447.6" x2="917.0" y2="447.6" stroke="#f0e0a0" stroke-width="1"/>
<line x1="915.0" y1="451.2" x2="917.0" y2="451.2" stroke="#f0e0a0" stroke-width="1"/>
<line x1="915.0" y1="454.8" x2="917.0" y2="454.8" stroke="#f0e0a0" stroke-width="1"/>
<line x1="915.0" y1="458.4" x2="917.0" y2="458.4" stroke="#f0e0a0" stroke-width="1"/>
<line x1="913.0" y1="462.0" x2="917.0" y2="462.0" stroke="#f0e0a0" stroke-width="1"/>
<line x1="915.0" y1="465.6" x2="917.0" y2="465.6" stroke="#f0e0a0" stroke-width="1"/>
<line x1="915.0" y1="469.2" x2="917.0" y2="469.2" stroke="#f0e0a0" stroke-width="1"/>
<line x1="915.0" y1="472.8" x2="917.0" y2="472.8" stroke="#f0e0a0" stroke-width="1"/>
<line x1="915.0" y1="476.4" x2="917.0" y2="476.4" stroke="#f0e0a0" stroke-width="1"/>
<line x1="913.0" y1="480.0" x2="917.0" y2="480.0" stroke="#f0e0a0" stroke-width="1"/>
<line x1="917.5" y1="304.0" x2="968.5" y2="304.0" stroke="#2e3ea4" stroke-width="1"/>
<line x1="968.0" y1="144.0" x2="968.0" y2="304.5" stroke="#2e3ea4" stroke-width="1"/>
<line x1="917.5" y1="144.5" x2="968.5" y2="144.5" stroke="#e8dca0" stroke-width="1"/>
<line x1="917.5" y1="387.5" x2="968.5" y2="387.5" stroke="#2e3ea4" stroke-width="1"/>
<line x1="968.0" y1="321.5" x2="968.0" y2="388.0" stroke="#2e3ea4" stroke-width="1"/>
<line x1="917.5" y1="322.0" x2="968.5" y2="322.0" stroke="#e8dca0" stroke-width="1"/>
<line x1="917.5" y1="483.0" x2="968.5" y2="483.0" stroke="#2e3ea4" stroke-width="1"/>
<line x1="968.0" y1="406.0" x2="968.0" y2="483.5" stroke="#2e3ea4" stroke-width="1"/>
<line x1="917.5" y1="406.5" x2="968.5" y2="406.5" stroke="#e8dca0" stroke-width="1"/>
<text x="966.0" y="172.3" fill="#f4f4b4" font-size="12" text-anchor="end" textLength="38.5" lengthAdjust="spacingAndGlyphs" >8900,00</text>
<text x="966.0" y="199.3" fill="#f4f4b4" font-size="12" text-anchor="end" textLength="38.5" lengthAdjust="spacingAndGlyphs" >8800,00</text>
<text x="966.0" y="226.3" fill="#f4f4b4" font-size="12" text-anchor="end" textLength="38.5" lengthAdjust="spacingAndGlyphs" >8700,00</text>
<text x="966.0" y="253.3" fill="#f4f4b4" font-size="12" text-anchor="end" textLength="38.5" lengthAdjust="spacingAndGlyphs" >8600,00</text>
<text x="966.0" y="279.8" fill="#f4f4b4" font-size="12" text-anchor="end" textLength="38.5" lengthAdjust="spacingAndGlyphs" >8500,00</text>
<text x="966.0" y="302.9" fill="#f4f4b4" font-size="12" text-anchor="end" textLength="38.5" lengthAdjust="spacingAndGlyphs" >8400,00</text>
<rect x="917.6" y="145.0" width="41.5" height="11.0" fill="#ffff20" />
<text x="918.6" y="154.5" fill="#000" font-size="12" text-anchor="start" textLength="39.5" lengthAdjust="spacingAndGlyphs" >8981,98</text>
<text x="966.0" y="333.0" fill="#f4f4b4" font-size="12" text-anchor="end" textLength="47.0" lengthAdjust="spacingAndGlyphs" >100,0000</text>
<rect x="918.0" y="322.6" width="41.0" height="11.0" fill="#20f0f0" />
<text x="919.0" y="332.1" fill="#003838" font-size="12" text-anchor="start" textLength="39.0" lengthAdjust="spacingAndGlyphs" >97,7576</text>
<text x="966.0" y="359.3" fill="#f4f4b4" font-size="12" text-anchor="end" textLength="39.0" lengthAdjust="spacingAndGlyphs" >50,0000</text>
<text x="966.0" y="387.0" fill="#f4f4b4" font-size="12" text-anchor="end" >0</text>
<text x="966.0" y="417.0" fill="#f4f4b4" font-size="12" text-anchor="end" textLength="47.0" lengthAdjust="spacingAndGlyphs" >100,0000</text>
<rect x="918.0" y="406.6" width="41.0" height="11.0" fill="#20f0f0" />
<text x="919.0" y="416.1" fill="#003838" font-size="12" text-anchor="start" textLength="39.0" lengthAdjust="spacingAndGlyphs" >99,6553</text>
<text x="966.0" y="448.3" fill="#f4f4b4" font-size="12" text-anchor="end" textLength="39.0" lengthAdjust="spacingAndGlyphs" >50,0000</text>
<text x="966.0" y="479.7" fill="#f4f4b4" font-size="12" text-anchor="end" >0</text>
<line x1="538.0" y1="483.4" x2="917.0" y2="483.4" stroke="#ffffff" stroke-width="1.4"/>
<line x1="538.0" y1="485.6" x2="917.0" y2="485.6" stroke="#d8d4b0" stroke-width="0.8"/>
<line x1="587.6" y1="484.0" x2="587.6" y2="487.0" stroke="#f4f0d0" stroke-width="1"/>
<line x1="641.6" y1="484.0" x2="641.6" y2="487.0" stroke="#f4f0d0" stroke-width="1"/>
<line x1="695.6" y1="484.0" x2="695.6" y2="487.0" stroke="#f4f0d0" stroke-width="1"/>
<line x1="749.6" y1="484.0" x2="749.6" y2="487.0" stroke="#f4f0d0" stroke-width="1"/>
<line x1="803.6" y1="484.0" x2="803.6" y2="487.0" stroke="#f4f0d0" stroke-width="1"/>
<line x1="857.6" y1="484.0" x2="857.6" y2="487.0" stroke="#f4f0d0" stroke-width="1"/>
<line x1="893.6" y1="484.0" x2="893.6" y2="487.0" stroke="#f4f0d0" stroke-width="1"/>
<text x="587.6" y="498.6" fill="#f4f4b4" font-size="12.5" text-anchor="middle" >22</text>
<text x="641.6" y="498.6" fill="#f4f4b4" font-size="12.5" text-anchor="middle" >23</text>
<text x="695.6" y="498.6" fill="#f4f4b4" font-size="12.5" text-anchor="middle" >27</text>
<text x="749.6" y="498.6" fill="#f4f4b4" font-size="12.5" text-anchor="middle" >28</text>
<text x="803.6" y="498.6" fill="#f4f4b4" font-size="12.5" text-anchor="middle" >29</text>
<text x="857.6" y="498.6" fill="#f4f4b4" font-size="12.5" text-anchor="middle" >30</text>
<text x="893.6" y="498.6" fill="#f4f4b4" font-size="12.5" text-anchor="middle" >Jan</text>
<path d="M936 498.5 L947.5 487.5" stroke="#222" stroke-width="1.2" shape-rendering="auto"/>
<path d="M945 488.5 L949 487 L951 491.5 L949.5 496.5 L944 493.5 Z" fill="#1a3ab8" shape-rendering="auto"/></svg>
</body></html>
